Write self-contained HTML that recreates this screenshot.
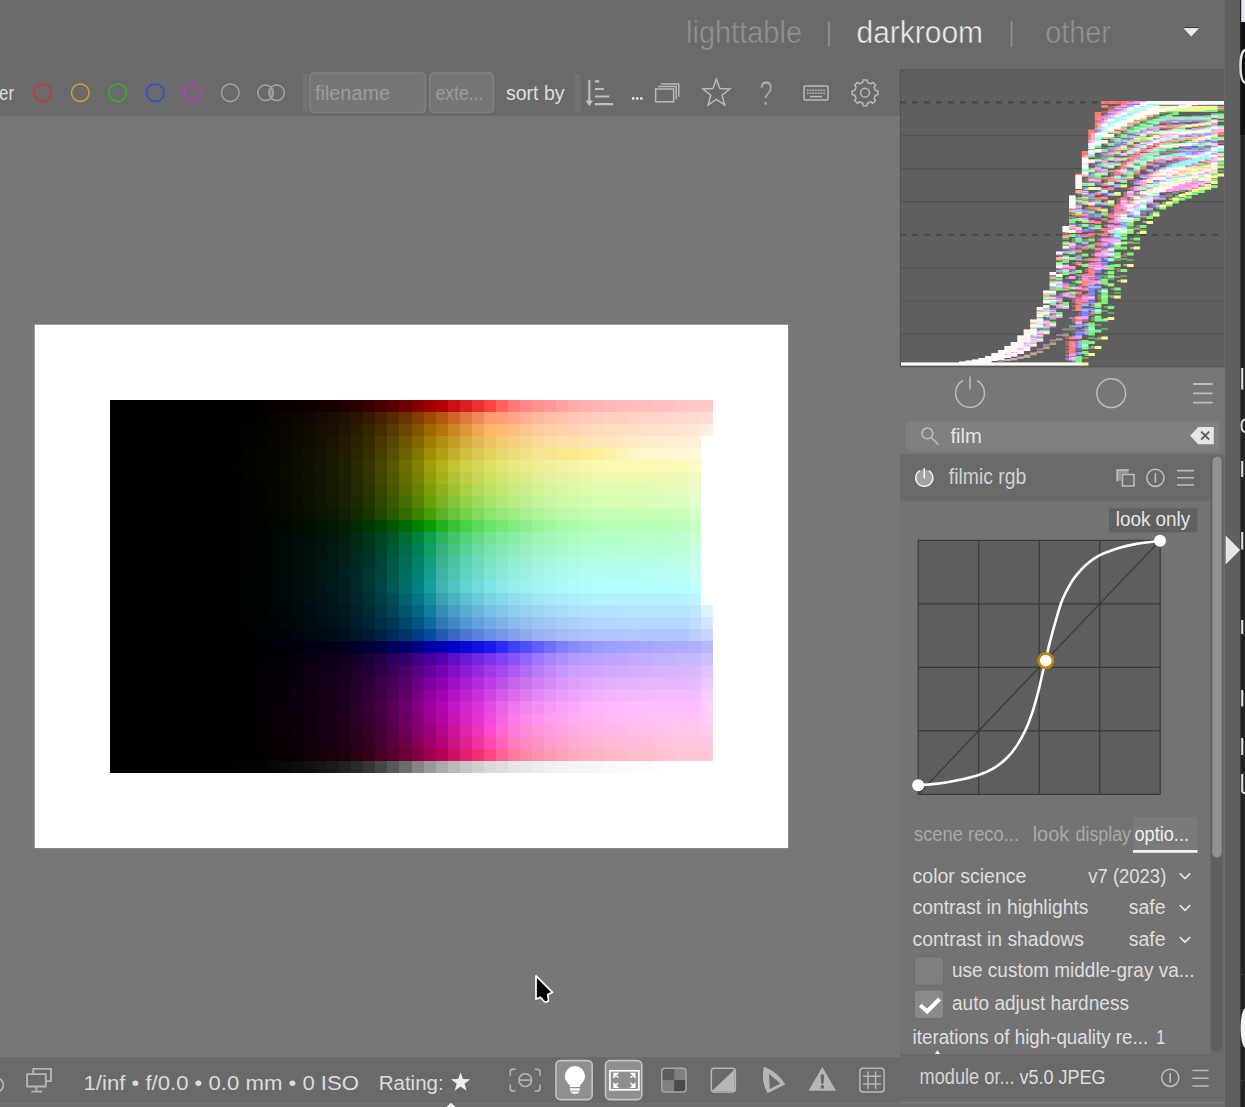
<!DOCTYPE html>
<html lang="en"><head><meta charset="utf-8"><title>darktable - darkroom</title>
<style>
html,body{margin:0;padding:0;background:#777;overflow:hidden}
body{width:1245px;height:1107px;font-family:"Liberation Sans", sans-serif}
svg{display:block;font-family:"Liberation Sans", sans-serif}
.ic{fill:none;stroke:#b9b9b9;stroke-width:1.5}
.icw{fill:none;stroke:#dcdcdc;stroke-width:1.6}
</style></head><body>
<svg width="1245" height="1107" viewBox="0 0 1245 1107">
<rect x="0" y="0" width="1245" height="1107" fill="#777777"/>
<rect x="0" y="0" width="1225" height="116" fill="#6a6a6a"/>
<rect x="900" y="69" width="325" height="400" fill="#777777"/>
<rect x="0" y="1103.3" width="1225" height="4" fill="#707070"/>
<text x="686" y="42.5" font-size="31" fill="#929292" textLength="116" lengthAdjust="spacingAndGlyphs" stroke="#6a6a6a" stroke-width=".45">lighttable</text>
<text x="825.5" y="41" font-size="27" fill="#929292" stroke="#6a6a6a" stroke-width=".45">|</text>
<text x="856.5" y="42.5" font-size="31" fill="#ededed" textLength="126.5" lengthAdjust="spacingAndGlyphs" stroke="#6a6a6a" stroke-width=".45">darkroom</text>
<text x="1008" y="41" font-size="27" fill="#929292" stroke="#6a6a6a" stroke-width=".45">|</text>
<text x="1045.2" y="42.5" font-size="31" fill="#929292" textLength="65.8" lengthAdjust="spacingAndGlyphs" stroke="#6a6a6a" stroke-width=".45">other</text>
<path d="M1183.2 28h16l-8 8.6z" fill="#ececec"/><path d="M1183.6 27.6h15.2" stroke="#3c3c3c" stroke-width="1"/>
<text x="-1" y="99.5" font-size="20" fill="#dedede" textLength="15" lengthAdjust="spacingAndGlyphs">er</text>
<circle cx="42.7" cy="92.7" r="8.8" fill="none" stroke="#c83434" stroke-width="1.5"/>
<circle cx="80.3" cy="92.7" r="8.8" fill="none" stroke="#d6a12e" stroke-width="1.5"/>
<circle cx="117.7" cy="92.7" r="8.8" fill="none" stroke="#31b431" stroke-width="1.5"/>
<circle cx="155.3" cy="92.7" r="8.8" fill="none" stroke="#3148dc" stroke-width="1.5"/>
<circle cx="193" cy="92.7" r="8.8" fill="none" stroke="#c631c6" stroke-width="1.5"/>
<circle cx="230.3" cy="92.7" r="8.8" fill="none" stroke="#a4a4a4" stroke-width="1.5"/>
<circle cx="265.6" cy="92.7" r="7.8" fill="none" stroke="#a4a4a4" stroke-width="1.5"/>
<circle cx="276.6" cy="92.7" r="7.8" fill="none" stroke="#a4a4a4" stroke-width="1.5"/>
<path d="M271.1 87.2a7.8 7.8 0 0 1 0 11a7.8 7.8 0 0 1 0 -11z" fill="#a4a4a4" opacity=".55"/>
<rect x="303" y="73.9" width="5.1" height="37.7" fill="#737373"/>
<rect x="309.7" y="73" width="115.8" height="39.4" fill="#767676" rx="4" stroke="#838383" stroke-width="1.4"/>
<text x="315" y="99.5" font-size="20" fill="#9c9c9c" textLength="75" lengthAdjust="spacingAndGlyphs">filename</text>
<rect x="429.7" y="73" width="63.8" height="39.4" fill="#767676" rx="4" stroke="#838383" stroke-width="1.4"/>
<text x="435.5" y="99.5" font-size="20" fill="#9c9c9c" textLength="48" lengthAdjust="spacingAndGlyphs">exte...</text>
<text x="506" y="99.5" font-size="20" fill="#dedede" textLength="58.5" lengthAdjust="spacingAndGlyphs">sort by</text>
<rect x="575.2" y="73.9" width="5.3" height="37.7" fill="#737373"/>
<path d="M589.3 80v21" stroke="#c0c0c0" stroke-width="2.1" fill="none"/><path d="M585.7 100.4h7.3l-3.65 5.9z" fill="#c0c0c0"/>
<path d="M595 81.3h4.2M595 89h9M595 96.5h14.2M595 104.2h18.2" stroke="#c0c0c0" stroke-width="2.2" fill="none"/>
<g fill="#e6e6e6"><rect x="632" y="97.2" width="2.5" height="2.5"/><rect x="636" y="97.2" width="2.5" height="2.5"/><rect x="640" y="97.2" width="2.5" height="2.5"/></g>
<g class="ic" stroke-width="1.7"><rect x="655.6" y="89" width="18" height="12.8"/><path d="M658.2 86.4h18v12.8M660.8 83.9h18v12.8"/></g>
<polygon class="ic" points="716.4,79.2 719.9,88.6 729.9,89.0 722.0,95.2 724.7,104.9 716.4,99.3 708.1,104.9 710.8,95.2 702.9,89.0 712.9,88.6"/>
<text x="759.6" y="104.7" font-size="35" fill="#b4b4b4" textLength="13" lengthAdjust="spacingAndGlyphs" stroke="#6a6a6a" stroke-width=".7">?</text>
<g class="ic" stroke-width="1.4"><rect x="804" y="86" width="24" height="14" rx="1"/><path d="M807 90.2h18M807 93.2h18" stroke-dasharray="1.6 1.1"/><path d="M810 96.6h12"/></g>
<path class="ic" d="M862.8 82.4L863.2 79.9L867.0 79.9L867.4 82.4L870.8 83.8L872.8 82.3L875.6 85.1L874.1 87.1L875.5 90.5L878.0 90.9L878.0 94.7L875.5 95.1L874.1 98.5L875.6 100.5L872.8 103.3L870.8 101.8L867.4 103.2L867.0 105.7L863.2 105.7L862.8 103.2L859.4 101.8L857.4 103.3L854.6 100.5L856.1 98.5L854.7 95.1L852.2 94.7L852.2 90.9L854.7 90.5L856.1 87.1L854.6 85.1L857.4 82.3L859.4 83.8z" stroke-linejoin="round"/>
<circle class="ic" cx="865" cy="92.7" r="4.4"/>
<rect x="34.7" y="324.7" width="753.4" height="523.4" fill="#ffffff"/>
<g shape-rendering="crispEdges">
<rect x="110" y="400" width="603" height="373" fill="#000"/>
<rect x="219" y="400" width="12" height="12" fill="#010000"/>
<rect x="231" y="400" width="12" height="12" fill="#020000"/>
<rect x="243" y="400" width="12" height="12" fill="#030000"/>
<rect x="255" y="400" width="12" height="12" fill="#040000"/>
<rect x="267" y="400" width="12" height="12" fill="#060000"/>
<rect x="279" y="400" width="12" height="12" fill="#090000"/>
<rect x="291" y="400" width="12" height="12" fill="#0c0000"/>
<rect x="303" y="400" width="12" height="12" fill="#100000"/>
<rect x="315" y="400" width="12" height="12" fill="#140000"/>
<rect x="327" y="400" width="12" height="12" fill="#190000"/>
<rect x="339" y="400" width="12" height="12" fill="#200000"/>
<rect x="351" y="400" width="12" height="12" fill="#2a0000"/>
<rect x="363" y="400" width="12" height="12" fill="#360000"/>
<rect x="375" y="400" width="12" height="12" fill="#460000"/>
<rect x="387" y="400" width="12" height="12" fill="#580000"/>
<rect x="399" y="400" width="13" height="12" fill="#6c0000"/>
<rect x="412" y="400" width="12" height="12" fill="#820000"/>
<rect x="424" y="400" width="12" height="12" fill="#9e0000"/>
<rect x="436" y="400" width="12" height="12" fill="#b20000"/>
<rect x="448" y="400" width="12" height="12" fill="#ca1010"/>
<rect x="460" y="400" width="12" height="12" fill="#de1f1f"/>
<rect x="472" y="400" width="12" height="12" fill="#ef3030"/>
<rect x="484" y="400" width="12" height="12" fill="#ff4242"/>
<rect x="496" y="400" width="12" height="12" fill="#ff6161"/>
<rect x="508" y="400" width="12" height="12" fill="#ff7878"/>
<rect x="520" y="400" width="12" height="12" fill="#ff8787"/>
<rect x="532" y="400" width="12" height="12" fill="#ff9191"/>
<rect x="544" y="400" width="12" height="12" fill="#ff9999"/>
<rect x="556" y="400" width="12" height="12" fill="#ffa2a2"/>
<rect x="568" y="400" width="12" height="12" fill="#ffaaaa"/>
<rect x="580" y="400" width="12" height="12" fill="#ffb0b0"/>
<rect x="592" y="400" width="12" height="12" fill="#ffb4b4"/>
<rect x="604" y="400" width="13" height="12" fill="#ffb7b7"/>
<rect x="617" y="400" width="12" height="12" fill="#ffbaba"/>
<rect x="629" y="400" width="12" height="12" fill="#ffbcbc"/>
<rect x="641" y="400" width="12" height="12" fill="#ffbebe"/>
<rect x="653" y="400" width="12" height="12" fill="#ffc0c0"/>
<rect x="665" y="400" width="12" height="12" fill="#ffc2c2"/>
<rect x="677" y="400" width="12" height="12" fill="#ffc4c4"/>
<rect x="689" y="400" width="12" height="12" fill="#ffc6c6"/>
<rect x="701" y="400" width="12" height="12" fill="#ffc8c8"/>
<rect x="219" y="412" width="12" height="12" fill="#010000"/>
<rect x="231" y="412" width="12" height="12" fill="#020100"/>
<rect x="243" y="412" width="12" height="12" fill="#030100"/>
<rect x="255" y="412" width="12" height="12" fill="#040200"/>
<rect x="267" y="412" width="12" height="12" fill="#060300"/>
<rect x="279" y="412" width="12" height="12" fill="#090400"/>
<rect x="291" y="412" width="12" height="12" fill="#0c0600"/>
<rect x="303" y="412" width="12" height="12" fill="#100800"/>
<rect x="315" y="412" width="12" height="12" fill="#140a00"/>
<rect x="327" y="412" width="12" height="12" fill="#190c00"/>
<rect x="339" y="412" width="12" height="12" fill="#200f00"/>
<rect x="351" y="412" width="12" height="12" fill="#2a1400"/>
<rect x="363" y="412" width="12" height="12" fill="#361a00"/>
<rect x="375" y="412" width="12" height="12" fill="#462200"/>
<rect x="387" y="412" width="12" height="12" fill="#582a00"/>
<rect x="399" y="412" width="13" height="12" fill="#6c3400"/>
<rect x="412" y="412" width="12" height="12" fill="#823f00"/>
<rect x="424" y="412" width="12" height="12" fill="#9e4c00"/>
<rect x="436" y="412" width="12" height="12" fill="#b25711"/>
<rect x="448" y="412" width="12" height="12" fill="#ca6628"/>
<rect x="460" y="412" width="12" height="12" fill="#de7741"/>
<rect x="472" y="412" width="12" height="12" fill="#ef8857"/>
<rect x="484" y="412" width="12" height="12" fill="#ff986b"/>
<rect x="496" y="412" width="12" height="12" fill="#ff9e77"/>
<rect x="508" y="412" width="12" height="12" fill="#ffa583"/>
<rect x="520" y="412" width="12" height="12" fill="#ffb195"/>
<rect x="532" y="412" width="12" height="12" fill="#ffb79f"/>
<rect x="544" y="412" width="12" height="12" fill="#ffbea8"/>
<rect x="556" y="412" width="12" height="12" fill="#ffc2af"/>
<rect x="568" y="412" width="12" height="12" fill="#ffc7b5"/>
<rect x="580" y="412" width="12" height="12" fill="#ffcaba"/>
<rect x="592" y="412" width="12" height="12" fill="#ffcdbe"/>
<rect x="604" y="412" width="13" height="12" fill="#ffcfc0"/>
<rect x="617" y="412" width="12" height="12" fill="#ffd0c2"/>
<rect x="629" y="412" width="12" height="12" fill="#ffd2c5"/>
<rect x="641" y="412" width="12" height="12" fill="#ffd4c7"/>
<rect x="653" y="412" width="12" height="12" fill="#ffd5c9"/>
<rect x="665" y="412" width="12" height="12" fill="#ffd7cb"/>
<rect x="677" y="412" width="12" height="12" fill="#ffd9ce"/>
<rect x="689" y="412" width="12" height="12" fill="#ffdad0"/>
<rect x="701" y="412" width="12" height="12" fill="#ffddd4"/>
<rect x="219" y="424" width="12" height="12" fill="#010000"/>
<rect x="231" y="424" width="12" height="12" fill="#020100"/>
<rect x="243" y="424" width="12" height="12" fill="#030200"/>
<rect x="255" y="424" width="12" height="12" fill="#040300"/>
<rect x="267" y="424" width="12" height="12" fill="#060400"/>
<rect x="279" y="424" width="12" height="12" fill="#090600"/>
<rect x="291" y="424" width="12" height="12" fill="#0c0800"/>
<rect x="303" y="424" width="12" height="12" fill="#100b00"/>
<rect x="315" y="424" width="12" height="12" fill="#140d00"/>
<rect x="327" y="424" width="12" height="12" fill="#191100"/>
<rect x="339" y="424" width="12" height="12" fill="#201500"/>
<rect x="351" y="424" width="12" height="12" fill="#2a1c00"/>
<rect x="363" y="424" width="12" height="12" fill="#362300"/>
<rect x="375" y="424" width="12" height="12" fill="#462e00"/>
<rect x="387" y="424" width="12" height="12" fill="#583a00"/>
<rect x="399" y="424" width="13" height="12" fill="#6c4700"/>
<rect x="412" y="424" width="12" height="12" fill="#825600"/>
<rect x="424" y="424" width="12" height="12" fill="#9e6800"/>
<rect x="436" y="424" width="12" height="12" fill="#b2760b"/>
<rect x="448" y="424" width="12" height="12" fill="#c98722"/>
<rect x="460" y="424" width="12" height="12" fill="#de983b"/>
<rect x="472" y="424" width="12" height="12" fill="#eea752"/>
<rect x="484" y="424" width="12" height="12" fill="#feb667"/>
<rect x="496" y="424" width="12" height="12" fill="#ffbb74"/>
<rect x="508" y="424" width="12" height="12" fill="#ffbf80"/>
<rect x="520" y="424" width="12" height="12" fill="#ffc58f"/>
<rect x="532" y="424" width="12" height="12" fill="#ffcc9e"/>
<rect x="544" y="424" width="12" height="12" fill="#ffcfa6"/>
<rect x="556" y="424" width="12" height="12" fill="#ffd3ad"/>
<rect x="568" y="424" width="12" height="12" fill="#ffd6b5"/>
<rect x="580" y="424" width="12" height="12" fill="#ffd8b9"/>
<rect x="592" y="424" width="12" height="12" fill="#ffdabd"/>
<rect x="604" y="424" width="13" height="12" fill="#ffddc1"/>
<rect x="617" y="424" width="12" height="12" fill="#ffdfc6"/>
<rect x="629" y="424" width="12" height="12" fill="#ffe0c8"/>
<rect x="641" y="424" width="12" height="12" fill="#ffe2cb"/>
<rect x="653" y="424" width="12" height="12" fill="#ffe3ce"/>
<rect x="665" y="424" width="12" height="12" fill="#ffe5d1"/>
<rect x="677" y="424" width="12" height="12" fill="#ffe6d3"/>
<rect x="689" y="424" width="12" height="12" fill="#ffe8d6"/>
<rect x="701" y="424" width="12" height="12" fill="#ffefe4"/>
<rect x="219" y="436" width="12" height="12" fill="#010000"/>
<rect x="231" y="436" width="12" height="12" fill="#020100"/>
<rect x="243" y="436" width="12" height="12" fill="#030200"/>
<rect x="255" y="436" width="12" height="12" fill="#040300"/>
<rect x="267" y="436" width="12" height="12" fill="#060500"/>
<rect x="279" y="436" width="12" height="12" fill="#090700"/>
<rect x="291" y="436" width="12" height="12" fill="#0c0900"/>
<rect x="303" y="436" width="12" height="12" fill="#100d00"/>
<rect x="315" y="436" width="12" height="12" fill="#141000"/>
<rect x="327" y="436" width="12" height="12" fill="#191400"/>
<rect x="339" y="436" width="12" height="12" fill="#201900"/>
<rect x="351" y="436" width="12" height="12" fill="#2a2100"/>
<rect x="363" y="436" width="12" height="12" fill="#362a00"/>
<rect x="375" y="436" width="12" height="12" fill="#463800"/>
<rect x="387" y="436" width="12" height="12" fill="#584600"/>
<rect x="399" y="436" width="13" height="12" fill="#6c5600"/>
<rect x="412" y="436" width="12" height="12" fill="#826700"/>
<rect x="424" y="436" width="12" height="12" fill="#9e7d00"/>
<rect x="436" y="436" width="12" height="12" fill="#b28e13"/>
<rect x="448" y="436" width="12" height="12" fill="#c59e29"/>
<rect x="460" y="436" width="12" height="12" fill="#d5ac40"/>
<rect x="472" y="436" width="12" height="12" fill="#e1b853"/>
<rect x="484" y="436" width="12" height="12" fill="#ecc364"/>
<rect x="496" y="436" width="12" height="12" fill="#f1ca72"/>
<rect x="508" y="436" width="12" height="12" fill="#f5cf7f"/>
<rect x="520" y="436" width="12" height="12" fill="#f7d48b"/>
<rect x="532" y="436" width="12" height="12" fill="#fbda97"/>
<rect x="544" y="436" width="12" height="12" fill="#fedea0"/>
<rect x="556" y="436" width="12" height="12" fill="#ffe1a7"/>
<rect x="568" y="436" width="12" height="12" fill="#ffe1a8"/>
<rect x="580" y="436" width="12" height="12" fill="#ffe3b0"/>
<rect x="592" y="436" width="12" height="12" fill="#ffe6b8"/>
<rect x="604" y="436" width="13" height="12" fill="#ffe7bd"/>
<rect x="617" y="436" width="12" height="12" fill="#ffe9c2"/>
<rect x="629" y="436" width="12" height="12" fill="#ffeac7"/>
<rect x="641" y="436" width="12" height="12" fill="#ffeccc"/>
<rect x="653" y="436" width="12" height="12" fill="#ffedcf"/>
<rect x="665" y="436" width="12" height="12" fill="#ffeed2"/>
<rect x="677" y="436" width="12" height="12" fill="#ffefd6"/>
<rect x="689" y="436" width="12" height="12" fill="#fff1d9"/>
<rect x="701" y="436" width="12" height="12" fill="#ffffff"/>
<rect x="219" y="448" width="12" height="12" fill="#010000"/>
<rect x="231" y="448" width="12" height="12" fill="#020100"/>
<rect x="243" y="448" width="12" height="12" fill="#030300"/>
<rect x="255" y="448" width="12" height="12" fill="#040400"/>
<rect x="267" y="448" width="12" height="12" fill="#060600"/>
<rect x="279" y="448" width="12" height="12" fill="#090800"/>
<rect x="291" y="448" width="12" height="12" fill="#0c0b00"/>
<rect x="303" y="448" width="12" height="12" fill="#100f00"/>
<rect x="315" y="448" width="12" height="12" fill="#141200"/>
<rect x="327" y="448" width="12" height="12" fill="#191700"/>
<rect x="339" y="448" width="12" height="12" fill="#201d00"/>
<rect x="351" y="448" width="12" height="12" fill="#2a2600"/>
<rect x="363" y="448" width="12" height="12" fill="#363000"/>
<rect x="375" y="448" width="12" height="12" fill="#463f00"/>
<rect x="387" y="448" width="12" height="12" fill="#584f00"/>
<rect x="399" y="448" width="13" height="12" fill="#6c6200"/>
<rect x="412" y="448" width="12" height="12" fill="#827600"/>
<rect x="424" y="448" width="12" height="12" fill="#9e8f03"/>
<rect x="436" y="448" width="12" height="12" fill="#b2a117"/>
<rect x="448" y="448" width="12" height="12" fill="#c3b12d"/>
<rect x="460" y="448" width="12" height="12" fill="#d1bf42"/>
<rect x="472" y="448" width="12" height="12" fill="#dbc954"/>
<rect x="484" y="448" width="12" height="12" fill="#e4d263"/>
<rect x="496" y="448" width="12" height="12" fill="#e9d870"/>
<rect x="508" y="448" width="12" height="12" fill="#eddc7d"/>
<rect x="520" y="448" width="12" height="12" fill="#f0e088"/>
<rect x="532" y="448" width="12" height="12" fill="#f4e494"/>
<rect x="544" y="448" width="12" height="12" fill="#f6e58a"/>
<rect x="556" y="448" width="12" height="12" fill="#f9e88c"/>
<rect x="568" y="448" width="12" height="12" fill="#fbea8f"/>
<rect x="580" y="448" width="12" height="12" fill="#fded94"/>
<rect x="592" y="448" width="12" height="12" fill="#ffef99"/>
<rect x="604" y="448" width="13" height="12" fill="#fff1a8"/>
<rect x="617" y="448" width="12" height="12" fill="#fff3b8"/>
<rect x="629" y="448" width="12" height="12" fill="#fff5c8"/>
<rect x="641" y="448" width="12" height="12" fill="#fff6cb"/>
<rect x="653" y="448" width="12" height="12" fill="#fff6cf"/>
<rect x="665" y="448" width="12" height="12" fill="#fff7d2"/>
<rect x="677" y="448" width="12" height="12" fill="#fff7d5"/>
<rect x="689" y="448" width="12" height="12" fill="#fff8d9"/>
<rect x="701" y="448" width="12" height="12" fill="#ffffff"/>
<rect x="219" y="460" width="12" height="12" fill="#010100"/>
<rect x="231" y="460" width="12" height="12" fill="#020200"/>
<rect x="243" y="460" width="12" height="12" fill="#030300"/>
<rect x="255" y="460" width="12" height="12" fill="#040400"/>
<rect x="267" y="460" width="12" height="12" fill="#060600"/>
<rect x="279" y="460" width="12" height="12" fill="#090900"/>
<rect x="291" y="460" width="12" height="12" fill="#0c0c00"/>
<rect x="303" y="460" width="12" height="12" fill="#101000"/>
<rect x="315" y="460" width="12" height="12" fill="#141400"/>
<rect x="327" y="460" width="12" height="12" fill="#191900"/>
<rect x="339" y="460" width="12" height="12" fill="#202000"/>
<rect x="351" y="460" width="12" height="12" fill="#2a2a00"/>
<rect x="363" y="460" width="12" height="12" fill="#363600"/>
<rect x="375" y="460" width="12" height="12" fill="#464600"/>
<rect x="387" y="460" width="12" height="12" fill="#585800"/>
<rect x="399" y="460" width="13" height="12" fill="#6c6c00"/>
<rect x="412" y="460" width="12" height="12" fill="#828200"/>
<rect x="424" y="460" width="12" height="12" fill="#9e9e08"/>
<rect x="436" y="460" width="12" height="12" fill="#b2b21d"/>
<rect x="448" y="460" width="12" height="12" fill="#c2c232"/>
<rect x="460" y="460" width="12" height="12" fill="#cfcf46"/>
<rect x="472" y="460" width="12" height="12" fill="#d7d756"/>
<rect x="484" y="460" width="12" height="12" fill="#dfdf64"/>
<rect x="496" y="460" width="12" height="12" fill="#e4e471"/>
<rect x="508" y="460" width="12" height="12" fill="#e8e87d"/>
<rect x="520" y="460" width="12" height="12" fill="#ebeb88"/>
<rect x="532" y="460" width="12" height="12" fill="#eeee94"/>
<rect x="544" y="460" width="12" height="12" fill="#f1f19b"/>
<rect x="556" y="460" width="12" height="12" fill="#f4f4a2"/>
<rect x="568" y="460" width="12" height="12" fill="#f6f6a7"/>
<rect x="580" y="460" width="12" height="12" fill="#f8f8ab"/>
<rect x="592" y="460" width="12" height="12" fill="#fafaaf"/>
<rect x="604" y="460" width="13" height="12" fill="#fafab0"/>
<rect x="617" y="460" width="24" height="12" fill="#fafab1"/>
<rect x="641" y="460" width="12" height="12" fill="#fafab3"/>
<rect x="653" y="460" width="12" height="12" fill="#fafab4"/>
<rect x="665" y="460" width="12" height="12" fill="#fafab6"/>
<rect x="677" y="460" width="12" height="12" fill="#fafab9"/>
<rect x="689" y="460" width="12" height="12" fill="#fafac4"/>
<rect x="701" y="460" width="12" height="12" fill="#ffffff"/>
<rect x="219" y="472" width="12" height="12" fill="#000100"/>
<rect x="231" y="472" width="12" height="12" fill="#010200"/>
<rect x="243" y="472" width="12" height="12" fill="#030300"/>
<rect x="255" y="472" width="12" height="12" fill="#040400"/>
<rect x="267" y="472" width="12" height="12" fill="#060600"/>
<rect x="279" y="472" width="12" height="12" fill="#080900"/>
<rect x="291" y="472" width="12" height="12" fill="#0b0c00"/>
<rect x="303" y="472" width="12" height="12" fill="#0f1000"/>
<rect x="315" y="472" width="12" height="12" fill="#121400"/>
<rect x="327" y="472" width="12" height="12" fill="#171900"/>
<rect x="339" y="472" width="12" height="12" fill="#1d2000"/>
<rect x="351" y="472" width="12" height="12" fill="#262a00"/>
<rect x="363" y="472" width="12" height="12" fill="#303600"/>
<rect x="375" y="472" width="12" height="12" fill="#3f4600"/>
<rect x="387" y="472" width="12" height="12" fill="#4f5800"/>
<rect x="399" y="472" width="13" height="12" fill="#626c00"/>
<rect x="412" y="472" width="12" height="12" fill="#768200"/>
<rect x="424" y="472" width="12" height="12" fill="#8f9e08"/>
<rect x="436" y="472" width="12" height="12" fill="#a2b21d"/>
<rect x="448" y="472" width="12" height="12" fill="#b0c232"/>
<rect x="460" y="472" width="12" height="12" fill="#bdcf46"/>
<rect x="472" y="472" width="12" height="12" fill="#c6d756"/>
<rect x="484" y="472" width="12" height="12" fill="#cedf64"/>
<rect x="496" y="472" width="12" height="12" fill="#d3e471"/>
<rect x="508" y="472" width="12" height="12" fill="#d8e87d"/>
<rect x="520" y="472" width="12" height="12" fill="#dbeb88"/>
<rect x="532" y="472" width="12" height="12" fill="#e0ee94"/>
<rect x="544" y="472" width="12" height="12" fill="#e3f19b"/>
<rect x="556" y="472" width="12" height="12" fill="#e6f4a2"/>
<rect x="568" y="472" width="12" height="12" fill="#e9f6a7"/>
<rect x="580" y="472" width="12" height="12" fill="#ebf8ab"/>
<rect x="592" y="472" width="12" height="12" fill="#edfaaf"/>
<rect x="604" y="472" width="13" height="12" fill="#edfab0"/>
<rect x="617" y="472" width="12" height="12" fill="#edfab1"/>
<rect x="629" y="472" width="12" height="12" fill="#eefab1"/>
<rect x="641" y="472" width="12" height="12" fill="#eefab3"/>
<rect x="653" y="472" width="12" height="12" fill="#eefab4"/>
<rect x="665" y="472" width="12" height="12" fill="#eefab6"/>
<rect x="677" y="472" width="12" height="12" fill="#effab9"/>
<rect x="689" y="472" width="12" height="12" fill="#f0fac4"/>
<rect x="701" y="472" width="12" height="12" fill="#ffffff"/>
<rect x="219" y="484" width="12" height="12" fill="#000100"/>
<rect x="231" y="484" width="12" height="12" fill="#010200"/>
<rect x="243" y="484" width="12" height="12" fill="#020300"/>
<rect x="255" y="484" width="12" height="12" fill="#030400"/>
<rect x="267" y="484" width="12" height="12" fill="#050600"/>
<rect x="279" y="484" width="12" height="12" fill="#070900"/>
<rect x="291" y="484" width="12" height="12" fill="#090c00"/>
<rect x="303" y="484" width="12" height="12" fill="#0d1000"/>
<rect x="315" y="484" width="12" height="12" fill="#101400"/>
<rect x="327" y="484" width="12" height="12" fill="#141900"/>
<rect x="339" y="484" width="12" height="12" fill="#192000"/>
<rect x="351" y="484" width="12" height="12" fill="#212a00"/>
<rect x="363" y="484" width="12" height="12" fill="#2a3600"/>
<rect x="375" y="484" width="12" height="12" fill="#384600"/>
<rect x="387" y="484" width="12" height="12" fill="#465800"/>
<rect x="399" y="484" width="13" height="12" fill="#566c00"/>
<rect x="412" y="484" width="12" height="12" fill="#678200"/>
<rect x="424" y="484" width="12" height="12" fill="#7d9e08"/>
<rect x="436" y="484" width="12" height="12" fill="#8eb21d"/>
<rect x="448" y="484" width="12" height="12" fill="#9dc233"/>
<rect x="460" y="484" width="12" height="12" fill="#a9d047"/>
<rect x="472" y="484" width="12" height="12" fill="#b3d957"/>
<rect x="484" y="484" width="12" height="12" fill="#bce266"/>
<rect x="496" y="484" width="12" height="12" fill="#c2e772"/>
<rect x="508" y="484" width="12" height="12" fill="#c8eb7f"/>
<rect x="520" y="484" width="12" height="12" fill="#cced8a"/>
<rect x="532" y="484" width="12" height="12" fill="#d2f195"/>
<rect x="544" y="484" width="12" height="12" fill="#d6f49d"/>
<rect x="556" y="484" width="12" height="12" fill="#daf6a4"/>
<rect x="568" y="484" width="12" height="12" fill="#ddf9a9"/>
<rect x="580" y="484" width="12" height="12" fill="#dffbad"/>
<rect x="592" y="484" width="12" height="12" fill="#e2fcb1"/>
<rect x="604" y="484" width="25" height="12" fill="#e2fcb2"/>
<rect x="629" y="484" width="12" height="12" fill="#e3fcb3"/>
<rect x="641" y="484" width="12" height="12" fill="#e3fcb5"/>
<rect x="653" y="484" width="12" height="12" fill="#e4fcb7"/>
<rect x="665" y="484" width="12" height="12" fill="#e5fcbb"/>
<rect x="677" y="484" width="12" height="12" fill="#e6fcbe"/>
<rect x="689" y="484" width="12" height="12" fill="#eafcca"/>
<rect x="701" y="484" width="12" height="12" fill="#ffffff"/>
<rect x="219" y="496" width="12" height="12" fill="#000100"/>
<rect x="231" y="496" width="12" height="12" fill="#010200"/>
<rect x="243" y="496" width="12" height="12" fill="#020300"/>
<rect x="255" y="496" width="12" height="12" fill="#030400"/>
<rect x="267" y="496" width="12" height="12" fill="#040600"/>
<rect x="279" y="496" width="12" height="12" fill="#060900"/>
<rect x="291" y="496" width="12" height="12" fill="#080c00"/>
<rect x="303" y="496" width="12" height="12" fill="#0b1000"/>
<rect x="315" y="496" width="12" height="12" fill="#0d1400"/>
<rect x="327" y="496" width="12" height="12" fill="#111900"/>
<rect x="339" y="496" width="12" height="12" fill="#152000"/>
<rect x="351" y="496" width="12" height="12" fill="#1c2a00"/>
<rect x="363" y="496" width="12" height="12" fill="#233600"/>
<rect x="375" y="496" width="12" height="12" fill="#2e4600"/>
<rect x="387" y="496" width="12" height="12" fill="#3a5800"/>
<rect x="399" y="496" width="13" height="12" fill="#476c00"/>
<rect x="412" y="496" width="12" height="12" fill="#568200"/>
<rect x="424" y="496" width="12" height="12" fill="#689e07"/>
<rect x="436" y="496" width="12" height="12" fill="#78b222"/>
<rect x="448" y="496" width="12" height="12" fill="#86c337"/>
<rect x="460" y="496" width="12" height="12" fill="#93d14b"/>
<rect x="472" y="496" width="12" height="12" fill="#9edb5b"/>
<rect x="484" y="496" width="12" height="12" fill="#a8e46a"/>
<rect x="496" y="496" width="12" height="12" fill="#b0e977"/>
<rect x="508" y="496" width="12" height="12" fill="#b7ed83"/>
<rect x="520" y="496" width="12" height="12" fill="#bcf08e"/>
<rect x="532" y="496" width="12" height="12" fill="#c3f499"/>
<rect x="544" y="496" width="12" height="12" fill="#c8f6a0"/>
<rect x="556" y="496" width="12" height="12" fill="#ccf9a6"/>
<rect x="568" y="496" width="12" height="12" fill="#d0fbab"/>
<rect x="580" y="496" width="12" height="12" fill="#d2fdaf"/>
<rect x="592" y="496" width="12" height="12" fill="#d5ffb3"/>
<rect x="604" y="496" width="13" height="12" fill="#d6ffb3"/>
<rect x="617" y="496" width="12" height="12" fill="#d6ffb4"/>
<rect x="629" y="496" width="12" height="12" fill="#d6ffb5"/>
<rect x="641" y="496" width="12" height="12" fill="#d7ffb7"/>
<rect x="653" y="496" width="12" height="12" fill="#d8ffb9"/>
<rect x="665" y="496" width="12" height="12" fill="#daffbc"/>
<rect x="677" y="496" width="12" height="12" fill="#dcffc0"/>
<rect x="689" y="496" width="12" height="12" fill="#e2ffcc"/>
<rect x="701" y="496" width="12" height="12" fill="#ffffff"/>
<rect x="219" y="508" width="12" height="12" fill="#000100"/>
<rect x="231" y="508" width="12" height="12" fill="#010200"/>
<rect x="243" y="508" width="12" height="12" fill="#010300"/>
<rect x="255" y="508" width="12" height="12" fill="#020400"/>
<rect x="267" y="508" width="12" height="12" fill="#030600"/>
<rect x="279" y="508" width="12" height="12" fill="#040900"/>
<rect x="291" y="508" width="12" height="12" fill="#060c00"/>
<rect x="303" y="508" width="12" height="12" fill="#081000"/>
<rect x="315" y="508" width="12" height="12" fill="#0a1400"/>
<rect x="327" y="508" width="12" height="12" fill="#0c1900"/>
<rect x="339" y="508" width="12" height="12" fill="#0f2000"/>
<rect x="351" y="508" width="12" height="12" fill="#142a00"/>
<rect x="363" y="508" width="12" height="12" fill="#1a3600"/>
<rect x="375" y="508" width="12" height="12" fill="#224600"/>
<rect x="387" y="508" width="12" height="12" fill="#2a5800"/>
<rect x="399" y="508" width="13" height="12" fill="#346c00"/>
<rect x="412" y="508" width="12" height="12" fill="#3f8200"/>
<rect x="424" y="508" width="12" height="12" fill="#4c9e08"/>
<rect x="436" y="508" width="12" height="12" fill="#5bb225"/>
<rect x="448" y="508" width="12" height="12" fill="#69c33b"/>
<rect x="460" y="508" width="12" height="12" fill="#77d14d"/>
<rect x="472" y="508" width="12" height="12" fill="#83db5d"/>
<rect x="484" y="508" width="12" height="12" fill="#8ee46c"/>
<rect x="496" y="508" width="12" height="12" fill="#98e979"/>
<rect x="508" y="508" width="12" height="12" fill="#a0ed85"/>
<rect x="520" y="508" width="12" height="12" fill="#a8f090"/>
<rect x="532" y="508" width="12" height="12" fill="#b0f49a"/>
<rect x="544" y="508" width="12" height="12" fill="#b6f6a1"/>
<rect x="556" y="508" width="12" height="12" fill="#baf9a7"/>
<rect x="568" y="508" width="12" height="12" fill="#bffbab"/>
<rect x="580" y="508" width="12" height="12" fill="#c2fdaf"/>
<rect x="592" y="508" width="25" height="12" fill="#c5ffb3"/>
<rect x="617" y="508" width="12" height="12" fill="#c6ffb4"/>
<rect x="629" y="508" width="12" height="12" fill="#c7ffb5"/>
<rect x="641" y="508" width="12" height="12" fill="#c7ffb6"/>
<rect x="653" y="508" width="12" height="12" fill="#c8ffb7"/>
<rect x="665" y="508" width="12" height="12" fill="#caffba"/>
<rect x="677" y="508" width="12" height="12" fill="#ccffbc"/>
<rect x="689" y="508" width="12" height="12" fill="#d4ffc8"/>
<rect x="701" y="508" width="12" height="12" fill="#ffffff"/>
<rect x="219" y="520" width="12" height="12" fill="#000100"/>
<rect x="231" y="520" width="12" height="12" fill="#000200"/>
<rect x="243" y="520" width="12" height="12" fill="#000300"/>
<rect x="255" y="520" width="12" height="12" fill="#000400"/>
<rect x="267" y="520" width="12" height="12" fill="#000600"/>
<rect x="279" y="520" width="12" height="12" fill="#000900"/>
<rect x="291" y="520" width="12" height="12" fill="#000c00"/>
<rect x="303" y="520" width="12" height="12" fill="#001000"/>
<rect x="315" y="520" width="12" height="12" fill="#001400"/>
<rect x="327" y="520" width="12" height="12" fill="#001900"/>
<rect x="339" y="520" width="12" height="12" fill="#002000"/>
<rect x="351" y="520" width="12" height="12" fill="#002a00"/>
<rect x="363" y="520" width="12" height="12" fill="#003600"/>
<rect x="375" y="520" width="12" height="12" fill="#004600"/>
<rect x="387" y="520" width="12" height="12" fill="#005800"/>
<rect x="399" y="520" width="13" height="12" fill="#006c00"/>
<rect x="412" y="520" width="12" height="12" fill="#008200"/>
<rect x="424" y="520" width="12" height="12" fill="#069e06"/>
<rect x="436" y="520" width="12" height="12" fill="#20b220"/>
<rect x="448" y="520" width="12" height="12" fill="#36c336"/>
<rect x="460" y="520" width="12" height="12" fill="#4ad14a"/>
<rect x="472" y="520" width="12" height="12" fill="#5adb5a"/>
<rect x="484" y="520" width="12" height="12" fill="#69e469"/>
<rect x="496" y="520" width="12" height="12" fill="#76e976"/>
<rect x="508" y="520" width="12" height="12" fill="#82ed82"/>
<rect x="520" y="520" width="12" height="12" fill="#8df08d"/>
<rect x="532" y="520" width="12" height="12" fill="#98f498"/>
<rect x="544" y="520" width="12" height="12" fill="#9ff69f"/>
<rect x="556" y="520" width="12" height="12" fill="#a6f9a6"/>
<rect x="568" y="520" width="12" height="12" fill="#abfbab"/>
<rect x="580" y="520" width="12" height="12" fill="#affdaf"/>
<rect x="592" y="520" width="25" height="12" fill="#b3ffb3"/>
<rect x="617" y="520" width="12" height="12" fill="#b4ffb4"/>
<rect x="629" y="520" width="12" height="12" fill="#b5ffb5"/>
<rect x="641" y="520" width="12" height="12" fill="#b6ffb6"/>
<rect x="653" y="520" width="12" height="12" fill="#b7ffb7"/>
<rect x="665" y="520" width="12" height="12" fill="#baffba"/>
<rect x="677" y="520" width="12" height="12" fill="#bcffbc"/>
<rect x="689" y="520" width="12" height="12" fill="#c8ffc8"/>
<rect x="701" y="520" width="12" height="12" fill="#ffffff"/>
<rect x="219" y="532" width="12" height="12" fill="#000100"/>
<rect x="231" y="532" width="12" height="12" fill="#000201"/>
<rect x="243" y="532" width="12" height="12" fill="#000301"/>
<rect x="255" y="532" width="12" height="12" fill="#000402"/>
<rect x="267" y="532" width="12" height="12" fill="#000603"/>
<rect x="279" y="532" width="12" height="12" fill="#000904"/>
<rect x="291" y="532" width="12" height="12" fill="#000c06"/>
<rect x="303" y="532" width="12" height="12" fill="#001008"/>
<rect x="315" y="532" width="12" height="12" fill="#00140a"/>
<rect x="327" y="532" width="12" height="12" fill="#00190c"/>
<rect x="339" y="532" width="12" height="12" fill="#00200f"/>
<rect x="351" y="532" width="12" height="12" fill="#002a14"/>
<rect x="363" y="532" width="12" height="12" fill="#00361a"/>
<rect x="375" y="532" width="12" height="12" fill="#004622"/>
<rect x="387" y="532" width="12" height="12" fill="#00582a"/>
<rect x="399" y="532" width="13" height="12" fill="#006c34"/>
<rect x="412" y="532" width="12" height="12" fill="#00823f"/>
<rect x="424" y="532" width="12" height="12" fill="#0e9e4d"/>
<rect x="436" y="532" width="12" height="12" fill="#31b25f"/>
<rect x="448" y="532" width="12" height="12" fill="#45c36d"/>
<rect x="460" y="532" width="12" height="12" fill="#56d17b"/>
<rect x="472" y="532" width="12" height="12" fill="#65db87"/>
<rect x="484" y="532" width="12" height="12" fill="#73e493"/>
<rect x="496" y="532" width="12" height="12" fill="#80e99c"/>
<rect x="508" y="532" width="12" height="12" fill="#8beda5"/>
<rect x="520" y="532" width="12" height="12" fill="#96f0ac"/>
<rect x="532" y="532" width="12" height="12" fill="#9df4b3"/>
<rect x="544" y="532" width="12" height="12" fill="#a3f6b7"/>
<rect x="556" y="532" width="12" height="12" fill="#a8f9bc"/>
<rect x="568" y="532" width="12" height="12" fill="#acfbbf"/>
<rect x="580" y="532" width="12" height="12" fill="#b0fdc2"/>
<rect x="592" y="532" width="25" height="12" fill="#b3ffc5"/>
<rect x="617" y="532" width="12" height="12" fill="#b4ffc6"/>
<rect x="629" y="532" width="12" height="12" fill="#b5ffc7"/>
<rect x="641" y="532" width="12" height="12" fill="#b6ffc7"/>
<rect x="653" y="532" width="12" height="12" fill="#b7ffc8"/>
<rect x="665" y="532" width="12" height="12" fill="#baffca"/>
<rect x="677" y="532" width="12" height="12" fill="#bcffcc"/>
<rect x="689" y="532" width="12" height="12" fill="#c8ffd4"/>
<rect x="701" y="532" width="12" height="12" fill="#ffffff"/>
<rect x="219" y="544" width="12" height="12" fill="#000100"/>
<rect x="231" y="544" width="12" height="12" fill="#000201"/>
<rect x="243" y="544" width="12" height="12" fill="#000302"/>
<rect x="255" y="544" width="12" height="12" fill="#000403"/>
<rect x="267" y="544" width="12" height="12" fill="#000604"/>
<rect x="279" y="544" width="12" height="12" fill="#000906"/>
<rect x="291" y="544" width="12" height="12" fill="#000c08"/>
<rect x="303" y="544" width="12" height="12" fill="#00100b"/>
<rect x="315" y="544" width="12" height="12" fill="#00140d"/>
<rect x="327" y="544" width="12" height="12" fill="#001911"/>
<rect x="339" y="544" width="12" height="12" fill="#002015"/>
<rect x="351" y="544" width="12" height="12" fill="#002a1c"/>
<rect x="363" y="544" width="12" height="12" fill="#003623"/>
<rect x="375" y="544" width="12" height="12" fill="#00462e"/>
<rect x="387" y="544" width="12" height="12" fill="#00583a"/>
<rect x="399" y="544" width="13" height="12" fill="#006c47"/>
<rect x="412" y="544" width="12" height="12" fill="#008256"/>
<rect x="424" y="544" width="12" height="12" fill="#119e69"/>
<rect x="436" y="544" width="12" height="12" fill="#37b27c"/>
<rect x="448" y="544" width="12" height="12" fill="#49c38a"/>
<rect x="460" y="544" width="12" height="12" fill="#5ad198"/>
<rect x="472" y="544" width="12" height="12" fill="#69dba3"/>
<rect x="484" y="544" width="12" height="12" fill="#77e4ad"/>
<rect x="496" y="544" width="12" height="12" fill="#84e9b5"/>
<rect x="508" y="544" width="12" height="12" fill="#8fedbc"/>
<rect x="520" y="544" width="12" height="12" fill="#98f0c1"/>
<rect x="532" y="544" width="12" height="12" fill="#9ff4c6"/>
<rect x="544" y="544" width="12" height="12" fill="#a4f6ca"/>
<rect x="556" y="544" width="12" height="12" fill="#a9f9cd"/>
<rect x="568" y="544" width="12" height="12" fill="#adfbd0"/>
<rect x="580" y="544" width="12" height="12" fill="#b0fdd3"/>
<rect x="592" y="544" width="12" height="12" fill="#b3ffd5"/>
<rect x="604" y="544" width="25" height="12" fill="#b4ffd6"/>
<rect x="629" y="544" width="12" height="12" fill="#b5ffd6"/>
<rect x="641" y="544" width="12" height="12" fill="#b6ffd7"/>
<rect x="653" y="544" width="12" height="12" fill="#b7ffd8"/>
<rect x="665" y="544" width="12" height="12" fill="#baffd9"/>
<rect x="677" y="544" width="12" height="12" fill="#bcffda"/>
<rect x="689" y="544" width="12" height="12" fill="#c8ffe0"/>
<rect x="701" y="544" width="12" height="12" fill="#ffffff"/>
<rect x="219" y="556" width="12" height="12" fill="#000100"/>
<rect x="231" y="556" width="12" height="12" fill="#000201"/>
<rect x="243" y="556" width="12" height="12" fill="#000302"/>
<rect x="255" y="556" width="12" height="12" fill="#000403"/>
<rect x="267" y="556" width="12" height="12" fill="#000605"/>
<rect x="279" y="556" width="12" height="12" fill="#000907"/>
<rect x="291" y="556" width="12" height="12" fill="#000c09"/>
<rect x="303" y="556" width="12" height="12" fill="#00100d"/>
<rect x="315" y="556" width="12" height="12" fill="#001410"/>
<rect x="327" y="556" width="12" height="12" fill="#001914"/>
<rect x="339" y="556" width="12" height="12" fill="#002019"/>
<rect x="351" y="556" width="12" height="12" fill="#002a21"/>
<rect x="363" y="556" width="12" height="12" fill="#00362a"/>
<rect x="375" y="556" width="12" height="12" fill="#004638"/>
<rect x="387" y="556" width="12" height="12" fill="#005846"/>
<rect x="399" y="556" width="13" height="12" fill="#006c56"/>
<rect x="412" y="556" width="12" height="12" fill="#008267"/>
<rect x="424" y="556" width="12" height="12" fill="#159e7e"/>
<rect x="436" y="556" width="12" height="12" fill="#3db291"/>
<rect x="448" y="556" width="12" height="12" fill="#4ec3a1"/>
<rect x="460" y="556" width="12" height="12" fill="#5ed1ae"/>
<rect x="472" y="556" width="12" height="12" fill="#6ddbb9"/>
<rect x="484" y="556" width="12" height="12" fill="#7be4c2"/>
<rect x="496" y="556" width="12" height="12" fill="#87e9c9"/>
<rect x="508" y="556" width="12" height="12" fill="#93edcf"/>
<rect x="520" y="556" width="12" height="12" fill="#9bf0d3"/>
<rect x="532" y="556" width="12" height="12" fill="#a1f4d7"/>
<rect x="544" y="556" width="12" height="12" fill="#a5f6da"/>
<rect x="556" y="556" width="12" height="12" fill="#aaf9dd"/>
<rect x="568" y="556" width="12" height="12" fill="#adfbe0"/>
<rect x="580" y="556" width="12" height="12" fill="#b1fde2"/>
<rect x="592" y="556" width="12" height="12" fill="#b3ffe4"/>
<rect x="604" y="556" width="13" height="12" fill="#b4ffe4"/>
<rect x="617" y="556" width="12" height="12" fill="#b4ffe5"/>
<rect x="629" y="556" width="12" height="12" fill="#b5ffe5"/>
<rect x="641" y="556" width="12" height="12" fill="#b6ffe5"/>
<rect x="653" y="556" width="12" height="12" fill="#b7ffe6"/>
<rect x="665" y="556" width="12" height="12" fill="#baffe6"/>
<rect x="677" y="556" width="12" height="12" fill="#bcffe7"/>
<rect x="689" y="556" width="12" height="12" fill="#c8ffeb"/>
<rect x="701" y="556" width="12" height="12" fill="#ffffff"/>
<rect x="219" y="568" width="12" height="12" fill="#000100"/>
<rect x="231" y="568" width="12" height="12" fill="#000201"/>
<rect x="243" y="568" width="12" height="12" fill="#000303"/>
<rect x="255" y="568" width="12" height="12" fill="#000404"/>
<rect x="267" y="568" width="12" height="12" fill="#000606"/>
<rect x="279" y="568" width="12" height="12" fill="#000908"/>
<rect x="291" y="568" width="12" height="12" fill="#000c0b"/>
<rect x="303" y="568" width="12" height="12" fill="#00100f"/>
<rect x="315" y="568" width="12" height="12" fill="#001412"/>
<rect x="327" y="568" width="12" height="12" fill="#001917"/>
<rect x="339" y="568" width="12" height="12" fill="#00201d"/>
<rect x="351" y="568" width="12" height="12" fill="#002a26"/>
<rect x="363" y="568" width="12" height="12" fill="#003630"/>
<rect x="375" y="568" width="12" height="12" fill="#00463f"/>
<rect x="387" y="568" width="12" height="12" fill="#00584f"/>
<rect x="399" y="568" width="13" height="12" fill="#006c62"/>
<rect x="412" y="568" width="12" height="12" fill="#008276"/>
<rect x="424" y="568" width="12" height="12" fill="#169e8f"/>
<rect x="436" y="568" width="12" height="12" fill="#40b2a3"/>
<rect x="448" y="568" width="12" height="12" fill="#51c3b3"/>
<rect x="460" y="568" width="12" height="12" fill="#61d1c1"/>
<rect x="472" y="568" width="12" height="12" fill="#70dbcb"/>
<rect x="484" y="568" width="12" height="12" fill="#7ee4d4"/>
<rect x="496" y="568" width="12" height="12" fill="#8ae9da"/>
<rect x="508" y="568" width="12" height="12" fill="#95eddf"/>
<rect x="520" y="568" width="12" height="12" fill="#9cf0e2"/>
<rect x="532" y="568" width="12" height="12" fill="#a2f4e6"/>
<rect x="544" y="568" width="12" height="12" fill="#a6f6e9"/>
<rect x="556" y="568" width="12" height="12" fill="#aaf9eb"/>
<rect x="568" y="568" width="12" height="12" fill="#aefbee"/>
<rect x="580" y="568" width="12" height="12" fill="#b1fdf0"/>
<rect x="592" y="568" width="12" height="12" fill="#b3fff2"/>
<rect x="604" y="568" width="25" height="12" fill="#b4fff2"/>
<rect x="629" y="568" width="12" height="12" fill="#b5fff2"/>
<rect x="641" y="568" width="12" height="12" fill="#b6fff3"/>
<rect x="653" y="568" width="12" height="12" fill="#b7fff3"/>
<rect x="665" y="568" width="12" height="12" fill="#bafff3"/>
<rect x="677" y="568" width="12" height="12" fill="#bcfff3"/>
<rect x="689" y="568" width="12" height="12" fill="#c8fff5"/>
<rect x="701" y="568" width="12" height="12" fill="#ffffff"/>
<rect x="219" y="580" width="12" height="13" fill="#000101"/>
<rect x="231" y="580" width="12" height="13" fill="#000202"/>
<rect x="243" y="580" width="12" height="13" fill="#000303"/>
<rect x="255" y="580" width="12" height="13" fill="#000404"/>
<rect x="267" y="580" width="12" height="13" fill="#000606"/>
<rect x="279" y="580" width="12" height="13" fill="#000909"/>
<rect x="291" y="580" width="12" height="13" fill="#000c0c"/>
<rect x="303" y="580" width="12" height="13" fill="#001010"/>
<rect x="315" y="580" width="12" height="13" fill="#001414"/>
<rect x="327" y="580" width="12" height="13" fill="#001919"/>
<rect x="339" y="580" width="12" height="13" fill="#002020"/>
<rect x="351" y="580" width="12" height="13" fill="#002a2a"/>
<rect x="363" y="580" width="12" height="13" fill="#003636"/>
<rect x="375" y="580" width="12" height="13" fill="#004646"/>
<rect x="387" y="580" width="12" height="13" fill="#005858"/>
<rect x="399" y="580" width="13" height="13" fill="#006c6c"/>
<rect x="412" y="580" width="12" height="13" fill="#008282"/>
<rect x="424" y="580" width="12" height="13" fill="#179e9e"/>
<rect x="436" y="580" width="12" height="13" fill="#41b2b2"/>
<rect x="448" y="580" width="12" height="13" fill="#52c3c3"/>
<rect x="460" y="580" width="12" height="13" fill="#62d1d1"/>
<rect x="472" y="580" width="12" height="13" fill="#71dbdb"/>
<rect x="484" y="580" width="12" height="13" fill="#7fe4e4"/>
<rect x="496" y="580" width="12" height="13" fill="#8be9e9"/>
<rect x="508" y="580" width="12" height="13" fill="#95eded"/>
<rect x="520" y="580" width="12" height="13" fill="#9df0f0"/>
<rect x="532" y="580" width="12" height="13" fill="#a2f4f4"/>
<rect x="544" y="580" width="12" height="13" fill="#a7f6f6"/>
<rect x="556" y="580" width="12" height="13" fill="#aaf9f9"/>
<rect x="568" y="580" width="12" height="13" fill="#aefbfb"/>
<rect x="580" y="580" width="12" height="13" fill="#b1fdfd"/>
<rect x="592" y="580" width="12" height="13" fill="#b3ffff"/>
<rect x="604" y="580" width="25" height="13" fill="#b4ffff"/>
<rect x="629" y="580" width="24" height="13" fill="#b5ffff"/>
<rect x="653" y="580" width="12" height="13" fill="#b4ffff"/>
<rect x="665" y="580" width="12" height="13" fill="#b5ffff"/>
<rect x="677" y="580" width="12" height="13" fill="#b6ffff"/>
<rect x="689" y="580" width="12" height="13" fill="#bfffff"/>
<rect x="701" y="580" width="12" height="13" fill="#ffffff"/>
<rect x="219" y="593" width="12" height="12" fill="#000001"/>
<rect x="231" y="593" width="12" height="12" fill="#000102"/>
<rect x="243" y="593" width="12" height="12" fill="#000303"/>
<rect x="255" y="593" width="12" height="12" fill="#000404"/>
<rect x="267" y="593" width="12" height="12" fill="#000606"/>
<rect x="279" y="593" width="12" height="12" fill="#000809"/>
<rect x="291" y="593" width="12" height="12" fill="#000b0c"/>
<rect x="303" y="593" width="12" height="12" fill="#000f10"/>
<rect x="315" y="593" width="12" height="12" fill="#001214"/>
<rect x="327" y="593" width="12" height="12" fill="#001719"/>
<rect x="339" y="593" width="12" height="12" fill="#001d20"/>
<rect x="351" y="593" width="12" height="12" fill="#00262a"/>
<rect x="363" y="593" width="12" height="12" fill="#003036"/>
<rect x="375" y="593" width="12" height="12" fill="#003f46"/>
<rect x="387" y="593" width="12" height="12" fill="#004f58"/>
<rect x="399" y="593" width="13" height="12" fill="#00626c"/>
<rect x="412" y="593" width="12" height="12" fill="#007682"/>
<rect x="424" y="593" width="12" height="12" fill="#138f9e"/>
<rect x="436" y="593" width="12" height="12" fill="#3aa3b2"/>
<rect x="448" y="593" width="12" height="12" fill="#4cb3c3"/>
<rect x="460" y="593" width="12" height="12" fill="#5cc0d1"/>
<rect x="472" y="593" width="12" height="12" fill="#6bcbdb"/>
<rect x="484" y="593" width="12" height="12" fill="#79d4e4"/>
<rect x="496" y="593" width="12" height="12" fill="#85dae9"/>
<rect x="508" y="593" width="12" height="12" fill="#91deed"/>
<rect x="520" y="593" width="12" height="12" fill="#99e2f0"/>
<rect x="532" y="593" width="12" height="12" fill="#a0e6f4"/>
<rect x="544" y="593" width="12" height="12" fill="#a5e9f6"/>
<rect x="556" y="593" width="12" height="12" fill="#a9ebf9"/>
<rect x="568" y="593" width="12" height="12" fill="#adeefb"/>
<rect x="580" y="593" width="12" height="12" fill="#b0f0fd"/>
<rect x="592" y="593" width="12" height="12" fill="#b3f2ff"/>
<rect x="604" y="593" width="25" height="12" fill="#b4f2ff"/>
<rect x="629" y="593" width="24" height="12" fill="#b5f2ff"/>
<rect x="653" y="593" width="12" height="12" fill="#b4f2ff"/>
<rect x="665" y="593" width="12" height="12" fill="#b5f2ff"/>
<rect x="677" y="593" width="12" height="12" fill="#b6f2ff"/>
<rect x="689" y="593" width="12" height="12" fill="#bff4ff"/>
<rect x="701" y="593" width="12" height="12" fill="#fafeff"/>
<rect x="219" y="605" width="12" height="12" fill="#000001"/>
<rect x="231" y="605" width="12" height="12" fill="#000102"/>
<rect x="243" y="605" width="12" height="12" fill="#000203"/>
<rect x="255" y="605" width="12" height="12" fill="#000304"/>
<rect x="267" y="605" width="12" height="12" fill="#000506"/>
<rect x="279" y="605" width="12" height="12" fill="#000709"/>
<rect x="291" y="605" width="12" height="12" fill="#00090c"/>
<rect x="303" y="605" width="12" height="12" fill="#000d10"/>
<rect x="315" y="605" width="12" height="12" fill="#001014"/>
<rect x="327" y="605" width="12" height="12" fill="#001419"/>
<rect x="339" y="605" width="12" height="12" fill="#001920"/>
<rect x="351" y="605" width="12" height="12" fill="#00212a"/>
<rect x="363" y="605" width="12" height="12" fill="#002a36"/>
<rect x="375" y="605" width="12" height="12" fill="#003846"/>
<rect x="387" y="605" width="12" height="12" fill="#004658"/>
<rect x="399" y="605" width="13" height="12" fill="#00566c"/>
<rect x="412" y="605" width="12" height="12" fill="#006782"/>
<rect x="424" y="605" width="12" height="12" fill="#0f7e9e"/>
<rect x="436" y="605" width="12" height="12" fill="#3390b2"/>
<rect x="448" y="605" width="12" height="12" fill="#469fc3"/>
<rect x="460" y="605" width="12" height="12" fill="#57add1"/>
<rect x="472" y="605" width="12" height="12" fill="#66b7db"/>
<rect x="484" y="605" width="12" height="12" fill="#74c1e4"/>
<rect x="496" y="605" width="12" height="12" fill="#81c7e9"/>
<rect x="508" y="605" width="12" height="12" fill="#8ccded"/>
<rect x="520" y="605" width="12" height="12" fill="#96d1f0"/>
<rect x="532" y="605" width="12" height="12" fill="#9ed6f4"/>
<rect x="544" y="605" width="12" height="12" fill="#a4daf6"/>
<rect x="556" y="605" width="12" height="12" fill="#a8ddf9"/>
<rect x="568" y="605" width="12" height="12" fill="#ace0fb"/>
<rect x="580" y="605" width="12" height="12" fill="#b0e2fd"/>
<rect x="592" y="605" width="25" height="12" fill="#b3e4ff"/>
<rect x="617" y="605" width="12" height="12" fill="#b4e5ff"/>
<rect x="629" y="605" width="24" height="12" fill="#b5e5ff"/>
<rect x="653" y="605" width="12" height="12" fill="#b4e5ff"/>
<rect x="665" y="605" width="12" height="12" fill="#b5e5ff"/>
<rect x="677" y="605" width="12" height="12" fill="#b6e5ff"/>
<rect x="689" y="605" width="12" height="12" fill="#bfe8ff"/>
<rect x="701" y="605" width="12" height="12" fill="#e0f3ff"/>
<rect x="219" y="617" width="12" height="12" fill="#000001"/>
<rect x="231" y="617" width="12" height="12" fill="#000102"/>
<rect x="243" y="617" width="12" height="12" fill="#000203"/>
<rect x="255" y="617" width="12" height="12" fill="#000304"/>
<rect x="267" y="617" width="12" height="12" fill="#000406"/>
<rect x="279" y="617" width="12" height="12" fill="#000609"/>
<rect x="291" y="617" width="12" height="12" fill="#00080c"/>
<rect x="303" y="617" width="12" height="12" fill="#000b10"/>
<rect x="315" y="617" width="12" height="12" fill="#000d14"/>
<rect x="327" y="617" width="12" height="12" fill="#001119"/>
<rect x="339" y="617" width="12" height="12" fill="#001520"/>
<rect x="351" y="617" width="12" height="12" fill="#001c2a"/>
<rect x="363" y="617" width="12" height="12" fill="#002336"/>
<rect x="375" y="617" width="12" height="12" fill="#002e46"/>
<rect x="387" y="617" width="12" height="12" fill="#003a58"/>
<rect x="399" y="617" width="13" height="12" fill="#00476c"/>
<rect x="412" y="617" width="12" height="12" fill="#005682"/>
<rect x="424" y="617" width="12" height="12" fill="#0d699e"/>
<rect x="436" y="617" width="12" height="12" fill="#2e7ab2"/>
<rect x="448" y="617" width="12" height="12" fill="#4289c3"/>
<rect x="460" y="617" width="12" height="12" fill="#5496d1"/>
<rect x="472" y="617" width="12" height="12" fill="#63a1db"/>
<rect x="484" y="617" width="12" height="12" fill="#71abe4"/>
<rect x="496" y="617" width="12" height="12" fill="#7eb2e9"/>
<rect x="508" y="617" width="12" height="12" fill="#8ab9ed"/>
<rect x="520" y="617" width="12" height="12" fill="#95bff0"/>
<rect x="532" y="617" width="12" height="12" fill="#9cc5f4"/>
<rect x="544" y="617" width="12" height="12" fill="#a2c9f6"/>
<rect x="556" y="617" width="12" height="12" fill="#a8cdf9"/>
<rect x="568" y="617" width="12" height="12" fill="#acd0fb"/>
<rect x="580" y="617" width="12" height="12" fill="#b0d3fd"/>
<rect x="592" y="617" width="12" height="12" fill="#b3d5ff"/>
<rect x="604" y="617" width="13" height="12" fill="#b3d6ff"/>
<rect x="617" y="617" width="12" height="12" fill="#b4d6ff"/>
<rect x="629" y="617" width="24" height="12" fill="#b5d6ff"/>
<rect x="653" y="617" width="12" height="12" fill="#b4d6ff"/>
<rect x="665" y="617" width="12" height="12" fill="#b5d6ff"/>
<rect x="677" y="617" width="12" height="12" fill="#b6d7ff"/>
<rect x="689" y="617" width="12" height="12" fill="#bfdbff"/>
<rect x="701" y="617" width="12" height="12" fill="#d4e6ff"/>
<rect x="219" y="629" width="12" height="12" fill="#000001"/>
<rect x="231" y="629" width="12" height="12" fill="#000102"/>
<rect x="243" y="629" width="12" height="12" fill="#000103"/>
<rect x="255" y="629" width="12" height="12" fill="#000204"/>
<rect x="267" y="629" width="12" height="12" fill="#000306"/>
<rect x="279" y="629" width="12" height="12" fill="#000409"/>
<rect x="291" y="629" width="12" height="12" fill="#00060c"/>
<rect x="303" y="629" width="12" height="12" fill="#000810"/>
<rect x="315" y="629" width="12" height="12" fill="#000a14"/>
<rect x="327" y="629" width="12" height="12" fill="#000c19"/>
<rect x="339" y="629" width="12" height="12" fill="#000f20"/>
<rect x="351" y="629" width="12" height="12" fill="#00142a"/>
<rect x="363" y="629" width="12" height="12" fill="#001a36"/>
<rect x="375" y="629" width="12" height="12" fill="#002246"/>
<rect x="387" y="629" width="12" height="12" fill="#002a58"/>
<rect x="399" y="629" width="13" height="12" fill="#00346c"/>
<rect x="412" y="629" width="12" height="12" fill="#003f82"/>
<rect x="424" y="629" width="12" height="12" fill="#074c9e"/>
<rect x="436" y="629" width="12" height="12" fill="#245ab2"/>
<rect x="448" y="629" width="12" height="12" fill="#3969c3"/>
<rect x="460" y="629" width="12" height="12" fill="#4c76d1"/>
<rect x="472" y="629" width="12" height="12" fill="#5c82db"/>
<rect x="484" y="629" width="12" height="12" fill="#6b8ee4"/>
<rect x="496" y="629" width="12" height="12" fill="#7897e9"/>
<rect x="508" y="629" width="12" height="12" fill="#84a0ed"/>
<rect x="520" y="629" width="12" height="12" fill="#8fa8f0"/>
<rect x="532" y="629" width="12" height="12" fill="#99b0f4"/>
<rect x="544" y="629" width="12" height="12" fill="#a0b5f6"/>
<rect x="556" y="629" width="12" height="12" fill="#a6baf9"/>
<rect x="568" y="629" width="12" height="12" fill="#abbffb"/>
<rect x="580" y="629" width="12" height="12" fill="#afc2fd"/>
<rect x="592" y="629" width="25" height="12" fill="#b3c5ff"/>
<rect x="617" y="629" width="12" height="12" fill="#b4c6ff"/>
<rect x="629" y="629" width="12" height="12" fill="#b5c7ff"/>
<rect x="641" y="629" width="12" height="12" fill="#b4c6ff"/>
<rect x="653" y="629" width="36" height="12" fill="#b3c5ff"/>
<rect x="689" y="629" width="12" height="12" fill="#bcccff"/>
<rect x="701" y="629" width="12" height="12" fill="#c8d4ff"/>
<rect x="219" y="641" width="12" height="12" fill="#000001"/>
<rect x="231" y="641" width="12" height="12" fill="#000002"/>
<rect x="243" y="641" width="12" height="12" fill="#000003"/>
<rect x="255" y="641" width="12" height="12" fill="#000004"/>
<rect x="267" y="641" width="12" height="12" fill="#000006"/>
<rect x="279" y="641" width="12" height="12" fill="#000009"/>
<rect x="291" y="641" width="12" height="12" fill="#00000c"/>
<rect x="303" y="641" width="12" height="12" fill="#000010"/>
<rect x="315" y="641" width="12" height="12" fill="#000014"/>
<rect x="327" y="641" width="12" height="12" fill="#000019"/>
<rect x="339" y="641" width="12" height="12" fill="#000020"/>
<rect x="351" y="641" width="12" height="12" fill="#00002a"/>
<rect x="363" y="641" width="12" height="12" fill="#000036"/>
<rect x="375" y="641" width="12" height="12" fill="#000046"/>
<rect x="387" y="641" width="12" height="12" fill="#000058"/>
<rect x="399" y="641" width="13" height="12" fill="#00006c"/>
<rect x="412" y="641" width="12" height="12" fill="#000082"/>
<rect x="424" y="641" width="12" height="12" fill="#00009e"/>
<rect x="436" y="641" width="12" height="12" fill="#0000b2"/>
<rect x="448" y="641" width="12" height="12" fill="#0000c6"/>
<rect x="460" y="641" width="12" height="12" fill="#0909d6"/>
<rect x="472" y="641" width="12" height="12" fill="#1010e3"/>
<rect x="484" y="641" width="12" height="12" fill="#1919ee"/>
<rect x="496" y="641" width="12" height="12" fill="#2c2cf4"/>
<rect x="508" y="641" width="12" height="12" fill="#4040f7"/>
<rect x="520" y="641" width="12" height="12" fill="#5050fa"/>
<rect x="532" y="641" width="12" height="12" fill="#5f5ffe"/>
<rect x="544" y="641" width="12" height="12" fill="#7070ff"/>
<rect x="556" y="641" width="12" height="12" fill="#8080ff"/>
<rect x="568" y="641" width="12" height="12" fill="#8a8aff"/>
<rect x="580" y="641" width="12" height="12" fill="#9090ff"/>
<rect x="592" y="641" width="12" height="12" fill="#9999ff"/>
<rect x="604" y="641" width="13" height="12" fill="#9d9dff"/>
<rect x="617" y="641" width="12" height="12" fill="#a1a1ff"/>
<rect x="629" y="641" width="12" height="12" fill="#a3a3ff"/>
<rect x="641" y="641" width="12" height="12" fill="#a6a6ff"/>
<rect x="653" y="641" width="12" height="12" fill="#a8a8ff"/>
<rect x="665" y="641" width="12" height="12" fill="#ababff"/>
<rect x="677" y="641" width="12" height="12" fill="#adadff"/>
<rect x="689" y="641" width="12" height="12" fill="#b0b0ff"/>
<rect x="701" y="641" width="12" height="12" fill="#b8b8ff"/>
<rect x="219" y="653" width="12" height="12" fill="#000001"/>
<rect x="231" y="653" width="12" height="12" fill="#010002"/>
<rect x="243" y="653" width="12" height="12" fill="#010003"/>
<rect x="255" y="653" width="12" height="12" fill="#020004"/>
<rect x="267" y="653" width="12" height="12" fill="#030006"/>
<rect x="279" y="653" width="12" height="12" fill="#040009"/>
<rect x="291" y="653" width="12" height="12" fill="#06000c"/>
<rect x="303" y="653" width="12" height="12" fill="#080010"/>
<rect x="315" y="653" width="12" height="12" fill="#0a0014"/>
<rect x="327" y="653" width="12" height="12" fill="#0c0019"/>
<rect x="339" y="653" width="12" height="12" fill="#0f0020"/>
<rect x="351" y="653" width="12" height="12" fill="#14002a"/>
<rect x="363" y="653" width="12" height="12" fill="#1a0036"/>
<rect x="375" y="653" width="12" height="12" fill="#220046"/>
<rect x="387" y="653" width="12" height="12" fill="#2a0058"/>
<rect x="399" y="653" width="13" height="12" fill="#34006c"/>
<rect x="412" y="653" width="12" height="12" fill="#3f0082"/>
<rect x="424" y="653" width="12" height="12" fill="#4c009e"/>
<rect x="436" y="653" width="12" height="12" fill="#5600b2"/>
<rect x="448" y="653" width="12" height="12" fill="#600ec6"/>
<rect x="460" y="653" width="12" height="12" fill="#691ad6"/>
<rect x="472" y="653" width="12" height="12" fill="#7127e3"/>
<rect x="484" y="653" width="12" height="12" fill="#7a34ee"/>
<rect x="496" y="653" width="12" height="12" fill="#8042f4"/>
<rect x="508" y="653" width="12" height="12" fill="#8954f7"/>
<rect x="520" y="653" width="12" height="12" fill="#9366fa"/>
<rect x="532" y="653" width="12" height="12" fill="#9e77fe"/>
<rect x="544" y="653" width="12" height="12" fill="#a685ff"/>
<rect x="556" y="653" width="12" height="12" fill="#ad90ff"/>
<rect x="568" y="653" width="12" height="12" fill="#b399ff"/>
<rect x="580" y="653" width="12" height="12" fill="#b69dff"/>
<rect x="592" y="653" width="12" height="12" fill="#b9a2ff"/>
<rect x="604" y="653" width="13" height="12" fill="#bba5ff"/>
<rect x="617" y="653" width="12" height="12" fill="#bea8ff"/>
<rect x="629" y="653" width="12" height="12" fill="#bfabff"/>
<rect x="641" y="653" width="12" height="12" fill="#c1adff"/>
<rect x="653" y="653" width="12" height="12" fill="#c3b0ff"/>
<rect x="665" y="653" width="12" height="12" fill="#c5b2ff"/>
<rect x="677" y="653" width="12" height="12" fill="#c7b5ff"/>
<rect x="689" y="653" width="12" height="12" fill="#c8b8ff"/>
<rect x="701" y="653" width="12" height="12" fill="#cec0ff"/>
<rect x="219" y="665" width="12" height="12" fill="#000001"/>
<rect x="231" y="665" width="12" height="12" fill="#010002"/>
<rect x="243" y="665" width="12" height="12" fill="#020003"/>
<rect x="255" y="665" width="12" height="12" fill="#030004"/>
<rect x="267" y="665" width="12" height="12" fill="#040006"/>
<rect x="279" y="665" width="12" height="12" fill="#060009"/>
<rect x="291" y="665" width="12" height="12" fill="#08000c"/>
<rect x="303" y="665" width="12" height="12" fill="#0b0010"/>
<rect x="315" y="665" width="12" height="12" fill="#0d0014"/>
<rect x="327" y="665" width="12" height="12" fill="#110019"/>
<rect x="339" y="665" width="12" height="12" fill="#150020"/>
<rect x="351" y="665" width="12" height="12" fill="#1c002a"/>
<rect x="363" y="665" width="12" height="12" fill="#230036"/>
<rect x="375" y="665" width="12" height="12" fill="#2e0046"/>
<rect x="387" y="665" width="12" height="12" fill="#3a0058"/>
<rect x="399" y="665" width="13" height="12" fill="#47006c"/>
<rect x="412" y="665" width="12" height="12" fill="#560082"/>
<rect x="424" y="665" width="12" height="12" fill="#68009e"/>
<rect x="436" y="665" width="12" height="12" fill="#7602b2"/>
<rect x="448" y="665" width="12" height="12" fill="#8210c4"/>
<rect x="460" y="665" width="12" height="12" fill="#8d1cd4"/>
<rect x="472" y="665" width="12" height="12" fill="#9629df"/>
<rect x="484" y="665" width="12" height="12" fill="#9f39e9"/>
<rect x="496" y="665" width="12" height="12" fill="#a54aee"/>
<rect x="508" y="665" width="12" height="12" fill="#ac5cf2"/>
<rect x="520" y="665" width="12" height="12" fill="#b36df5"/>
<rect x="532" y="665" width="12" height="12" fill="#ba7cf9"/>
<rect x="544" y="665" width="12" height="12" fill="#c189fb"/>
<rect x="556" y="665" width="12" height="12" fill="#c795fe"/>
<rect x="568" y="665" width="12" height="12" fill="#cc9eff"/>
<rect x="580" y="665" width="12" height="12" fill="#cea3ff"/>
<rect x="592" y="665" width="12" height="12" fill="#d0a7ff"/>
<rect x="604" y="665" width="13" height="12" fill="#d1aaff"/>
<rect x="617" y="665" width="12" height="12" fill="#d2adff"/>
<rect x="629" y="665" width="12" height="12" fill="#d4afff"/>
<rect x="641" y="665" width="12" height="12" fill="#d4b1ff"/>
<rect x="653" y="665" width="12" height="12" fill="#d5b3ff"/>
<rect x="665" y="665" width="12" height="12" fill="#d6b4ff"/>
<rect x="677" y="665" width="12" height="12" fill="#d7b6ff"/>
<rect x="689" y="665" width="12" height="12" fill="#d8b8ff"/>
<rect x="701" y="665" width="12" height="12" fill="#dec4ff"/>
<rect x="219" y="677" width="12" height="12" fill="#000001"/>
<rect x="231" y="677" width="12" height="12" fill="#010002"/>
<rect x="243" y="677" width="12" height="12" fill="#020003"/>
<rect x="255" y="677" width="12" height="12" fill="#030004"/>
<rect x="267" y="677" width="12" height="12" fill="#050006"/>
<rect x="279" y="677" width="12" height="12" fill="#070009"/>
<rect x="291" y="677" width="12" height="12" fill="#09000c"/>
<rect x="303" y="677" width="12" height="12" fill="#0d0010"/>
<rect x="315" y="677" width="12" height="12" fill="#100014"/>
<rect x="327" y="677" width="12" height="12" fill="#140019"/>
<rect x="339" y="677" width="12" height="12" fill="#190020"/>
<rect x="351" y="677" width="12" height="12" fill="#21002a"/>
<rect x="363" y="677" width="12" height="12" fill="#2a0036"/>
<rect x="375" y="677" width="12" height="12" fill="#380046"/>
<rect x="387" y="677" width="12" height="12" fill="#460058"/>
<rect x="399" y="677" width="13" height="12" fill="#56006c"/>
<rect x="412" y="677" width="12" height="12" fill="#670082"/>
<rect x="424" y="677" width="12" height="12" fill="#7d009e"/>
<rect x="436" y="677" width="12" height="12" fill="#8e04b2"/>
<rect x="448" y="677" width="12" height="12" fill="#9b12c3"/>
<rect x="460" y="677" width="12" height="12" fill="#a61ed1"/>
<rect x="472" y="677" width="12" height="12" fill="#af2cdb"/>
<rect x="484" y="677" width="12" height="12" fill="#b83ee4"/>
<rect x="496" y="677" width="12" height="12" fill="#be51e9"/>
<rect x="508" y="677" width="12" height="12" fill="#c464ed"/>
<rect x="520" y="677" width="12" height="12" fill="#c973f0"/>
<rect x="532" y="677" width="12" height="12" fill="#cf80f4"/>
<rect x="544" y="677" width="12" height="12" fill="#d38cf6"/>
<rect x="556" y="677" width="12" height="12" fill="#d897f9"/>
<rect x="568" y="677" width="12" height="12" fill="#dca0fb"/>
<rect x="580" y="677" width="12" height="12" fill="#dfa6fd"/>
<rect x="592" y="677" width="12" height="12" fill="#e2acff"/>
<rect x="604" y="677" width="13" height="12" fill="#e3afff"/>
<rect x="617" y="677" width="12" height="12" fill="#e4b2ff"/>
<rect x="629" y="677" width="12" height="12" fill="#e5b4ff"/>
<rect x="641" y="677" width="12" height="12" fill="#e5b5ff"/>
<rect x="653" y="677" width="24" height="12" fill="#e5b6ff"/>
<rect x="677" y="677" width="12" height="12" fill="#e6b7ff"/>
<rect x="689" y="677" width="12" height="12" fill="#e6b8ff"/>
<rect x="701" y="677" width="12" height="12" fill="#ebc8ff"/>
<rect x="219" y="689" width="12" height="12" fill="#000001"/>
<rect x="231" y="689" width="12" height="12" fill="#010002"/>
<rect x="243" y="689" width="12" height="12" fill="#030003"/>
<rect x="255" y="689" width="12" height="12" fill="#040004"/>
<rect x="267" y="689" width="12" height="12" fill="#060006"/>
<rect x="279" y="689" width="12" height="12" fill="#080009"/>
<rect x="291" y="689" width="12" height="12" fill="#0b000c"/>
<rect x="303" y="689" width="12" height="12" fill="#0f0010"/>
<rect x="315" y="689" width="12" height="12" fill="#120014"/>
<rect x="327" y="689" width="12" height="12" fill="#170019"/>
<rect x="339" y="689" width="12" height="12" fill="#1d0020"/>
<rect x="351" y="689" width="12" height="12" fill="#26002a"/>
<rect x="363" y="689" width="12" height="12" fill="#300036"/>
<rect x="375" y="689" width="12" height="12" fill="#3f0046"/>
<rect x="387" y="689" width="12" height="12" fill="#4f0058"/>
<rect x="399" y="689" width="13" height="12" fill="#62006c"/>
<rect x="412" y="689" width="12" height="12" fill="#760082"/>
<rect x="424" y="689" width="12" height="12" fill="#8f009e"/>
<rect x="436" y="689" width="12" height="12" fill="#a105b2"/>
<rect x="448" y="689" width="12" height="12" fill="#b014c3"/>
<rect x="460" y="689" width="12" height="12" fill="#bd21d1"/>
<rect x="472" y="689" width="12" height="12" fill="#c72fdb"/>
<rect x="484" y="689" width="12" height="12" fill="#d043e4"/>
<rect x="496" y="689" width="12" height="12" fill="#d65ae9"/>
<rect x="508" y="689" width="12" height="12" fill="#db6ded"/>
<rect x="520" y="689" width="12" height="12" fill="#de7bf0"/>
<rect x="532" y="689" width="12" height="12" fill="#e387f4"/>
<rect x="544" y="689" width="12" height="12" fill="#e692f6"/>
<rect x="556" y="689" width="12" height="12" fill="#ea9cf9"/>
<rect x="568" y="689" width="12" height="12" fill="#eda5fb"/>
<rect x="580" y="689" width="12" height="12" fill="#efabfd"/>
<rect x="592" y="689" width="12" height="12" fill="#f2b1ff"/>
<rect x="604" y="689" width="13" height="12" fill="#f2b4ff"/>
<rect x="617" y="689" width="12" height="12" fill="#f3b6ff"/>
<rect x="629" y="689" width="24" height="12" fill="#f3b9ff"/>
<rect x="653" y="689" width="12" height="12" fill="#f3baff"/>
<rect x="665" y="689" width="12" height="12" fill="#f3bbff"/>
<rect x="677" y="689" width="24" height="12" fill="#f3bcff"/>
<rect x="701" y="689" width="12" height="12" fill="#f6ccff"/>
<rect x="219" y="701" width="12" height="12" fill="#010001"/>
<rect x="231" y="701" width="12" height="12" fill="#020002"/>
<rect x="243" y="701" width="12" height="12" fill="#030003"/>
<rect x="255" y="701" width="12" height="12" fill="#040004"/>
<rect x="267" y="701" width="12" height="12" fill="#060006"/>
<rect x="279" y="701" width="12" height="12" fill="#090009"/>
<rect x="291" y="701" width="12" height="12" fill="#0c000c"/>
<rect x="303" y="701" width="12" height="12" fill="#100010"/>
<rect x="315" y="701" width="12" height="12" fill="#140014"/>
<rect x="327" y="701" width="12" height="12" fill="#190019"/>
<rect x="339" y="701" width="12" height="12" fill="#200020"/>
<rect x="351" y="701" width="12" height="12" fill="#2a002a"/>
<rect x="363" y="701" width="12" height="12" fill="#360036"/>
<rect x="375" y="701" width="12" height="12" fill="#460046"/>
<rect x="387" y="701" width="12" height="12" fill="#580058"/>
<rect x="399" y="701" width="13" height="12" fill="#6c006c"/>
<rect x="412" y="701" width="12" height="12" fill="#820082"/>
<rect x="424" y="701" width="12" height="12" fill="#9e009e"/>
<rect x="436" y="701" width="12" height="12" fill="#b207b2"/>
<rect x="448" y="701" width="12" height="12" fill="#c315c3"/>
<rect x="460" y="701" width="12" height="12" fill="#d124d1"/>
<rect x="472" y="701" width="12" height="12" fill="#db32db"/>
<rect x="484" y="701" width="12" height="12" fill="#e449e4"/>
<rect x="496" y="701" width="12" height="12" fill="#e963e9"/>
<rect x="508" y="701" width="12" height="12" fill="#ed77ed"/>
<rect x="520" y="701" width="12" height="12" fill="#f084f0"/>
<rect x="532" y="701" width="12" height="12" fill="#f48ef4"/>
<rect x="544" y="701" width="12" height="12" fill="#f698f6"/>
<rect x="556" y="701" width="12" height="12" fill="#f9a2f9"/>
<rect x="568" y="701" width="12" height="12" fill="#fbaafb"/>
<rect x="580" y="701" width="12" height="12" fill="#fdb1fd"/>
<rect x="592" y="701" width="12" height="12" fill="#ffb5ff"/>
<rect x="604" y="701" width="13" height="12" fill="#ffb9ff"/>
<rect x="617" y="701" width="12" height="12" fill="#ffbbff"/>
<rect x="629" y="701" width="60" height="12" fill="#ffbdff"/>
<rect x="689" y="701" width="12" height="12" fill="#ffbcff"/>
<rect x="701" y="701" width="12" height="12" fill="#ffd0ff"/>
<rect x="219" y="713" width="12" height="12" fill="#010000"/>
<rect x="231" y="713" width="12" height="12" fill="#020001"/>
<rect x="243" y="713" width="12" height="12" fill="#030003"/>
<rect x="255" y="713" width="12" height="12" fill="#040004"/>
<rect x="267" y="713" width="12" height="12" fill="#060006"/>
<rect x="279" y="713" width="12" height="12" fill="#090008"/>
<rect x="291" y="713" width="12" height="12" fill="#0c000b"/>
<rect x="303" y="713" width="12" height="12" fill="#10000f"/>
<rect x="315" y="713" width="12" height="12" fill="#140012"/>
<rect x="327" y="713" width="12" height="12" fill="#190017"/>
<rect x="339" y="713" width="12" height="12" fill="#20001d"/>
<rect x="351" y="713" width="12" height="12" fill="#2a0026"/>
<rect x="363" y="713" width="12" height="12" fill="#360030"/>
<rect x="375" y="713" width="12" height="12" fill="#46003f"/>
<rect x="387" y="713" width="12" height="12" fill="#58004f"/>
<rect x="399" y="713" width="13" height="12" fill="#6c0062"/>
<rect x="412" y="713" width="12" height="12" fill="#820076"/>
<rect x="424" y="713" width="12" height="12" fill="#9e008f"/>
<rect x="436" y="713" width="12" height="12" fill="#b206a1"/>
<rect x="448" y="713" width="12" height="12" fill="#c615b3"/>
<rect x="460" y="713" width="12" height="12" fill="#d723c3"/>
<rect x="472" y="713" width="12" height="12" fill="#e533d0"/>
<rect x="484" y="713" width="12" height="12" fill="#f14adc"/>
<rect x="496" y="713" width="12" height="12" fill="#f666e2"/>
<rect x="508" y="713" width="12" height="12" fill="#fa7be7"/>
<rect x="520" y="713" width="12" height="12" fill="#fc8aeb"/>
<rect x="532" y="713" width="12" height="12" fill="#ff94ee"/>
<rect x="544" y="713" width="12" height="12" fill="#ff9def"/>
<rect x="556" y="713" width="12" height="12" fill="#ffa5f0"/>
<rect x="568" y="713" width="12" height="12" fill="#ffacf1"/>
<rect x="580" y="713" width="12" height="12" fill="#ffb1f2"/>
<rect x="592" y="713" width="12" height="12" fill="#ffb5f2"/>
<rect x="604" y="713" width="13" height="12" fill="#ffb8f3"/>
<rect x="617" y="713" width="12" height="12" fill="#ffbbf3"/>
<rect x="629" y="713" width="12" height="12" fill="#ffbdf3"/>
<rect x="641" y="713" width="12" height="12" fill="#ffbff4"/>
<rect x="653" y="713" width="12" height="12" fill="#ffc0f4"/>
<rect x="665" y="713" width="12" height="12" fill="#ffc2f4"/>
<rect x="677" y="713" width="12" height="12" fill="#ffc3f4"/>
<rect x="689" y="713" width="12" height="12" fill="#ffc4f5"/>
<rect x="701" y="713" width="12" height="12" fill="#ffd0f6"/>
<rect x="219" y="725" width="12" height="12" fill="#010000"/>
<rect x="231" y="725" width="12" height="12" fill="#020001"/>
<rect x="243" y="725" width="12" height="12" fill="#030002"/>
<rect x="255" y="725" width="12" height="12" fill="#040003"/>
<rect x="267" y="725" width="12" height="12" fill="#060005"/>
<rect x="279" y="725" width="12" height="12" fill="#090007"/>
<rect x="291" y="725" width="12" height="12" fill="#0c0009"/>
<rect x="303" y="725" width="12" height="12" fill="#10000d"/>
<rect x="315" y="725" width="12" height="12" fill="#140010"/>
<rect x="327" y="725" width="12" height="12" fill="#190014"/>
<rect x="339" y="725" width="12" height="12" fill="#200019"/>
<rect x="351" y="725" width="12" height="12" fill="#2a0021"/>
<rect x="363" y="725" width="12" height="12" fill="#36002a"/>
<rect x="375" y="725" width="12" height="12" fill="#460038"/>
<rect x="387" y="725" width="12" height="12" fill="#580046"/>
<rect x="399" y="725" width="13" height="12" fill="#6c0056"/>
<rect x="412" y="725" width="12" height="12" fill="#820067"/>
<rect x="424" y="725" width="12" height="12" fill="#9e007d"/>
<rect x="436" y="725" width="12" height="12" fill="#b2048e"/>
<rect x="448" y="725" width="12" height="12" fill="#c914a0"/>
<rect x="460" y="725" width="12" height="12" fill="#de23b1"/>
<rect x="472" y="725" width="12" height="12" fill="#ee34bf"/>
<rect x="484" y="725" width="12" height="12" fill="#fe4bcd"/>
<rect x="496" y="725" width="12" height="12" fill="#ff68d2"/>
<rect x="508" y="725" width="12" height="12" fill="#ff7cd6"/>
<rect x="520" y="725" width="12" height="12" fill="#ff8ad9"/>
<rect x="532" y="725" width="12" height="12" fill="#ff94dc"/>
<rect x="544" y="725" width="12" height="12" fill="#ff9cde"/>
<rect x="556" y="725" width="12" height="12" fill="#ffa4e0"/>
<rect x="568" y="725" width="12" height="12" fill="#ffabe2"/>
<rect x="580" y="725" width="12" height="12" fill="#ffb1e4"/>
<rect x="592" y="725" width="12" height="12" fill="#ffb5e5"/>
<rect x="604" y="725" width="13" height="12" fill="#ffb8e6"/>
<rect x="617" y="725" width="12" height="12" fill="#ffbbe7"/>
<rect x="629" y="725" width="12" height="12" fill="#ffbde7"/>
<rect x="641" y="725" width="12" height="12" fill="#ffbfe8"/>
<rect x="653" y="725" width="12" height="12" fill="#ffc1e9"/>
<rect x="665" y="725" width="12" height="12" fill="#ffc4e9"/>
<rect x="677" y="725" width="12" height="12" fill="#ffc6ea"/>
<rect x="689" y="725" width="12" height="12" fill="#ffc8eb"/>
<rect x="701" y="725" width="12" height="12" fill="#ffccec"/>
<rect x="219" y="737" width="12" height="12" fill="#010000"/>
<rect x="231" y="737" width="12" height="12" fill="#020001"/>
<rect x="243" y="737" width="12" height="12" fill="#030002"/>
<rect x="255" y="737" width="12" height="12" fill="#040003"/>
<rect x="267" y="737" width="12" height="12" fill="#060004"/>
<rect x="279" y="737" width="12" height="12" fill="#090006"/>
<rect x="291" y="737" width="12" height="12" fill="#0c0008"/>
<rect x="303" y="737" width="12" height="12" fill="#10000b"/>
<rect x="315" y="737" width="12" height="12" fill="#14000d"/>
<rect x="327" y="737" width="12" height="12" fill="#190011"/>
<rect x="339" y="737" width="12" height="12" fill="#200015"/>
<rect x="351" y="737" width="12" height="12" fill="#2a001c"/>
<rect x="363" y="737" width="12" height="12" fill="#360023"/>
<rect x="375" y="737" width="12" height="12" fill="#46002e"/>
<rect x="387" y="737" width="12" height="12" fill="#58003a"/>
<rect x="399" y="737" width="13" height="12" fill="#6c0047"/>
<rect x="412" y="737" width="12" height="12" fill="#820056"/>
<rect x="424" y="737" width="12" height="12" fill="#9e0068"/>
<rect x="436" y="737" width="12" height="12" fill="#b20376"/>
<rect x="448" y="737" width="12" height="12" fill="#ca1386"/>
<rect x="460" y="737" width="12" height="12" fill="#de2294"/>
<rect x="472" y="737" width="12" height="12" fill="#ef33a1"/>
<rect x="484" y="737" width="12" height="12" fill="#ff48af"/>
<rect x="496" y="737" width="12" height="12" fill="#ff65b6"/>
<rect x="508" y="737" width="12" height="12" fill="#ff7bbe"/>
<rect x="520" y="737" width="12" height="12" fill="#ff89c3"/>
<rect x="532" y="737" width="12" height="12" fill="#ff93c7"/>
<rect x="544" y="737" width="12" height="12" fill="#ff9bca"/>
<rect x="556" y="737" width="12" height="12" fill="#ffa3ce"/>
<rect x="568" y="737" width="12" height="12" fill="#ffabd1"/>
<rect x="580" y="737" width="12" height="12" fill="#ffb1d4"/>
<rect x="592" y="737" width="12" height="12" fill="#ffb4d6"/>
<rect x="604" y="737" width="13" height="12" fill="#ffb8d8"/>
<rect x="617" y="737" width="12" height="12" fill="#ffbbd9"/>
<rect x="629" y="737" width="12" height="12" fill="#ffbcda"/>
<rect x="641" y="737" width="12" height="12" fill="#ffbfdb"/>
<rect x="653" y="737" width="12" height="12" fill="#ffc1dc"/>
<rect x="665" y="737" width="12" height="12" fill="#ffc4de"/>
<rect x="677" y="737" width="12" height="12" fill="#ffc6df"/>
<rect x="689" y="737" width="24" height="12" fill="#ffc8e0"/>
<rect x="219" y="749" width="12" height="12" fill="#010000"/>
<rect x="231" y="749" width="12" height="12" fill="#020001"/>
<rect x="243" y="749" width="12" height="12" fill="#030001"/>
<rect x="255" y="749" width="12" height="12" fill="#040002"/>
<rect x="267" y="749" width="12" height="12" fill="#060003"/>
<rect x="279" y="749" width="12" height="12" fill="#090004"/>
<rect x="291" y="749" width="12" height="12" fill="#0c0006"/>
<rect x="303" y="749" width="12" height="12" fill="#100008"/>
<rect x="315" y="749" width="12" height="12" fill="#14000a"/>
<rect x="327" y="749" width="12" height="12" fill="#19000c"/>
<rect x="339" y="749" width="12" height="12" fill="#20000f"/>
<rect x="351" y="749" width="12" height="12" fill="#2a0014"/>
<rect x="363" y="749" width="12" height="12" fill="#36001a"/>
<rect x="375" y="749" width="12" height="12" fill="#460022"/>
<rect x="387" y="749" width="12" height="12" fill="#58002a"/>
<rect x="399" y="749" width="13" height="12" fill="#6c0034"/>
<rect x="412" y="749" width="12" height="12" fill="#82003f"/>
<rect x="424" y="749" width="12" height="12" fill="#9e004c"/>
<rect x="436" y="749" width="12" height="12" fill="#b20156"/>
<rect x="448" y="749" width="12" height="12" fill="#ca1162"/>
<rect x="460" y="749" width="12" height="12" fill="#de206e"/>
<rect x="472" y="749" width="12" height="12" fill="#ef3179"/>
<rect x="484" y="749" width="12" height="12" fill="#ff4587"/>
<rect x="496" y="749" width="12" height="12" fill="#ff6394"/>
<rect x="508" y="749" width="12" height="12" fill="#ff79a0"/>
<rect x="520" y="749" width="12" height="12" fill="#ff88a8"/>
<rect x="532" y="749" width="12" height="12" fill="#ff92af"/>
<rect x="544" y="749" width="12" height="12" fill="#ff9ab4"/>
<rect x="556" y="749" width="12" height="12" fill="#ffa3ba"/>
<rect x="568" y="749" width="12" height="12" fill="#ffaabf"/>
<rect x="580" y="749" width="12" height="12" fill="#ffb0c3"/>
<rect x="592" y="749" width="12" height="12" fill="#ffb4c6"/>
<rect x="604" y="749" width="13" height="12" fill="#ffb7c8"/>
<rect x="617" y="749" width="12" height="12" fill="#ffbaca"/>
<rect x="629" y="749" width="12" height="12" fill="#ffbccc"/>
<rect x="641" y="749" width="12" height="12" fill="#ffbfcd"/>
<rect x="653" y="749" width="12" height="12" fill="#ffc1cf"/>
<rect x="665" y="749" width="12" height="12" fill="#ffc3d1"/>
<rect x="677" y="749" width="12" height="12" fill="#ffc6d3"/>
<rect x="689" y="749" width="24" height="12" fill="#ffc8d4"/>
<rect x="219" y="761" width="12" height="12" fill="#010101"/>
<rect x="231" y="761" width="12" height="12" fill="#020202"/>
<rect x="243" y="761" width="12" height="12" fill="#030303"/>
<rect x="255" y="761" width="12" height="12" fill="#040404"/>
<rect x="267" y="761" width="12" height="12" fill="#060606"/>
<rect x="279" y="761" width="12" height="12" fill="#090909"/>
<rect x="291" y="761" width="12" height="12" fill="#0c0c0c"/>
<rect x="303" y="761" width="12" height="12" fill="#101010"/>
<rect x="315" y="761" width="12" height="12" fill="#141414"/>
<rect x="327" y="761" width="12" height="12" fill="#1a1a1a"/>
<rect x="339" y="761" width="12" height="12" fill="#202020"/>
<rect x="351" y="761" width="12" height="12" fill="#2a2a2a"/>
<rect x="363" y="761" width="12" height="12" fill="#363636"/>
<rect x="375" y="761" width="12" height="12" fill="#464646"/>
<rect x="387" y="761" width="12" height="12" fill="#585858"/>
<rect x="399" y="761" width="13" height="12" fill="#6c6c6c"/>
<rect x="412" y="761" width="12" height="12" fill="#858585"/>
<rect x="424" y="761" width="12" height="12" fill="#9a9a9a"/>
<rect x="436" y="761" width="12" height="12" fill="#acacac"/>
<rect x="448" y="761" width="12" height="12" fill="#bababa"/>
<rect x="460" y="761" width="12" height="12" fill="#c6c6c6"/>
<rect x="472" y="761" width="12" height="12" fill="#d0d0d0"/>
<rect x="484" y="761" width="12" height="12" fill="#d9d9d9"/>
<rect x="496" y="761" width="12" height="12" fill="#dfdfdf"/>
<rect x="508" y="761" width="12" height="12" fill="#e6e6e6"/>
<rect x="520" y="761" width="12" height="12" fill="#e9e9e9"/>
<rect x="532" y="761" width="12" height="12" fill="#ededed"/>
<rect x="544" y="761" width="12" height="12" fill="#f0f0f0"/>
<rect x="556" y="761" width="12" height="12" fill="#f2f2f2"/>
<rect x="568" y="761" width="12" height="12" fill="#f4f4f4"/>
<rect x="580" y="761" width="12" height="12" fill="#f5f5f5"/>
<rect x="592" y="761" width="12" height="12" fill="#f7f7f7"/>
<rect x="604" y="761" width="13" height="12" fill="#f9f9f9"/>
<rect x="617" y="761" width="12" height="12" fill="#fafafa"/>
<rect x="629" y="761" width="12" height="12" fill="#fbfbfb"/>
<rect x="641" y="761" width="12" height="12" fill="#fcfcfc"/>
<rect x="653" y="761" width="12" height="12" fill="#fefefe"/>
<rect x="665" y="761" width="48" height="12" fill="#ffffff"/>
</g>
<path d="M536 975.8L552.5 992.3L547.8 994.6L548.4 1000Q548 1002.2 545.7 1002Q544 1001.8 543 1000.2L540.6 997.3L536 999.1Z" fill="#000" stroke="#fff" stroke-width="1.7" stroke-linejoin="round"/>
<g style="isolation:isolate">
<rect x="900" y="69.2" width="324.5" height="298" fill="#5f5f5f"/>
<path d="M900.5 367V69.8H1224.5" fill="none" stroke="#535353" stroke-width="1.2"/>
<path d="M900 366.7H1224.5" fill="none" stroke="#565656" stroke-width="1.2"/>
<g stroke="#525252" stroke-width="1.2">
<path d="M901 135.5H1224.5"/>
<path d="M901 168.6H1224.5"/>
<path d="M901 201.7H1224.5"/>
<path d="M901 267.9H1224.5"/>
<path d="M901 301.0H1224.5"/>
<path d="M901 334.1H1224.5"/>
</g>
<path d="M900 102.4H1224.5M900 234.8H1224.5" stroke="#474747" stroke-width="2.1" stroke-dasharray="6 6"/>
<path style="mix-blend-mode:screen" fill="#ff2c2c" opacity=".45" d="M997.9 360h6.51v2h-6.51zM1004.4 359h6.51v2h-6.51zM1010.8 358h6.51v2h-6.51zM1010.8 359h6.51v2h-6.51zM1017.3 356h6.51v2h-6.51zM1017.3 357h6.51v2h-6.51zM1023.7 354h6.51v2h-6.51zM1023.7 356h6.51v2h-6.51zM1023.7 336h6.51v2h-6.51zM1030.2 324h6.51v2h-6.51zM1030.2 352h6.51v2h-6.51zM1030.2 354h6.51v2h-6.51zM1030.2 338h6.51v2h-6.51zM1030.2 326h6.51v2h-6.51zM1036.7 313h6.51v2h-6.51zM1036.7 348h6.51v2h-6.51zM1036.7 351h6.51v2h-6.51zM1036.7 332h6.51v2h-6.51zM1036.7 317h6.51v2h-6.51zM1043.1 298h6.51v2h-6.51zM1043.1 344h6.51v2h-6.51zM1043.1 347h6.51v2h-6.51zM1043.1 322h6.51v2h-6.51zM1043.1 302h6.51v2h-6.51zM1049.6 282h6.51v2h-6.51zM1049.6 288h6.51v2h-6.51zM1049.6 339h6.51v2h-6.51zM1049.6 343h6.51v2h-6.51zM1049.6 287h6.51v2h-6.51zM1056.0 263h6.51v2h-6.51zM1056.0 270h6.51v2h-6.51zM1056.0 301h6.51v2h-6.51zM1056.0 334h6.51v2h-6.51zM1056.0 339h6.51v2h-6.51zM1062.5 243h6.51v2h-6.51zM1062.5 252h6.51v2h-6.51zM1062.5 289h6.51v2h-6.51zM1062.5 328h6.51v2h-6.51zM1062.5 335h6.51v2h-6.51zM1062.5 287h6.51v2h-6.51zM1062.5 251h6.51v2h-6.51zM1062.5 233h6.51v2h-6.51zM1069.0 216h6.51v2h-6.51zM1069.0 272h6.51v2h-6.51zM1069.0 317h6.51v2h-6.51zM1069.0 329h6.51v2h-6.51zM1069.0 269h6.51v2h-6.51zM1069.0 228h6.51v2h-6.51zM1069.0 203h6.51v2h-6.51zM1075.4 197h6.51v2h-6.51zM1075.4 210h6.51v2h-6.51zM1075.4 256h6.51v2h-6.51zM1075.4 322h6.51v2h-6.51zM1075.4 304h6.51v2h-6.51zM1075.4 297h6.51v2h-6.51zM1075.4 296h6.51v2h-6.51zM1075.4 341h6.51v2h-6.51zM1075.4 325h6.51v2h-6.51zM1075.4 257h6.51v2h-6.51zM1075.4 211h6.51v2h-6.51zM1081.9 182h6.51v2h-6.51zM1081.9 196h6.51v2h-6.51zM1081.9 213h6.51v2h-6.51zM1081.9 241h6.51v2h-6.51zM1081.9 282h6.51v2h-6.51zM1081.9 302h6.51v2h-6.51zM1081.9 279h6.51v2h-6.51zM1081.9 289h6.51v2h-6.51zM1081.9 329h6.51v2h-6.51zM1081.9 320h6.51v2h-6.51zM1081.9 246h6.51v2h-6.51zM1081.9 159h6.51v2h-6.51zM1081.9 167h6.51v2h-6.51zM1088.3 170h6.51v2h-6.51zM1088.3 183h6.51v2h-6.51zM1088.3 199h6.51v2h-6.51zM1088.3 227h6.51v2h-6.51zM1088.3 265h6.51v2h-6.51zM1088.3 283h6.51v2h-6.51zM1088.3 266h6.51v2h-6.51zM1088.3 278h6.51v2h-6.51zM1088.3 314h6.51v2h-6.51zM1088.3 312h6.51v2h-6.51zM1088.3 236h6.51v2h-6.51zM1088.3 184h6.51v2h-6.51zM1088.3 150h6.51v2h-6.51zM1094.8 134h6.51v2h-6.51zM1094.8 160h6.51v2h-6.51zM1094.8 173h6.51v2h-6.51zM1094.8 188h6.51v2h-6.51zM1094.8 215h6.51v2h-6.51zM1094.8 251h6.51v2h-6.51zM1094.8 268h6.51v2h-6.51zM1094.8 257h6.51v2h-6.51zM1094.8 302h6.51v2h-6.51zM1094.8 304h6.51v2h-6.51zM1094.8 228h6.51v2h-6.51zM1094.8 174h6.51v2h-6.51zM1094.8 125h6.51v2h-6.51zM1094.8 119h6.51v2h-6.51zM1094.8 136h6.51v2h-6.51zM1101.3 111h6.51v2h-6.51zM1101.3 152h6.51v2h-6.51zM1101.3 165h6.51v2h-6.51zM1101.3 178h6.51v2h-6.51zM1101.3 203h6.51v2h-6.51zM1101.3 253h6.51v2h-6.51zM1101.3 242h6.51v2h-6.51zM1101.3 248h6.51v2h-6.51zM1101.3 290h6.51v2h-6.51zM1101.3 296h6.51v2h-6.51zM1101.3 219h6.51v2h-6.51zM1101.3 133h6.51v2h-6.51zM1107.7 106h6.51v2h-6.51zM1107.7 147h6.51v2h-6.51zM1107.7 159h6.51v2h-6.51zM1107.7 171h6.51v2h-6.51zM1107.7 194h6.51v2h-6.51zM1107.7 234h6.51v2h-6.51zM1107.7 273h6.51v2h-6.51zM1107.7 283h6.51v2h-6.51zM1107.7 213h6.51v2h-6.51zM1107.7 158h6.51v2h-6.51zM1107.7 128h6.51v2h-6.51zM1107.7 108h6.51v2h-6.51zM1107.7 118h6.51v2h-6.51zM1114.2 142h6.51v2h-6.51zM1114.2 154h6.51v2h-6.51zM1114.2 164h6.51v2h-6.51zM1114.2 186h6.51v2h-6.51zM1114.2 210h6.51v2h-6.51zM1114.2 222h6.51v2h-6.51zM1114.2 256h6.51v2h-6.51zM1114.2 268h6.51v2h-6.51zM1114.2 152h6.51v2h-6.51zM1114.2 114h6.51v2h-6.51zM1120.6 138h6.51v2h-6.51zM1120.6 150h6.51v2h-6.51zM1120.6 159h6.51v2h-6.51zM1120.6 179h6.51v2h-6.51zM1120.6 208h6.51v2h-6.51zM1120.6 202h6.51v2h-6.51zM1120.6 242h6.51v2h-6.51zM1120.6 255h6.51v2h-6.51zM1120.6 197h6.51v2h-6.51zM1120.6 148h6.51v2h-6.51zM1120.6 120h6.51v2h-6.51zM1127.1 134h6.51v2h-6.51zM1127.1 145h6.51v2h-6.51zM1127.1 152h6.51v2h-6.51zM1127.1 171h6.51v2h-6.51zM1127.1 198h6.51v2h-6.51zM1127.1 207h6.51v2h-6.51zM1127.1 196h6.51v2h-6.51zM1127.1 200h6.51v2h-6.51zM1127.1 229h6.51v2h-6.51zM1127.1 241h6.51v2h-6.51zM1127.1 188h6.51v2h-6.51zM1127.1 142h6.51v2h-6.51zM1127.1 116h6.51v2h-6.51zM1127.1 105h6.51v2h-6.51zM1127.1 111h6.51v2h-6.51zM1133.6 108h6.51v2h-6.51zM1133.6 130h6.51v2h-6.51zM1133.6 140h6.51v2h-6.51zM1133.6 148h6.51v2h-6.51zM1133.6 166h6.51v2h-6.51zM1133.6 192h6.51v2h-6.51zM1133.6 200h6.51v2h-6.51zM1133.6 194h6.51v2h-6.51zM1133.6 195h6.51v2h-6.51zM1133.6 217h6.51v2h-6.51zM1133.6 227h6.51v2h-6.51zM1133.6 179h6.51v2h-6.51zM1133.6 138h6.51v2h-6.51zM1133.6 113h6.51v2h-6.51zM1133.6 109h6.51v2h-6.51zM1140.0 107h6.51v2h-6.51zM1140.0 128h6.51v2h-6.51zM1140.0 137h6.51v2h-6.51zM1140.0 143h6.51v2h-6.51zM1140.0 160h6.51v2h-6.51zM1140.0 187h6.51v2h-6.51zM1140.0 195h6.51v2h-6.51zM1140.0 189h6.51v2h-6.51zM1140.0 188h6.51v2h-6.51zM1140.0 190h6.51v2h-6.51zM1140.0 215h6.51v2h-6.51zM1140.0 174h6.51v2h-6.51zM1140.0 134h6.51v2h-6.51zM1140.0 108h6.51v2h-6.51zM1146.5 105h6.51v2h-6.51zM1146.5 124h6.51v2h-6.51zM1146.5 134h6.51v2h-6.51zM1146.5 140h6.51v2h-6.51zM1146.5 156h6.51v2h-6.51zM1146.5 182h6.51v2h-6.51zM1146.5 191h6.51v2h-6.51zM1146.5 185h6.51v2h-6.51zM1146.5 186h6.51v2h-6.51zM1146.5 183h6.51v2h-6.51zM1146.5 198h6.51v2h-6.51zM1146.5 207h6.51v2h-6.51zM1146.5 169h6.51v2h-6.51zM1146.5 107h6.51v2h-6.51zM1152.9 122h6.51v2h-6.51zM1152.9 132h6.51v2h-6.51zM1152.9 138h6.51v2h-6.51zM1152.9 154h6.51v2h-6.51zM1152.9 182h6.51v2h-6.51zM1152.9 183h6.51v2h-6.51zM1152.9 181h6.51v2h-6.51zM1152.9 193h6.51v2h-6.51zM1152.9 202h6.51v2h-6.51zM1152.9 167h6.51v2h-6.51zM1152.9 127h6.51v2h-6.51zM1159.4 120h6.51v2h-6.51zM1159.4 130h6.51v2h-6.51zM1159.4 152h6.51v2h-6.51zM1159.4 173h6.51v2h-6.51zM1159.4 178h6.51v2h-6.51zM1159.4 179h6.51v2h-6.51zM1159.4 181h6.51v2h-6.51zM1159.4 195h6.51v2h-6.51zM1159.4 163h6.51v2h-6.51zM1159.4 138h6.51v2h-6.51zM1159.4 122h6.51v2h-6.51zM1159.4 105h6.51v2h-6.51zM1165.9 119h6.51v2h-6.51zM1165.9 129h6.51v2h-6.51zM1165.9 136h6.51v2h-6.51zM1165.9 152h6.51v2h-6.51zM1165.9 174h6.51v2h-6.51zM1165.9 172h6.51v2h-6.51zM1165.9 177h6.51v2h-6.51zM1165.9 179h6.51v2h-6.51zM1165.9 181h6.51v2h-6.51zM1165.9 193h6.51v2h-6.51zM1165.9 162h6.51v2h-6.51zM1165.9 137h6.51v2h-6.51zM1165.9 121h6.51v2h-6.51zM1165.9 105h6.51v2h-6.51zM1172.3 119h6.51v2h-6.51zM1172.3 129h6.51v2h-6.51zM1172.3 135h6.51v2h-6.51zM1172.3 151h6.51v2h-6.51zM1172.3 173h6.51v2h-6.51zM1172.3 177h6.51v2h-6.51zM1172.3 178h6.51v2h-6.51zM1172.3 180h6.51v2h-6.51zM1172.3 175h6.51v2h-6.51zM1172.3 183h6.51v2h-6.51zM1172.3 190h6.51v2h-6.51zM1172.3 160h6.51v2h-6.51zM1172.3 136h6.51v2h-6.51zM1172.3 121h6.51v2h-6.51zM1172.3 105h6.51v2h-6.51zM1178.8 119h6.51v2h-6.51zM1178.8 129h6.51v2h-6.51zM1178.8 135h6.51v2h-6.51zM1178.8 151h6.51v2h-6.51zM1178.8 172h6.51v2h-6.51zM1178.8 176h6.51v2h-6.51zM1178.8 177h6.51v2h-6.51zM1178.8 174h6.51v2h-6.51zM1178.8 159h6.51v2h-6.51zM1178.8 120h6.51v2h-6.51zM1185.2 119h6.51v2h-6.51zM1185.2 129h6.51v2h-6.51zM1185.2 134h6.51v2h-6.51zM1185.2 150h6.51v2h-6.51zM1185.2 171h6.51v2h-6.51zM1185.2 179h6.51v2h-6.51zM1185.2 175h6.51v2h-6.51zM1185.2 180h6.51v2h-6.51zM1185.2 185h6.51v2h-6.51zM1185.2 157h6.51v2h-6.51zM1185.2 120h6.51v2h-6.51zM1191.7 119h6.51v2h-6.51zM1191.7 128h6.51v2h-6.51zM1191.7 133h6.51v2h-6.51zM1191.7 148h6.51v2h-6.51zM1191.7 178h6.51v2h-6.51zM1191.7 168h6.51v2h-6.51zM1191.7 173h6.51v2h-6.51zM1191.7 179h6.51v2h-6.51zM1191.7 156h6.51v2h-6.51zM1191.7 134h6.51v2h-6.51zM1191.7 120h6.51v2h-6.51zM1191.7 105h6.51v2h-6.51zM1198.2 118h6.51v2h-6.51zM1198.2 127h6.51v2h-6.51zM1198.2 132h6.51v2h-6.51zM1198.2 146h6.51v2h-6.51zM1198.2 168h6.51v2h-6.51zM1198.2 176h6.51v2h-6.51zM1198.2 166h6.51v2h-6.51zM1198.2 171h6.51v2h-6.51zM1198.2 175h6.51v2h-6.51zM1198.2 155h6.51v2h-6.51zM1198.2 120h6.51v2h-6.51zM1198.2 105h6.51v2h-6.51zM1204.6 118h6.51v2h-6.51zM1204.6 127h6.51v2h-6.51zM1204.6 145h6.51v2h-6.51zM1204.6 173h6.51v2h-6.51zM1204.6 163h6.51v2h-6.51zM1204.6 168h6.51v2h-6.51zM1204.6 183h6.51v2h-6.51zM1204.6 153h6.51v2h-6.51zM1204.6 119h6.51v2h-6.51zM1204.6 105h6.51v2h-6.51zM1211.1 116h6.51v2h-6.51zM1211.1 125h6.51v2h-6.51zM1211.1 156h6.51v2h-6.51zM1211.1 152h6.51v2h-6.51zM1211.1 162h6.51v2h-6.51zM1211.1 173h6.51v2h-6.51zM1211.1 165h6.51v2h-6.51zM1211.1 171h6.51v2h-6.51zM1211.1 175h6.51v2h-6.51zM1211.1 119h6.51v2h-6.51zM1211.1 105h6.51v2h-6.51zM1217.5 120h6.51v2h-6.51zM1217.5 139h6.51v2h-6.51zM1217.5 152h6.51v2h-6.51zM1217.5 166h6.51v2h-6.51zM1217.5 164h6.51v2h-6.51zM1217.5 142h6.51v2h-6.51zM1217.5 117h6.51v2h-6.51zM1020.2 339h3.6v2h-3.6zM1033.1 334h3.6v2h-3.6zM1033.1 339h3.6v2h-3.6zM1033.1 323h3.6v2h-3.6zM1039.6 321h3.6v2h-3.6zM1039.6 325h3.6v2h-3.6zM1039.6 312h3.6v2h-3.6zM1046.0 316h3.6v2h-3.6zM1046.0 324h3.6v2h-3.6zM1046.0 297h3.6v2h-3.6zM1052.5 304h3.6v2h-3.6zM1052.5 283h3.6v2h-3.6zM1058.9 285h3.6v2h-3.6zM1058.9 293h3.6v2h-3.6zM1058.9 306h3.6v2h-3.6zM1058.9 268h3.6v2h-3.6zM1065.4 231h3.6v2h-3.6zM1065.4 277h3.6v2h-3.6zM1065.4 358h3.6v2h-3.6zM1065.4 347h3.6v2h-3.6zM1065.4 342h3.6v2h-3.6zM1065.4 344h3.6v2h-3.6zM1065.4 337h3.6v2h-3.6zM1065.4 341h3.6v2h-3.6zM1065.4 350h3.6v2h-3.6zM1065.4 351h3.6v2h-3.6zM1065.4 354h3.6v2h-3.6zM1065.4 295h3.6v2h-3.6zM1071.9 214h3.6v2h-3.6zM1071.9 250h3.6v2h-3.6zM1071.9 262h3.6v2h-3.6zM1071.9 336h3.6v2h-3.6zM1071.9 309h3.6v2h-3.6zM1071.9 300h3.6v2h-3.6zM1071.9 305h3.6v2h-3.6zM1071.9 301h3.6v2h-3.6zM1071.9 292h3.6v2h-3.6zM1071.9 299h3.6v2h-3.6zM1071.9 319h3.6v2h-3.6zM1071.9 320h3.6v2h-3.6zM1071.9 287h3.6v2h-3.6zM1078.3 200h3.6v2h-3.6zM1078.3 192h3.6v2h-3.6zM1078.3 235h3.6v2h-3.6zM1078.3 247h3.6v2h-3.6zM1078.3 288h3.6v2h-3.6zM1078.3 281h3.6v2h-3.6zM1078.3 284h3.6v2h-3.6zM1078.3 275h3.6v2h-3.6zM1078.3 295h3.6v2h-3.6zM1078.3 278h3.6v2h-3.6zM1078.3 218h3.6v2h-3.6zM1084.8 188h3.6v2h-3.6zM1084.8 178h3.6v2h-3.6zM1084.8 220h3.6v2h-3.6zM1084.8 270h3.6v2h-3.6zM1084.8 263h3.6v2h-3.6zM1084.8 273h3.6v2h-3.6zM1084.8 268h3.6v2h-3.6zM1084.8 258h3.6v2h-3.6zM1084.8 280h3.6v2h-3.6zM1084.8 354h3.6v2h-3.6zM1084.8 203h3.6v2h-3.6zM1084.8 207h3.6v2h-3.6zM1091.2 142h3.6v2h-3.6zM1091.2 168h3.6v2h-3.6zM1091.2 208h3.6v2h-3.6zM1091.2 281h3.6v2h-3.6zM1091.2 254h3.6v2h-3.6zM1091.2 248h3.6v2h-3.6zM1091.2 253h3.6v2h-3.6zM1091.2 243h3.6v2h-3.6zM1091.2 346h3.6v2h-3.6zM1091.2 262h3.6v2h-3.6zM1091.2 193h3.6v2h-3.6zM1091.2 198h3.6v2h-3.6zM1091.2 133h3.6v2h-3.6zM1097.7 116h3.6v2h-3.6zM1097.7 132h3.6v2h-3.6zM1097.7 170h3.6v2h-3.6zM1097.7 197h3.6v2h-3.6zM1097.7 210h3.6v2h-3.6zM1097.7 239h3.6v2h-3.6zM1097.7 234h3.6v2h-3.6zM1097.7 238h3.6v2h-3.6zM1097.7 229h3.6v2h-3.6zM1097.7 252h3.6v2h-3.6zM1097.7 337h3.6v2h-3.6zM1097.7 183h3.6v2h-3.6zM1097.7 189h3.6v2h-3.6zM1097.7 124h3.6v2h-3.6zM1097.7 121h3.6v2h-3.6zM1097.7 140h3.6v2h-3.6zM1104.2 127h3.6v2h-3.6zM1104.2 129h3.6v2h-3.6zM1104.2 164h3.6v2h-3.6zM1104.2 154h3.6v2h-3.6zM1104.2 201h3.6v2h-3.6zM1104.2 225h3.6v2h-3.6zM1104.2 220h3.6v2h-3.6zM1104.2 231h3.6v2h-3.6zM1104.2 215h3.6v2h-3.6zM1104.2 240h3.6v2h-3.6zM1104.2 318h3.6v2h-3.6zM1104.2 177h3.6v2h-3.6zM1104.2 180h3.6v2h-3.6zM1104.2 136h3.6v2h-3.6zM1104.2 119h3.6v2h-3.6zM1104.2 115h3.6v2h-3.6zM1110.6 107h3.6v2h-3.6zM1110.6 123h3.6v2h-3.6zM1110.6 125h3.6v2h-3.6zM1110.6 149h3.6v2h-3.6zM1110.6 179h3.6v2h-3.6zM1110.6 193h3.6v2h-3.6zM1110.6 242h3.6v2h-3.6zM1110.6 208h3.6v2h-3.6zM1110.6 219h3.6v2h-3.6zM1110.6 214h3.6v2h-3.6zM1110.6 205h3.6v2h-3.6zM1110.6 216h3.6v2h-3.6zM1110.6 296h3.6v2h-3.6zM1110.6 170h3.6v2h-3.6zM1110.6 173h3.6v2h-3.6zM1110.6 131h3.6v2h-3.6zM1110.6 112h3.6v2h-3.6zM1117.1 105h3.6v2h-3.6zM1117.1 121h3.6v2h-3.6zM1117.1 146h3.6v2h-3.6zM1117.1 172h3.6v2h-3.6zM1117.1 231h3.6v2h-3.6zM1117.1 203h3.6v2h-3.6zM1117.1 199h3.6v2h-3.6zM1117.1 211h3.6v2h-3.6zM1117.1 207h3.6v2h-3.6zM1117.1 198h3.6v2h-3.6zM1117.1 200h3.6v2h-3.6zM1117.1 215h3.6v2h-3.6zM1117.1 280h3.6v2h-3.6zM1117.1 230h3.6v2h-3.6zM1117.1 167h3.6v2h-3.6zM1117.1 128h3.6v2h-3.6zM1117.1 113h3.6v2h-3.6zM1117.1 109h3.6v2h-3.6zM1117.1 124h3.6v2h-3.6zM1123.5 117h3.6v2h-3.6zM1123.5 119h3.6v2h-3.6zM1123.5 149h3.6v2h-3.6zM1123.5 140h3.6v2h-3.6zM1123.5 177h3.6v2h-3.6zM1123.5 219h3.6v2h-3.6zM1123.5 195h3.6v2h-3.6zM1123.5 192h3.6v2h-3.6zM1123.5 201h3.6v2h-3.6zM1123.5 193h3.6v2h-3.6zM1123.5 209h3.6v2h-3.6zM1123.5 194h3.6v2h-3.6zM1123.5 264h3.6v2h-3.6zM1123.5 218h3.6v2h-3.6zM1123.5 157h3.6v2h-3.6zM1123.5 161h3.6v2h-3.6zM1130.0 114h3.6v2h-3.6zM1130.0 136h3.6v2h-3.6zM1130.0 159h3.6v2h-3.6zM1130.0 172h3.6v2h-3.6zM1130.0 212h3.6v2h-3.6zM1130.0 189h3.6v2h-3.6zM1130.0 187h3.6v2h-3.6zM1130.0 197h3.6v2h-3.6zM1130.0 202h3.6v2h-3.6zM1130.0 203h3.6v2h-3.6zM1130.0 247h3.6v2h-3.6zM1130.0 155h3.6v2h-3.6zM1130.0 121h3.6v2h-3.6zM1130.0 106h3.6v2h-3.6zM1136.5 112h3.6v2h-3.6zM1136.5 141h3.6v2h-3.6zM1136.5 133h3.6v2h-3.6zM1136.5 154h3.6v2h-3.6zM1136.5 167h3.6v2h-3.6zM1136.5 206h3.6v2h-3.6zM1136.5 183h3.6v2h-3.6zM1136.5 181h3.6v2h-3.6zM1136.5 193h3.6v2h-3.6zM1136.5 198h3.6v2h-3.6zM1136.5 180h3.6v2h-3.6zM1136.5 232h3.6v2h-3.6zM1136.5 199h3.6v2h-3.6zM1136.5 149h3.6v2h-3.6zM1136.5 150h3.6v2h-3.6zM1136.5 118h3.6v2h-3.6zM1136.5 115h3.6v2h-3.6zM1142.9 109h3.6v2h-3.6zM1142.9 130h3.6v2h-3.6zM1142.9 163h3.6v2h-3.6zM1142.9 201h3.6v2h-3.6zM1142.9 177h3.6v2h-3.6zM1142.9 179h3.6v2h-3.6zM1142.9 221h3.6v2h-3.6zM1142.9 146h3.6v2h-3.6zM1142.9 145h3.6v2h-3.6zM1142.9 113h3.6v2h-3.6zM1149.4 135h3.6v2h-3.6zM1149.4 128h3.6v2h-3.6zM1149.4 148h3.6v2h-3.6zM1149.4 160h3.6v2h-3.6zM1149.4 197h3.6v2h-3.6zM1149.4 188h3.6v2h-3.6zM1149.4 176h3.6v2h-3.6zM1149.4 172h3.6v2h-3.6zM1149.4 214h3.6v2h-3.6zM1149.4 143h3.6v2h-3.6zM1155.8 133h3.6v2h-3.6zM1155.8 126h3.6v2h-3.6zM1155.8 146h3.6v2h-3.6zM1155.8 158h3.6v2h-3.6zM1155.8 170h3.6v2h-3.6zM1155.8 186h3.6v2h-3.6zM1155.8 171h3.6v2h-3.6zM1155.8 169h3.6v2h-3.6zM1155.8 205h3.6v2h-3.6zM1155.8 110h3.6v2h-3.6zM1162.3 132h3.6v2h-3.6zM1162.3 175h3.6v2h-3.6zM1162.3 184h3.6v2h-3.6zM1162.3 202h3.6v2h-3.6zM1162.3 140h3.6v2h-3.6zM1162.3 134h3.6v2h-3.6zM1168.8 157h3.6v2h-3.6zM1168.8 170h3.6v2h-3.6zM1168.8 168h3.6v2h-3.6zM1168.8 198h3.6v2h-3.6zM1168.8 139h3.6v2h-3.6zM1168.8 133h3.6v2h-3.6zM1175.2 125h3.6v2h-3.6zM1175.2 171h3.6v2h-3.6zM1175.2 167h3.6v2h-3.6zM1175.2 195h3.6v2h-3.6zM1175.2 179h3.6v2h-3.6zM1175.2 138h3.6v2h-3.6zM1181.7 143h3.6v2h-3.6zM1181.7 156h3.6v2h-3.6zM1181.7 182h3.6v2h-3.6zM1181.7 170h3.6v2h-3.6zM1181.7 193h3.6v2h-3.6zM1181.7 137h3.6v2h-3.6zM1181.7 131h3.6v2h-3.6zM1188.1 141h3.6v2h-3.6zM1188.1 155h3.6v2h-3.6zM1188.1 165h3.6v2h-3.6zM1188.1 169h3.6v2h-3.6zM1188.1 190h3.6v2h-3.6zM1194.6 130h3.6v2h-3.6zM1194.6 124h3.6v2h-3.6zM1194.6 139h3.6v2h-3.6zM1194.6 153h3.6v2h-3.6zM1194.6 163h3.6v2h-3.6zM1194.6 136h3.6v2h-3.6zM1201.1 123h3.6v2h-3.6zM1201.1 160h3.6v2h-3.6zM1201.1 177h3.6v2h-3.6zM1201.1 184h3.6v2h-3.6zM1201.1 135h3.6v2h-3.6zM1207.5 126h3.6v2h-3.6zM1207.5 121h3.6v2h-3.6zM1207.5 129h3.6v2h-3.6zM1207.5 143h3.6v2h-3.6zM1207.5 155h3.6v2h-3.6zM1207.5 149h3.6v2h-3.6zM1207.5 164h3.6v2h-3.6zM1207.5 159h3.6v2h-3.6zM1207.5 161h3.6v2h-3.6zM1207.5 170h3.6v2h-3.6zM1214.0 133h3.6v2h-3.6zM1214.0 146h3.6v2h-3.6zM1214.0 158h3.6v2h-3.6zM1214.0 174h3.6v2h-3.6zM1214.0 128h3.6v2h-3.6z"/>
<path style="mix-blend-mode:screen" fill="#ff2c2c" d="M901.0 362.6h6.51v2.8h-6.51zM907.5 362.6h6.51v2.8h-6.51zM913.9 362.6h6.51v2.8h-6.51zM920.4 362.6h6.51v2.8h-6.51zM926.8 362.6h6.51v2.8h-6.51zM933.3 362.6h6.51v2.8h-6.51zM939.8 362.6h6.51v2.8h-6.51zM946.2 362.6h6.51v2.8h-6.51zM952.7 362.6h6.51v2.8h-6.51zM959.1 361.6h6.51v2.8h-6.51zM959.1 362.6h6.51v2.8h-6.51zM965.6 360.6h6.51v2.8h-6.51zM965.6 361.6h6.51v2.8h-6.51zM965.6 362.6h6.51v2.8h-6.51zM972.1 359.6h6.51v2.8h-6.51zM972.1 360.6h6.51v2.8h-6.51zM972.1 361.6h6.51v2.8h-6.51zM972.1 362.6h6.51v2.8h-6.51zM978.5 358.1h6.51v2.8h-6.51zM978.5 359.6h6.51v2.8h-6.51zM978.5 360.6h6.51v2.8h-6.51zM978.5 362.6h6.51v2.8h-6.51zM985.0 356.1h6.51v2.8h-6.51zM985.0 357.1h6.51v2.8h-6.51zM985.0 358.1h6.51v2.8h-6.51zM985.0 359.6h6.51v2.8h-6.51zM985.0 362.6h6.51v2.8h-6.51zM991.4 353.1h6.51v2.8h-6.51zM991.4 355.1h6.51v2.8h-6.51zM991.4 354.1h6.51v2.8h-6.51zM991.4 357.1h6.51v2.8h-6.51zM991.4 362.6h6.51v2.8h-6.51zM991.4 358.1h6.51v2.8h-6.51zM991.4 356.1h6.51v2.8h-6.51zM997.9 350.1h6.51v2.8h-6.51zM997.9 353.1h6.51v2.8h-6.51zM997.9 352.1h6.51v2.8h-6.51zM997.9 355.1h6.51v2.8h-6.51zM997.9 356.1h6.51v2.8h-6.51zM997.9 362.6h6.51v2.8h-6.51zM997.9 357.1h6.51v2.8h-6.51zM997.9 354.1h6.51v2.8h-6.51zM997.9 351.1h6.51v2.8h-6.51zM1004.4 346.1h6.51v2.8h-6.51zM1004.4 349.1h6.51v2.8h-6.51zM1004.4 348.1h6.51v2.8h-6.51zM1004.4 353.1h6.51v2.8h-6.51zM1004.4 354.1h6.51v2.8h-6.51zM1004.4 362.6h6.51v2.8h-6.51zM1004.4 355.1h6.51v2.8h-6.51zM1004.4 350.1h6.51v2.8h-6.51zM1004.4 347.1h6.51v2.8h-6.51zM1010.8 342.1h6.51v2.8h-6.51zM1010.8 346.1h6.51v2.8h-6.51zM1010.8 345.1h6.51v2.8h-6.51zM1010.8 350.1h6.51v2.8h-6.51zM1010.8 352.1h6.51v2.8h-6.51zM1010.8 362.6h6.51v2.8h-6.51zM1010.8 354.1h6.51v2.8h-6.51zM1010.8 348.1h6.51v2.8h-6.51zM1010.8 347.1h6.51v2.8h-6.51zM1010.8 343.1h6.51v2.8h-6.51zM1017.3 336.6h6.51v2.8h-6.51zM1017.3 342.1h6.51v2.8h-6.51zM1017.3 340.1h6.51v2.8h-6.51zM1017.3 347.1h6.51v2.8h-6.51zM1017.3 349.1h6.51v2.8h-6.51zM1017.3 362.6h6.51v2.8h-6.51zM1017.3 351.1h6.51v2.8h-6.51zM1017.3 344.1h6.51v2.8h-6.51zM1017.3 343.1h6.51v2.8h-6.51zM1017.3 337.6h6.51v2.8h-6.51zM1017.3 335.6h6.51v2.8h-6.51zM1023.7 329.6h6.51v2.8h-6.51zM1023.7 336.6h6.51v2.8h-6.51zM1023.7 333.6h6.51v2.8h-6.51zM1023.7 343.1h6.51v2.8h-6.51zM1023.7 345.1h6.51v2.8h-6.51zM1023.7 362.6h6.51v2.8h-6.51zM1023.7 348.1h6.51v2.8h-6.51zM1023.7 339.1h6.51v2.8h-6.51zM1023.7 331.6h6.51v2.8h-6.51zM1030.2 319.6h6.51v2.8h-6.51zM1030.2 328.6h6.51v2.8h-6.51zM1030.2 324.6h6.51v2.8h-6.51zM1030.2 336.6h6.51v2.8h-6.51zM1030.2 340.1h6.51v2.8h-6.51zM1030.2 362.6h6.51v2.8h-6.51zM1030.2 344.1h6.51v2.8h-6.51zM1030.2 331.6h6.51v2.8h-6.51zM1030.2 330.6h6.51v2.8h-6.51zM1030.2 321.6h6.51v2.8h-6.51zM1036.7 307.1h6.51v2.8h-6.51zM1036.7 318.6h6.51v2.8h-6.51zM1036.7 314.1h6.51v2.8h-6.51zM1036.7 330.6h6.51v2.8h-6.51zM1036.7 333.6h6.51v2.8h-6.51zM1036.7 362.6h6.51v2.8h-6.51zM1036.7 339.1h6.51v2.8h-6.51zM1036.7 323.6h6.51v2.8h-6.51zM1036.7 322.6h6.51v2.8h-6.51zM1036.7 310.1h6.51v2.8h-6.51zM1043.1 290.6h6.51v2.8h-6.51zM1043.1 305.1h6.51v2.8h-6.51zM1043.1 300.1h6.51v2.8h-6.51zM1043.1 320.6h6.51v2.8h-6.51zM1043.1 324.6h6.51v2.8h-6.51zM1043.1 362.6h6.51v2.8h-6.51zM1043.1 331.6h6.51v2.8h-6.51zM1043.1 311.1h6.51v2.8h-6.51zM1043.1 310.1h6.51v2.8h-6.51zM1043.1 293.6h6.51v2.8h-6.51zM1049.6 272.1h6.51v2.8h-6.51zM1049.6 290.6h6.51v2.8h-6.51zM1049.6 283.6h6.51v2.8h-6.51zM1049.6 310.1h6.51v2.8h-6.51zM1049.6 315.1h6.51v2.8h-6.51zM1049.6 362.6h6.51v2.8h-6.51zM1049.6 323.6h6.51v2.8h-6.51zM1049.6 298.1h6.51v2.8h-6.51zM1049.6 296.6h6.51v2.8h-6.51zM1049.6 276.1h6.51v2.8h-6.51zM1056.0 251.6h6.51v2.8h-6.51zM1056.0 274.1h6.51v2.8h-6.51zM1056.0 265.1h6.51v2.8h-6.51zM1056.0 298.1h6.51v2.8h-6.51zM1056.0 304.1h6.51v2.8h-6.51zM1056.0 362.6h6.51v2.8h-6.51zM1056.0 315.1h6.51v2.8h-6.51zM1056.0 282.6h6.51v2.8h-6.51zM1056.0 281.6h6.51v2.8h-6.51zM1056.0 257.1h6.51v2.8h-6.51zM1062.5 229.1h6.51v2.8h-6.51zM1062.5 257.1h6.51v2.8h-6.51zM1062.5 245.6h6.51v2.8h-6.51zM1062.5 284.6h6.51v2.8h-6.51zM1062.5 292.6h6.51v2.8h-6.51zM1062.5 362.6h6.51v2.8h-6.51zM1062.5 306.1h6.51v2.8h-6.51zM1062.5 267.1h6.51v2.8h-6.51zM1062.5 265.1h6.51v2.8h-6.51zM1062.5 235.1h6.51v2.8h-6.51zM1062.5 226.1h6.51v2.8h-6.51zM1069.0 196.6h6.51v2.8h-6.51zM1069.0 201.6h6.51v2.8h-6.51zM1069.0 203.6h6.51v2.8h-6.51zM1069.0 195.6h6.51v2.8h-6.51zM1069.0 200.6h6.51v2.8h-6.51zM1069.0 230.1h6.51v2.8h-6.51zM1069.0 225.1h6.51v2.8h-6.51zM1069.0 266.1h6.51v2.8h-6.51zM1069.0 276.1h6.51v2.8h-6.51zM1069.0 357.1h6.51v2.8h-6.51zM1069.0 347.1h6.51v2.8h-6.51zM1069.0 342.1h6.51v2.8h-6.51zM1069.0 344.1h6.51v2.8h-6.51zM1069.0 336.6h6.51v2.8h-6.51zM1069.0 341.1h6.51v2.8h-6.51zM1069.0 349.1h6.51v2.8h-6.51zM1069.0 350.1h6.51v2.8h-6.51zM1069.0 353.1h6.51v2.8h-6.51zM1069.0 362.6h6.51v2.8h-6.51zM1069.0 294.6h6.51v2.8h-6.51zM1069.0 242.6h6.51v2.8h-6.51zM1069.0 245.6h6.51v2.8h-6.51zM1069.0 209.6h6.51v2.8h-6.51zM1069.0 204.6h6.51v2.8h-6.51zM1069.0 199.6h6.51v2.8h-6.51zM1069.0 197.6h6.51v2.8h-6.51zM1069.0 205.6h6.51v2.8h-6.51zM1075.4 175.1h6.51v2.8h-6.51zM1075.4 180.1h6.51v2.8h-6.51zM1075.4 183.1h6.51v2.8h-6.51zM1075.4 173.6h6.51v2.8h-6.51zM1075.4 213.6h6.51v2.8h-6.51zM1075.4 205.6h6.51v2.8h-6.51zM1075.4 249.6h6.51v2.8h-6.51zM1075.4 262.1h6.51v2.8h-6.51zM1075.4 335.6h6.51v2.8h-6.51zM1075.4 308.1h6.51v2.8h-6.51zM1075.4 300.1h6.51v2.8h-6.51zM1075.4 305.1h6.51v2.8h-6.51zM1075.4 301.1h6.51v2.8h-6.51zM1075.4 291.6h6.51v2.8h-6.51zM1075.4 299.1h6.51v2.8h-6.51zM1075.4 316.1h6.51v2.8h-6.51zM1075.4 318.6h6.51v2.8h-6.51zM1075.4 319.6h6.51v2.8h-6.51zM1075.4 362.6h6.51v2.8h-6.51zM1075.4 286.6h6.51v2.8h-6.51zM1075.4 227.1h6.51v2.8h-6.51zM1075.4 230.1h6.51v2.8h-6.51zM1075.4 190.1h6.51v2.8h-6.51zM1075.4 184.1h6.51v2.8h-6.51zM1075.4 178.1h6.51v2.8h-6.51zM1075.4 177.1h6.51v2.8h-6.51zM1075.4 185.1h6.51v2.8h-6.51zM1075.4 186.1h6.51v2.8h-6.51zM1081.9 151.1h6.51v2.8h-6.51zM1081.9 156.6h6.51v2.8h-6.51zM1081.9 159.6h6.51v2.8h-6.51zM1081.9 155.6h6.51v2.8h-6.51zM1081.9 165.6h6.51v2.8h-6.51zM1081.9 164.6h6.51v2.8h-6.51zM1081.9 199.6h6.51v2.8h-6.51zM1081.9 191.1h6.51v2.8h-6.51zM1081.9 234.1h6.51v2.8h-6.51zM1081.9 246.6h6.51v2.8h-6.51zM1081.9 316.1h6.51v2.8h-6.51zM1081.9 287.6h6.51v2.8h-6.51zM1081.9 280.6h6.51v2.8h-6.51zM1081.9 283.6h6.51v2.8h-6.51zM1081.9 274.1h6.51v2.8h-6.51zM1081.9 296.6h6.51v2.8h-6.51zM1081.9 299.1h6.51v2.8h-6.51zM1081.9 294.6h6.51v2.8h-6.51zM1081.9 362.6h6.51v2.8h-6.51zM1081.9 277.6h6.51v2.8h-6.51zM1081.9 213.6h6.51v2.8h-6.51zM1081.9 218.1h6.51v2.8h-6.51zM1081.9 173.6h6.51v2.8h-6.51zM1081.9 157.6h6.51v2.8h-6.51zM1081.9 163.6h6.51v2.8h-6.51zM1081.9 154.6h6.51v2.8h-6.51zM1081.9 152.1h6.51v2.8h-6.51zM1081.9 160.6h6.51v2.8h-6.51zM1081.9 171.6h6.51v2.8h-6.51zM1088.3 129.6h6.51v2.8h-6.51zM1088.3 135.1h6.51v2.8h-6.51zM1088.3 138.1h6.51v2.8h-6.51zM1088.3 139.1h6.51v2.8h-6.51zM1088.3 151.1h6.51v2.8h-6.51zM1088.3 187.1h6.51v2.8h-6.51zM1088.3 178.1h6.51v2.8h-6.51zM1088.3 220.1h6.51v2.8h-6.51zM1088.3 233.1h6.51v2.8h-6.51zM1088.3 296.6h6.51v2.8h-6.51zM1088.3 269.1h6.51v2.8h-6.51zM1088.3 263.1h6.51v2.8h-6.51zM1088.3 272.1h6.51v2.8h-6.51zM1088.3 267.1h6.51v2.8h-6.51zM1088.3 258.1h6.51v2.8h-6.51zM1088.3 279.6h6.51v2.8h-6.51zM1088.3 281.6h6.51v2.8h-6.51zM1088.3 274.1h6.51v2.8h-6.51zM1088.3 353.1h6.51v2.8h-6.51zM1088.3 202.6h6.51v2.8h-6.51zM1088.3 206.6h6.51v2.8h-6.51zM1088.3 160.6h6.51v2.8h-6.51zM1088.3 143.1h6.51v2.8h-6.51zM1088.3 146.1h6.51v2.8h-6.51zM1088.3 134.1h6.51v2.8h-6.51zM1088.3 131.6h6.51v2.8h-6.51zM1088.3 140.1h6.51v2.8h-6.51zM1088.3 159.6h6.51v2.8h-6.51zM1094.8 112.1h6.51v2.8h-6.51zM1094.8 117.6h6.51v2.8h-6.51zM1094.8 121.6h6.51v2.8h-6.51zM1094.8 126.6h6.51v2.8h-6.51zM1094.8 141.1h6.51v2.8h-6.51zM1094.8 142.1h6.51v2.8h-6.51zM1094.8 178.1h6.51v2.8h-6.51zM1094.8 167.6h6.51v2.8h-6.51zM1094.8 207.6h6.51v2.8h-6.51zM1094.8 221.1h6.51v2.8h-6.51zM1094.8 280.6h6.51v2.8h-6.51zM1094.8 253.6h6.51v2.8h-6.51zM1094.8 247.6h6.51v2.8h-6.51zM1094.8 258.1h6.51v2.8h-6.51zM1094.8 252.6h6.51v2.8h-6.51zM1094.8 242.6h6.51v2.8h-6.51zM1094.8 265.1h6.51v2.8h-6.51zM1094.8 266.1h6.51v2.8h-6.51zM1094.8 346.1h6.51v2.8h-6.51zM1094.8 262.1h6.51v2.8h-6.51zM1094.8 192.1h6.51v2.8h-6.51zM1094.8 197.6h6.51v2.8h-6.51zM1094.8 150.1h6.51v2.8h-6.51zM1094.8 132.6h6.51v2.8h-6.51zM1094.8 116.6h6.51v2.8h-6.51zM1094.8 114.6h6.51v2.8h-6.51zM1094.8 122.6h6.51v2.8h-6.51zM1094.8 149.1h6.51v2.8h-6.51zM1101.3 101.1h6.51v2.8h-6.51zM1101.3 105.1h6.51v2.8h-6.51zM1101.3 115.6h6.51v2.8h-6.51zM1101.3 131.6h6.51v2.8h-6.51zM1101.3 134.1h6.51v2.8h-6.51zM1101.3 169.6h6.51v2.8h-6.51zM1101.3 159.6h6.51v2.8h-6.51zM1101.3 196.6h6.51v2.8h-6.51zM1101.3 209.6h6.51v2.8h-6.51zM1101.3 266.1h6.51v2.8h-6.51zM1101.3 238.6h6.51v2.8h-6.51zM1101.3 233.1h6.51v2.8h-6.51zM1101.3 242.6h6.51v2.8h-6.51zM1101.3 237.6h6.51v2.8h-6.51zM1101.3 228.1h6.51v2.8h-6.51zM1101.3 250.6h6.51v2.8h-6.51zM1101.3 251.6h6.51v2.8h-6.51zM1101.3 336.6h6.51v2.8h-6.51zM1101.3 253.6h6.51v2.8h-6.51zM1101.3 183.1h6.51v2.8h-6.51zM1101.3 188.1h6.51v2.8h-6.51zM1101.3 141.1h6.51v2.8h-6.51zM1101.3 123.6h6.51v2.8h-6.51zM1101.3 120.6h6.51v2.8h-6.51zM1101.3 140.1h6.51v2.8h-6.51zM1107.7 101.1h6.51v2.8h-6.51zM1107.7 110.1h6.51v2.8h-6.51zM1107.7 126.6h6.51v2.8h-6.51zM1107.7 128.6h6.51v2.8h-6.51zM1107.7 163.6h6.51v2.8h-6.51zM1107.7 153.1h6.51v2.8h-6.51zM1107.7 187.1h6.51v2.8h-6.51zM1107.7 200.6h6.51v2.8h-6.51zM1107.7 253.6h6.51v2.8h-6.51zM1107.7 225.1h6.51v2.8h-6.51zM1107.7 220.1h6.51v2.8h-6.51zM1107.7 230.1h6.51v2.8h-6.51zM1107.7 214.6h6.51v2.8h-6.51zM1107.7 237.6h6.51v2.8h-6.51zM1107.7 239.6h6.51v2.8h-6.51zM1107.7 228.1h6.51v2.8h-6.51zM1107.7 317.1h6.51v2.8h-6.51zM1107.7 247.6h6.51v2.8h-6.51zM1107.7 177.1h6.51v2.8h-6.51zM1107.7 180.1h6.51v2.8h-6.51zM1107.7 136.1h6.51v2.8h-6.51zM1107.7 118.6h6.51v2.8h-6.51zM1107.7 114.6h6.51v2.8h-6.51zM1107.7 134.1h6.51v2.8h-6.51zM1114.2 101.1h6.51v2.8h-6.51zM1114.2 106.1h6.51v2.8h-6.51zM1114.2 122.6h6.51v2.8h-6.51zM1114.2 124.6h6.51v2.8h-6.51zM1114.2 158.6h6.51v2.8h-6.51zM1114.2 148.1h6.51v2.8h-6.51zM1114.2 179.1h6.51v2.8h-6.51zM1114.2 192.1h6.51v2.8h-6.51zM1114.2 241.6h6.51v2.8h-6.51zM1114.2 212.6h6.51v2.8h-6.51zM1114.2 207.6h6.51v2.8h-6.51zM1114.2 219.1h6.51v2.8h-6.51zM1114.2 213.6h6.51v2.8h-6.51zM1114.2 204.6h6.51v2.8h-6.51zM1114.2 225.1h6.51v2.8h-6.51zM1114.2 227.1h6.51v2.8h-6.51zM1114.2 216.1h6.51v2.8h-6.51zM1114.2 295.6h6.51v2.8h-6.51zM1114.2 239.6h6.51v2.8h-6.51zM1114.2 169.6h6.51v2.8h-6.51zM1114.2 172.6h6.51v2.8h-6.51zM1114.2 130.6h6.51v2.8h-6.51zM1114.2 114.6h6.51v2.8h-6.51zM1114.2 111.1h6.51v2.8h-6.51zM1114.2 126.6h6.51v2.8h-6.51zM1120.6 101.1h6.51v2.8h-6.51zM1120.6 104.1h6.51v2.8h-6.51zM1120.6 120.6h6.51v2.8h-6.51zM1120.6 122.6h6.51v2.8h-6.51zM1120.6 153.1h6.51v2.8h-6.51zM1120.6 145.1h6.51v2.8h-6.51zM1120.6 171.6h6.51v2.8h-6.51zM1120.6 185.1h6.51v2.8h-6.51zM1120.6 230.1h6.51v2.8h-6.51zM1120.6 202.6h6.51v2.8h-6.51zM1120.6 198.6h6.51v2.8h-6.51zM1120.6 210.6h6.51v2.8h-6.51zM1120.6 206.6h6.51v2.8h-6.51zM1120.6 197.6h6.51v2.8h-6.51zM1120.6 199.6h6.51v2.8h-6.51zM1120.6 214.6h6.51v2.8h-6.51zM1120.6 216.1h6.51v2.8h-6.51zM1120.6 204.6h6.51v2.8h-6.51zM1120.6 279.6h6.51v2.8h-6.51zM1120.6 229.1h6.51v2.8h-6.51zM1120.6 163.6h6.51v2.8h-6.51zM1120.6 166.6h6.51v2.8h-6.51zM1120.6 127.6h6.51v2.8h-6.51zM1120.6 112.1h6.51v2.8h-6.51zM1120.6 108.1h6.51v2.8h-6.51zM1120.6 123.6h6.51v2.8h-6.51zM1127.1 101.1h6.51v2.8h-6.51zM1127.1 116.6h6.51v2.8h-6.51zM1127.1 118.6h6.51v2.8h-6.51zM1127.1 148.1h6.51v2.8h-6.51zM1127.1 140.1h6.51v2.8h-6.51zM1127.1 163.6h6.51v2.8h-6.51zM1127.1 177.1h6.51v2.8h-6.51zM1127.1 219.1h6.51v2.8h-6.51zM1127.1 194.1h6.51v2.8h-6.51zM1127.1 191.1h6.51v2.8h-6.51zM1127.1 204.6h6.51v2.8h-6.51zM1127.1 200.6h6.51v2.8h-6.51zM1127.1 192.1h6.51v2.8h-6.51zM1127.1 207.6h6.51v2.8h-6.51zM1127.1 208.6h6.51v2.8h-6.51zM1127.1 193.1h6.51v2.8h-6.51zM1127.1 264.1h6.51v2.8h-6.51zM1127.1 218.1h6.51v2.8h-6.51zM1127.1 156.6h6.51v2.8h-6.51zM1127.1 160.6h6.51v2.8h-6.51zM1127.1 123.6h6.51v2.8h-6.51zM1127.1 108.1h6.51v2.8h-6.51zM1127.1 119.6h6.51v2.8h-6.51zM1133.6 101.1h6.51v2.8h-6.51zM1133.6 113.6h6.51v2.8h-6.51zM1133.6 115.6h6.51v2.8h-6.51zM1133.6 144.1h6.51v2.8h-6.51zM1133.6 136.1h6.51v2.8h-6.51zM1133.6 158.6h6.51v2.8h-6.51zM1133.6 171.6h6.51v2.8h-6.51zM1133.6 211.6h6.51v2.8h-6.51zM1133.6 188.1h6.51v2.8h-6.51zM1133.6 186.1h6.51v2.8h-6.51zM1133.6 200.6h6.51v2.8h-6.51zM1133.6 196.6h6.51v2.8h-6.51zM1133.6 187.1h6.51v2.8h-6.51zM1133.6 201.6h6.51v2.8h-6.51zM1133.6 202.6h6.51v2.8h-6.51zM1133.6 246.6h6.51v2.8h-6.51zM1133.6 206.6h6.51v2.8h-6.51zM1133.6 151.1h6.51v2.8h-6.51zM1133.6 154.6h6.51v2.8h-6.51zM1133.6 120.6h6.51v2.8h-6.51zM1133.6 105.1h6.51v2.8h-6.51zM1133.6 116.6h6.51v2.8h-6.51zM1140.0 101.1h6.51v2.8h-6.51zM1140.0 111.1h6.51v2.8h-6.51zM1140.0 113.6h6.51v2.8h-6.51zM1140.0 141.1h6.51v2.8h-6.51zM1140.0 132.6h6.51v2.8h-6.51zM1140.0 153.1h6.51v2.8h-6.51zM1140.0 166.6h6.51v2.8h-6.51zM1140.0 205.6h6.51v2.8h-6.51zM1140.0 183.1h6.51v2.8h-6.51zM1140.0 181.1h6.51v2.8h-6.51zM1140.0 196.6h6.51v2.8h-6.51zM1140.0 192.1h6.51v2.8h-6.51zM1140.0 197.6h6.51v2.8h-6.51zM1140.0 180.1h6.51v2.8h-6.51zM1140.0 231.1h6.51v2.8h-6.51zM1140.0 198.6h6.51v2.8h-6.51zM1140.0 148.1h6.51v2.8h-6.51zM1140.0 149.1h6.51v2.8h-6.51zM1140.0 117.6h6.51v2.8h-6.51zM1140.0 103.1h6.51v2.8h-6.51zM1140.0 114.6h6.51v2.8h-6.51zM1146.5 101.1h6.51v2.8h-6.51zM1146.5 108.1h6.51v2.8h-6.51zM1146.5 110.1h6.51v2.8h-6.51zM1146.5 137.1h6.51v2.8h-6.51zM1146.5 129.6h6.51v2.8h-6.51zM1146.5 149.1h6.51v2.8h-6.51zM1146.5 162.6h6.51v2.8h-6.51zM1146.5 200.6h6.51v2.8h-6.51zM1146.5 180.1h6.51v2.8h-6.51zM1146.5 177.1h6.51v2.8h-6.51zM1146.5 192.1h6.51v2.8h-6.51zM1146.5 189.1h6.51v2.8h-6.51zM1146.5 179.1h6.51v2.8h-6.51zM1146.5 173.6h6.51v2.8h-6.51zM1146.5 221.1h6.51v2.8h-6.51zM1146.5 145.1h6.51v2.8h-6.51zM1146.5 144.1h6.51v2.8h-6.51zM1146.5 114.6h6.51v2.8h-6.51zM1146.5 112.1h6.51v2.8h-6.51zM1152.9 101.1h6.51v2.8h-6.51zM1152.9 106.1h6.51v2.8h-6.51zM1152.9 108.1h6.51v2.8h-6.51zM1152.9 135.1h6.51v2.8h-6.51zM1152.9 127.6h6.51v2.8h-6.51zM1152.9 147.1h6.51v2.8h-6.51zM1152.9 159.6h6.51v2.8h-6.51zM1152.9 196.6h6.51v2.8h-6.51zM1152.9 177.1h6.51v2.8h-6.51zM1152.9 173.6h6.51v2.8h-6.51zM1152.9 189.1h6.51v2.8h-6.51zM1152.9 187.1h6.51v2.8h-6.51zM1152.9 176.1h6.51v2.8h-6.51zM1152.9 190.1h6.51v2.8h-6.51zM1152.9 171.6h6.51v2.8h-6.51zM1152.9 213.6h6.51v2.8h-6.51zM1152.9 143.1h6.51v2.8h-6.51zM1152.9 140.1h6.51v2.8h-6.51zM1152.9 112.1h6.51v2.8h-6.51zM1152.9 111.1h6.51v2.8h-6.51zM1159.4 101.1h6.51v2.8h-6.51zM1159.4 106.1h6.51v2.8h-6.51zM1159.4 132.6h6.51v2.8h-6.51zM1159.4 125.6h6.51v2.8h-6.51zM1159.4 145.1h6.51v2.8h-6.51zM1159.4 157.6h6.51v2.8h-6.51zM1159.4 189.1h6.51v2.8h-6.51zM1159.4 176.1h6.51v2.8h-6.51zM1159.4 169.6h6.51v2.8h-6.51zM1159.4 185.1h6.51v2.8h-6.51zM1159.4 187.1h6.51v2.8h-6.51zM1159.4 170.6h6.51v2.8h-6.51zM1159.4 173.6h6.51v2.8h-6.51zM1159.4 188.1h6.51v2.8h-6.51zM1159.4 182.1h6.51v2.8h-6.51zM1159.4 168.6h6.51v2.8h-6.51zM1159.4 204.6h6.51v2.8h-6.51zM1159.4 141.1h6.51v2.8h-6.51zM1159.4 135.1h6.51v2.8h-6.51zM1159.4 108.1h6.51v2.8h-6.51zM1159.4 109.1h6.51v2.8h-6.51zM1165.9 101.1h6.51v2.8h-6.51zM1165.9 106.1h6.51v2.8h-6.51zM1165.9 131.6h6.51v2.8h-6.51zM1165.9 125.6h6.51v2.8h-6.51zM1165.9 145.1h6.51v2.8h-6.51zM1165.9 157.6h6.51v2.8h-6.51zM1165.9 189.1h6.51v2.8h-6.51zM1165.9 175.1h6.51v2.8h-6.51zM1165.9 168.6h6.51v2.8h-6.51zM1165.9 184.1h6.51v2.8h-6.51zM1165.9 186.1h6.51v2.8h-6.51zM1165.9 170.6h6.51v2.8h-6.51zM1165.9 172.6h6.51v2.8h-6.51zM1165.9 188.1h6.51v2.8h-6.51zM1165.9 182.1h6.51v2.8h-6.51zM1165.9 201.6h6.51v2.8h-6.51zM1165.9 183.1h6.51v2.8h-6.51zM1165.9 140.1h6.51v2.8h-6.51zM1165.9 134.1h6.51v2.8h-6.51zM1165.9 108.1h6.51v2.8h-6.51zM1165.9 107.1h6.51v2.8h-6.51zM1172.3 101.1h6.51v2.8h-6.51zM1172.3 106.1h6.51v2.8h-6.51zM1172.3 131.6h6.51v2.8h-6.51zM1172.3 125.6h6.51v2.8h-6.51zM1172.3 144.1h6.51v2.8h-6.51zM1172.3 156.6h6.51v2.8h-6.51zM1172.3 188.1h6.51v2.8h-6.51zM1172.3 173.6h6.51v2.8h-6.51zM1172.3 168.6h6.51v2.8h-6.51zM1172.3 184.1h6.51v2.8h-6.51zM1172.3 185.1h6.51v2.8h-6.51zM1172.3 169.6h6.51v2.8h-6.51zM1172.3 171.6h6.51v2.8h-6.51zM1172.3 187.1h6.51v2.8h-6.51zM1172.3 181.1h6.51v2.8h-6.51zM1172.3 167.6h6.51v2.8h-6.51zM1172.3 197.6h6.51v2.8h-6.51zM1172.3 139.1h6.51v2.8h-6.51zM1172.3 132.6h6.51v2.8h-6.51zM1172.3 108.1h6.51v2.8h-6.51zM1178.8 101.1h6.51v2.8h-6.51zM1178.8 106.1h6.51v2.8h-6.51zM1178.8 131.6h6.51v2.8h-6.51zM1178.8 124.6h6.51v2.8h-6.51zM1178.8 144.1h6.51v2.8h-6.51zM1178.8 156.6h6.51v2.8h-6.51zM1178.8 187.1h6.51v2.8h-6.51zM1178.8 172.6h6.51v2.8h-6.51zM1178.8 167.6h6.51v2.8h-6.51zM1178.8 183.1h6.51v2.8h-6.51zM1178.8 184.1h6.51v2.8h-6.51zM1178.8 168.6h6.51v2.8h-6.51zM1178.8 170.6h6.51v2.8h-6.51zM1178.8 186.1h6.51v2.8h-6.51zM1178.8 180.1h6.51v2.8h-6.51zM1178.8 166.6h6.51v2.8h-6.51zM1178.8 194.1h6.51v2.8h-6.51zM1178.8 179.1h6.51v2.8h-6.51zM1178.8 138.1h6.51v2.8h-6.51zM1178.8 108.1h6.51v2.8h-6.51zM1178.8 105.1h6.51v2.8h-6.51zM1185.2 101.1h6.51v2.8h-6.51zM1185.2 106.1h6.51v2.8h-6.51zM1185.2 131.6h6.51v2.8h-6.51zM1185.2 124.6h6.51v2.8h-6.51zM1185.2 143.1h6.51v2.8h-6.51zM1185.2 155.6h6.51v2.8h-6.51zM1185.2 186.1h6.51v2.8h-6.51zM1185.2 171.6h6.51v2.8h-6.51zM1185.2 166.6h6.51v2.8h-6.51zM1185.2 182.1h6.51v2.8h-6.51zM1185.2 183.1h6.51v2.8h-6.51zM1185.2 169.6h6.51v2.8h-6.51zM1185.2 187.1h6.51v2.8h-6.51zM1185.2 181.1h6.51v2.8h-6.51zM1185.2 167.6h6.51v2.8h-6.51zM1185.2 192.1h6.51v2.8h-6.51zM1185.2 177.1h6.51v2.8h-6.51zM1185.2 137.1h6.51v2.8h-6.51zM1185.2 130.6h6.51v2.8h-6.51zM1185.2 108.1h6.51v2.8h-6.51zM1185.2 104.1h6.51v2.8h-6.51zM1191.7 101.1h6.51v2.8h-6.51zM1191.7 106.1h6.51v2.8h-6.51zM1191.7 130.6h6.51v2.8h-6.51zM1191.7 124.6h6.51v2.8h-6.51zM1191.7 141.1h6.51v2.8h-6.51zM1191.7 154.6h6.51v2.8h-6.51zM1191.7 184.1h6.51v2.8h-6.51zM1191.7 170.6h6.51v2.8h-6.51zM1191.7 164.6h6.51v2.8h-6.51zM1191.7 180.1h6.51v2.8h-6.51zM1191.7 182.1h6.51v2.8h-6.51zM1191.7 169.6h6.51v2.8h-6.51zM1191.7 171.6h6.51v2.8h-6.51zM1191.7 187.1h6.51v2.8h-6.51zM1191.7 181.1h6.51v2.8h-6.51zM1191.7 168.6h6.51v2.8h-6.51zM1191.7 189.1h6.51v2.8h-6.51zM1191.7 175.1h6.51v2.8h-6.51zM1191.7 137.1h6.51v2.8h-6.51zM1191.7 108.1h6.51v2.8h-6.51zM1191.7 102.1h6.51v2.8h-6.51zM1198.2 101.1h6.51v2.8h-6.51zM1198.2 106.1h6.51v2.8h-6.51zM1198.2 129.6h6.51v2.8h-6.51zM1198.2 123.6h6.51v2.8h-6.51zM1198.2 139.1h6.51v2.8h-6.51zM1198.2 152.1h6.51v2.8h-6.51zM1198.2 182.1h6.51v2.8h-6.51zM1198.2 168.6h6.51v2.8h-6.51zM1198.2 162.6h6.51v2.8h-6.51zM1198.2 178.1h6.51v2.8h-6.51zM1198.2 180.1h6.51v2.8h-6.51zM1198.2 171.6h6.51v2.8h-6.51zM1198.2 186.1h6.51v2.8h-6.51zM1198.2 187.1h6.51v2.8h-6.51zM1198.2 172.6h6.51v2.8h-6.51zM1198.2 136.1h6.51v2.8h-6.51zM1198.2 130.6h6.51v2.8h-6.51zM1198.2 108.1h6.51v2.8h-6.51zM1204.6 101.1h6.51v2.8h-6.51zM1204.6 106.1h6.51v2.8h-6.51zM1204.6 129.6h6.51v2.8h-6.51zM1204.6 122.6h6.51v2.8h-6.51zM1204.6 137.1h6.51v2.8h-6.51zM1204.6 151.1h6.51v2.8h-6.51zM1204.6 179.1h6.51v2.8h-6.51zM1204.6 165.6h6.51v2.8h-6.51zM1204.6 159.6h6.51v2.8h-6.51zM1204.6 175.1h6.51v2.8h-6.51zM1204.6 177.1h6.51v2.8h-6.51zM1204.6 168.6h6.51v2.8h-6.51zM1204.6 170.6h6.51v2.8h-6.51zM1204.6 186.1h6.51v2.8h-6.51zM1204.6 180.1h6.51v2.8h-6.51zM1204.6 184.1h6.51v2.8h-6.51zM1204.6 135.1h6.51v2.8h-6.51zM1204.6 107.1h6.51v2.8h-6.51zM1211.1 101.1h6.51v2.8h-6.51zM1211.1 106.1h6.51v2.8h-6.51zM1211.1 125.6h6.51v2.8h-6.51zM1211.1 120.6h6.51v2.8h-6.51zM1211.1 128.6h6.51v2.8h-6.51zM1211.1 143.1h6.51v2.8h-6.51zM1211.1 167.6h6.51v2.8h-6.51zM1211.1 154.6h6.51v2.8h-6.51zM1211.1 148.1h6.51v2.8h-6.51zM1211.1 163.6h6.51v2.8h-6.51zM1211.1 165.6h6.51v2.8h-6.51zM1211.1 158.6h6.51v2.8h-6.51zM1211.1 160.6h6.51v2.8h-6.51zM1211.1 176.1h6.51v2.8h-6.51zM1211.1 169.6h6.51v2.8h-6.51zM1211.1 159.6h6.51v2.8h-6.51zM1211.1 181.1h6.51v2.8h-6.51zM1211.1 168.6h6.51v2.8h-6.51zM1211.1 135.1h6.51v2.8h-6.51zM1211.1 129.6h6.51v2.8h-6.51zM1211.1 107.1h6.51v2.8h-6.51zM1217.5 101.1h6.51v2.8h-6.51zM1217.5 106.1h6.51v2.8h-6.51zM1217.5 132.6h6.51v2.8h-6.51zM1217.5 145.1h6.51v2.8h-6.51zM1217.5 157.6h6.51v2.8h-6.51zM1217.5 173.6h6.51v2.8h-6.51zM1217.5 154.6h6.51v2.8h-6.51zM1217.5 129.6h6.51v2.8h-6.51zM1217.5 127.6h6.51v2.8h-6.51z"/>
<path style="mix-blend-mode:screen" fill="#2cf02c" opacity=".45" d="M1004.4 359h6.51v2h-6.51zM1010.8 358h6.51v2h-6.51zM1017.3 357h6.51v2h-6.51zM1017.3 348h6.51v2h-6.51zM1023.7 356h6.51v2h-6.51zM1023.7 344h6.51v2h-6.51zM1023.7 355h6.51v2h-6.51zM1023.7 346h6.51v2h-6.51zM1030.2 353h6.51v2h-6.51zM1030.2 338h6.51v2h-6.51zM1030.2 327h6.51v2h-6.51zM1030.2 339h6.51v2h-6.51zM1030.2 341h6.51v2h-6.51zM1036.7 351h6.51v2h-6.51zM1036.7 332h6.51v2h-6.51zM1036.7 317h6.51v2h-6.51zM1036.7 311h6.51v2h-6.51zM1036.7 322h6.51v2h-6.51zM1036.7 335h6.51v2h-6.51zM1043.1 347h6.51v2h-6.51zM1043.1 322h6.51v2h-6.51zM1043.1 302h6.51v2h-6.51zM1043.1 294h6.51v2h-6.51zM1043.1 296h6.51v2h-6.51zM1043.1 310h6.51v2h-6.51zM1043.1 346h6.51v2h-6.51zM1043.1 327h6.51v2h-6.51zM1049.6 343h6.51v2h-6.51zM1049.6 312h6.51v2h-6.51zM1049.6 297h6.51v2h-6.51zM1049.6 287h6.51v2h-6.51zM1049.6 277h6.51v2h-6.51zM1049.6 278h6.51v2h-6.51zM1049.6 288h6.51v2h-6.51zM1049.6 342h6.51v2h-6.51zM1049.6 318h6.51v2h-6.51zM1056.0 338h6.51v2h-6.51zM1056.0 300h6.51v2h-6.51zM1056.0 282h6.51v2h-6.51zM1056.0 270h6.51v2h-6.51zM1056.0 257h6.51v2h-6.51zM1056.0 259h6.51v2h-6.51zM1056.0 281h6.51v2h-6.51zM1056.0 307h6.51v2h-6.51zM1062.5 334h6.51v2h-6.51zM1062.5 288h6.51v2h-6.51zM1062.5 265h6.51v2h-6.51zM1062.5 251h6.51v2h-6.51zM1062.5 236h6.51v2h-6.51zM1062.5 238h6.51v2h-6.51zM1062.5 264h6.51v2h-6.51zM1062.5 333h6.51v2h-6.51zM1062.5 295h6.51v2h-6.51zM1069.0 327h6.51v2h-6.51zM1069.0 272h6.51v2h-6.51zM1069.0 243h6.51v2h-6.51zM1069.0 227h6.51v2h-6.51zM1069.0 210h6.51v2h-6.51zM1069.0 202h6.51v2h-6.51zM1069.0 200h6.51v2h-6.51zM1069.0 213h6.51v2h-6.51zM1069.0 225h6.51v2h-6.51zM1069.0 244h6.51v2h-6.51zM1069.0 325h6.51v2h-6.51zM1069.0 284h6.51v2h-6.51zM1075.4 322h6.51v2h-6.51zM1075.4 259h6.51v2h-6.51zM1075.4 228h6.51v2h-6.51zM1075.4 209h6.51v2h-6.51zM1075.4 190h6.51v2h-6.51zM1075.4 192h6.51v2h-6.51zM1075.4 206h6.51v2h-6.51zM1075.4 226h6.51v2h-6.51zM1075.4 255h6.51v2h-6.51zM1075.4 317h6.51v2h-6.51zM1075.4 274h6.51v2h-6.51zM1081.9 304h6.51v2h-6.51zM1081.9 242h6.51v2h-6.51zM1081.9 211h6.51v2h-6.51zM1081.9 193h6.51v2h-6.51zM1081.9 174h6.51v2h-6.51zM1081.9 164h6.51v2h-6.51zM1081.9 163h6.51v2h-6.51zM1081.9 162h6.51v2h-6.51zM1081.9 175h6.51v2h-6.51zM1081.9 190h6.51v2h-6.51zM1081.9 239h6.51v2h-6.51zM1081.9 309h6.51v2h-6.51zM1081.9 357h6.51v2h-6.51zM1081.9 348h6.51v2h-6.51zM1081.9 259h6.51v2h-6.51zM1088.3 286h6.51v2h-6.51zM1088.3 224h6.51v2h-6.51zM1088.3 195h6.51v2h-6.51zM1088.3 179h6.51v2h-6.51zM1088.3 161h6.51v2h-6.51zM1088.3 149h6.51v2h-6.51zM1088.3 148h6.51v2h-6.51zM1088.3 176h6.51v2h-6.51zM1088.3 197h6.51v2h-6.51zM1088.3 225h6.51v2h-6.51zM1088.3 296h6.51v2h-6.51zM1088.3 347h6.51v2h-6.51zM1088.3 337h6.51v2h-6.51zM1088.3 247h6.51v2h-6.51zM1094.8 268h6.51v2h-6.51zM1094.8 207h6.51v2h-6.51zM1094.8 181h6.51v2h-6.51zM1094.8 167h6.51v2h-6.51zM1094.8 151h6.51v2h-6.51zM1094.8 166h6.51v2h-6.51zM1094.8 213h6.51v2h-6.51zM1094.8 286h6.51v2h-6.51zM1094.8 338h6.51v2h-6.51zM1094.8 324h6.51v2h-6.51zM1094.8 315h6.51v2h-6.51zM1094.8 233h6.51v2h-6.51zM1101.3 250h6.51v2h-6.51zM1101.3 169h6.51v2h-6.51zM1101.3 157h6.51v2h-6.51zM1101.3 142h6.51v2h-6.51zM1101.3 129h6.51v2h-6.51zM1101.3 128h6.51v2h-6.51zM1101.3 156h6.51v2h-6.51zM1101.3 177h6.51v2h-6.51zM1101.3 202h6.51v2h-6.51zM1101.3 275h6.51v2h-6.51zM1101.3 328h6.51v2h-6.51zM1101.3 310h6.51v2h-6.51zM1101.3 295h6.51v2h-6.51zM1101.3 288h6.51v2h-6.51zM1101.3 218h6.51v2h-6.51zM1107.7 230h6.51v2h-6.51zM1107.7 162h6.51v2h-6.51zM1107.7 151h6.51v2h-6.51zM1107.7 136h6.51v2h-6.51zM1107.7 123h6.51v2h-6.51zM1107.7 150h6.51v2h-6.51zM1107.7 170h6.51v2h-6.51zM1107.7 193h6.51v2h-6.51zM1107.7 260h6.51v2h-6.51zM1107.7 312h6.51v2h-6.51zM1107.7 295h6.51v2h-6.51zM1107.7 278h6.51v2h-6.51zM1107.7 200h6.51v2h-6.51zM1114.2 214h6.51v2h-6.51zM1114.2 178h6.51v2h-6.51zM1114.2 157h6.51v2h-6.51zM1114.2 146h6.51v2h-6.51zM1114.2 132h6.51v2h-6.51zM1114.2 119h6.51v2h-6.51zM1114.2 131h6.51v2h-6.51zM1114.2 145h6.51v2h-6.51zM1114.2 164h6.51v2h-6.51zM1114.2 184h6.51v2h-6.51zM1114.2 244h6.51v2h-6.51zM1114.2 292h6.51v2h-6.51zM1114.2 276h6.51v2h-6.51zM1114.2 259h6.51v2h-6.51zM1114.2 252h6.51v2h-6.51zM1114.2 239h6.51v2h-6.51zM1114.2 237h6.51v2h-6.51zM1114.2 185h6.51v2h-6.51zM1120.6 200h6.51v2h-6.51zM1120.6 169h6.51v2h-6.51zM1120.6 153h6.51v2h-6.51zM1120.6 141h6.51v2h-6.51zM1120.6 129h6.51v2h-6.51zM1120.6 117h6.51v2h-6.51zM1120.6 128h6.51v2h-6.51zM1120.6 140h6.51v2h-6.51zM1120.6 177h6.51v2h-6.51zM1120.6 232h6.51v2h-6.51zM1120.6 275h6.51v2h-6.51zM1120.6 258h6.51v2h-6.51zM1120.6 238h6.51v2h-6.51zM1120.6 225h6.51v2h-6.51zM1120.6 222h6.51v2h-6.51zM1120.6 176h6.51v2h-6.51zM1127.1 191h6.51v2h-6.51zM1127.1 162h6.51v2h-6.51zM1127.1 147h6.51v2h-6.51zM1127.1 137h6.51v2h-6.51zM1127.1 125h6.51v2h-6.51zM1127.1 113h6.51v2h-6.51zM1127.1 124h6.51v2h-6.51zM1127.1 136h6.51v2h-6.51zM1127.1 154h6.51v2h-6.51zM1127.1 170h6.51v2h-6.51zM1127.1 220h6.51v2h-6.51zM1127.1 259h6.51v2h-6.51zM1127.1 242h6.51v2h-6.51zM1127.1 228h6.51v2h-6.51zM1127.1 227h6.51v2h-6.51zM1127.1 226h6.51v2h-6.51zM1127.1 213h6.51v2h-6.51zM1127.1 169h6.51v2h-6.51zM1133.6 183h6.51v2h-6.51zM1133.6 157h6.51v2h-6.51zM1133.6 144h6.51v2h-6.51zM1133.6 135h6.51v2h-6.51zM1133.6 123h6.51v2h-6.51zM1133.6 110h6.51v2h-6.51zM1133.6 121h6.51v2h-6.51zM1133.6 133h6.51v2h-6.51zM1133.6 150h6.51v2h-6.51zM1133.6 165h6.51v2h-6.51zM1133.6 208h6.51v2h-6.51zM1133.6 242h6.51v2h-6.51zM1133.6 228h6.51v2h-6.51zM1133.6 215h6.51v2h-6.51zM1133.6 204h6.51v2h-6.51zM1133.6 205h6.51v2h-6.51zM1133.6 163h6.51v2h-6.51zM1140.0 176h6.51v2h-6.51zM1140.0 153h6.51v2h-6.51zM1140.0 142h6.51v2h-6.51zM1140.0 133h6.51v2h-6.51zM1140.0 120h6.51v2h-6.51zM1140.0 118h6.51v2h-6.51zM1140.0 130h6.51v2h-6.51zM1140.0 160h6.51v2h-6.51zM1140.0 198h6.51v2h-6.51zM1140.0 229h6.51v2h-6.51zM1140.0 216h6.51v2h-6.51zM1140.0 195h6.51v2h-6.51zM1140.0 196h6.51v2h-6.51zM1140.0 158h6.51v2h-6.51zM1146.5 170h6.51v2h-6.51zM1146.5 149h6.51v2h-6.51zM1146.5 131h6.51v2h-6.51zM1146.5 118h6.51v2h-6.51zM1146.5 105h6.51v2h-6.51zM1146.5 115h6.51v2h-6.51zM1146.5 127h6.51v2h-6.51zM1146.5 208h6.51v2h-6.51zM1146.5 187h6.51v2h-6.51zM1146.5 189h6.51v2h-6.51zM1152.9 165h6.51v2h-6.51zM1152.9 147h6.51v2h-6.51zM1152.9 129h6.51v2h-6.51zM1152.9 115h6.51v2h-6.51zM1152.9 113h6.51v2h-6.51zM1152.9 126h6.51v2h-6.51zM1152.9 154h6.51v2h-6.51zM1152.9 203h6.51v2h-6.51zM1152.9 182h6.51v2h-6.51zM1152.9 149h6.51v2h-6.51zM1159.4 161h6.51v2h-6.51zM1159.4 143h6.51v2h-6.51zM1159.4 135h6.51v2h-6.51zM1159.4 125h6.51v2h-6.51zM1159.4 112h6.51v2h-6.51zM1159.4 150h6.51v2h-6.51zM1159.4 180h6.51v2h-6.51zM1159.4 198h6.51v2h-6.51zM1159.4 179h6.51v2h-6.51zM1159.4 146h6.51v2h-6.51zM1165.9 158h6.51v2h-6.51zM1165.9 142h6.51v2h-6.51zM1165.9 134h6.51v2h-6.51zM1165.9 123h6.51v2h-6.51zM1165.9 111h6.51v2h-6.51zM1165.9 124h6.51v2h-6.51zM1165.9 149h6.51v2h-6.51zM1165.9 178h6.51v2h-6.51zM1165.9 195h6.51v2h-6.51zM1165.9 175h6.51v2h-6.51zM1172.3 156h6.51v2h-6.51zM1172.3 140h6.51v2h-6.51zM1172.3 132h6.51v2h-6.51zM1172.3 121h6.51v2h-6.51zM1172.3 124h6.51v2h-6.51zM1172.3 137h6.51v2h-6.51zM1172.3 149h6.51v2h-6.51zM1172.3 192h6.51v2h-6.51zM1172.3 172h6.51v2h-6.51zM1172.3 173h6.51v2h-6.51zM1172.3 141h6.51v2h-6.51zM1178.8 138h6.51v2h-6.51zM1178.8 118h6.51v2h-6.51zM1178.8 123h6.51v2h-6.51zM1178.8 137h6.51v2h-6.51zM1178.8 149h6.51v2h-6.51zM1178.8 190h6.51v2h-6.51zM1178.8 175h6.51v2h-6.51zM1178.8 173h6.51v2h-6.51zM1178.8 170h6.51v2h-6.51zM1178.8 171h6.51v2h-6.51zM1178.8 140h6.51v2h-6.51zM1185.2 152h6.51v2h-6.51zM1185.2 137h6.51v2h-6.51zM1185.2 129h6.51v2h-6.51zM1185.2 124h6.51v2h-6.51zM1185.2 149h6.51v2h-6.51zM1185.2 174h6.51v2h-6.51zM1185.2 188h6.51v2h-6.51zM1185.2 173h6.51v2h-6.51zM1185.2 169h6.51v2h-6.51zM1185.2 138h6.51v2h-6.51zM1191.7 150h6.51v2h-6.51zM1191.7 135h6.51v2h-6.51zM1191.7 128h6.51v2h-6.51zM1191.7 116h6.51v2h-6.51zM1191.7 137h6.51v2h-6.51zM1191.7 185h6.51v2h-6.51zM1191.7 172h6.51v2h-6.51zM1191.7 168h6.51v2h-6.51zM1191.7 166h6.51v2h-6.51zM1191.7 136h6.51v2h-6.51zM1198.2 148h6.51v2h-6.51zM1198.2 134h6.51v2h-6.51zM1198.2 127h6.51v2h-6.51zM1198.2 116h6.51v2h-6.51zM1198.2 124h6.51v2h-6.51zM1198.2 149h6.51v2h-6.51zM1198.2 183h6.51v2h-6.51zM1198.2 168h6.51v2h-6.51zM1198.2 163h6.51v2h-6.51zM1204.6 147h6.51v2h-6.51zM1204.6 132h6.51v2h-6.51zM1204.6 125h6.51v2h-6.51zM1204.6 115h6.51v2h-6.51zM1204.6 123h6.51v2h-6.51zM1204.6 149h6.51v2h-6.51zM1204.6 170h6.51v2h-6.51zM1204.6 181h6.51v2h-6.51zM1204.6 167h6.51v2h-6.51zM1204.6 161h6.51v2h-6.51zM1204.6 133h6.51v2h-6.51zM1211.1 145h6.51v2h-6.51zM1211.1 131h6.51v2h-6.51zM1211.1 123h6.51v2h-6.51zM1211.1 113h6.51v2h-6.51zM1211.1 108h6.51v2h-6.51zM1211.1 121h6.51v2h-6.51zM1211.1 133h6.51v2h-6.51zM1211.1 143h6.51v2h-6.51zM1211.1 164h6.51v2h-6.51zM1211.1 169h6.51v2h-6.51zM1211.1 170h6.51v2h-6.51zM1211.1 159h6.51v2h-6.51zM1211.1 132h6.51v2h-6.51zM1217.5 148h6.51v2h-6.51zM1217.5 127h6.51v2h-6.51zM1217.5 109h6.51v2h-6.51zM1217.5 108h6.51v2h-6.51zM1217.5 120h6.51v2h-6.51zM1217.5 136h6.51v2h-6.51zM1217.5 160h6.51v2h-6.51zM1217.5 170h6.51v2h-6.51zM1217.5 130h6.51v2h-6.51zM1000.8 356h3.6v2h-3.6zM1007.3 354h3.6v2h-3.6zM1013.7 352h3.6v2h-3.6zM1013.7 351h3.6v2h-3.6zM1020.2 347h3.6v2h-3.6zM1026.6 343h3.6v2h-3.6zM1033.1 326h3.6v2h-3.6zM1039.6 331h3.6v2h-3.6zM1039.6 330h3.6v2h-3.6zM1046.0 323h3.6v2h-3.6zM1052.5 314h3.6v2h-3.6zM1052.5 286h3.6v2h-3.6zM1052.5 313h3.6v2h-3.6zM1058.9 304h3.6v2h-3.6zM1058.9 271h3.6v2h-3.6zM1058.9 260h3.6v2h-3.6zM1058.9 256h3.6v2h-3.6zM1058.9 273h3.6v2h-3.6zM1058.9 302h3.6v2h-3.6zM1065.4 292h3.6v2h-3.6zM1065.4 252h3.6v2h-3.6zM1065.4 235h3.6v2h-3.6zM1065.4 231h3.6v2h-3.6zM1065.4 257h3.6v2h-3.6zM1065.4 287h3.6v2h-3.6zM1071.9 281h3.6v2h-3.6zM1071.9 238h3.6v2h-3.6zM1071.9 218h3.6v2h-3.6zM1071.9 212h3.6v2h-3.6zM1071.9 240h3.6v2h-3.6zM1071.9 271h3.6v2h-3.6zM1071.9 359h3.6v2h-3.6zM1071.9 358h3.6v2h-3.6zM1071.9 357h3.6v2h-3.6zM1071.9 360h3.6v2h-3.6zM1078.3 344h3.6v2h-3.6zM1078.3 264h3.6v2h-3.6zM1078.3 220h3.6v2h-3.6zM1078.3 202h3.6v2h-3.6zM1078.3 197h3.6v2h-3.6zM1078.3 224h3.6v2h-3.6zM1078.3 254h3.6v2h-3.6zM1078.3 352h3.6v2h-3.6zM1078.3 345h3.6v2h-3.6zM1078.3 342h3.6v2h-3.6zM1078.3 343h3.6v2h-3.6zM1078.3 340h3.6v2h-3.6zM1078.3 346h3.6v2h-3.6zM1084.8 328h3.6v2h-3.6zM1084.8 245h3.6v2h-3.6zM1084.8 203h3.6v2h-3.6zM1084.8 188h3.6v2h-3.6zM1084.8 170h3.6v2h-3.6zM1084.8 155h3.6v2h-3.6zM1084.8 354h3.6v2h-3.6zM1084.8 332h3.6v2h-3.6zM1084.8 327h3.6v2h-3.6zM1084.8 330h3.6v2h-3.6zM1084.8 324h3.6v2h-3.6zM1084.8 323h3.6v2h-3.6zM1084.8 333h3.6v2h-3.6zM1091.2 310h3.6v2h-3.6zM1091.2 227h3.6v2h-3.6zM1091.2 175h3.6v2h-3.6zM1091.2 159h3.6v2h-3.6zM1091.2 142h3.6v2h-3.6zM1091.2 138h3.6v2h-3.6zM1091.2 135h3.6v2h-3.6zM1091.2 136h3.6v2h-3.6zM1091.2 133h3.6v2h-3.6zM1091.2 139h3.6v2h-3.6zM1091.2 140h3.6v2h-3.6zM1091.2 173h3.6v2h-3.6zM1091.2 201h3.6v2h-3.6zM1091.2 346h3.6v2h-3.6zM1091.2 318h3.6v2h-3.6zM1091.2 312h3.6v2h-3.6zM1091.2 319h3.6v2h-3.6zM1091.2 317h3.6v2h-3.6zM1091.2 305h3.6v2h-3.6zM1091.2 303h3.6v2h-3.6zM1097.7 290h3.6v2h-3.6zM1097.7 209h3.6v2h-3.6zM1097.7 164h3.6v2h-3.6zM1097.7 134h3.6v2h-3.6zM1097.7 130h3.6v2h-3.6zM1097.7 126h3.6v2h-3.6zM1097.7 127h3.6v2h-3.6zM1097.7 124h3.6v2h-3.6zM1097.7 131h3.6v2h-3.6zM1097.7 163h3.6v2h-3.6zM1097.7 191h3.6v2h-3.6zM1097.7 337h3.6v2h-3.6zM1097.7 301h3.6v2h-3.6zM1097.7 291h3.6v2h-3.6zM1097.7 298h3.6v2h-3.6zM1097.7 294h3.6v2h-3.6zM1097.7 282h3.6v2h-3.6zM1097.7 279h3.6v2h-3.6zM1097.7 297h3.6v2h-3.6zM1097.7 296h3.6v2h-3.6zM1104.2 258h3.6v2h-3.6zM1104.2 201h3.6v2h-3.6zM1104.2 166h3.6v2h-3.6zM1104.2 158h3.6v2h-3.6zM1104.2 143h3.6v2h-3.6zM1104.2 125h3.6v2h-3.6zM1104.2 121h3.6v2h-3.6zM1104.2 122h3.6v2h-3.6zM1104.2 119h3.6v2h-3.6zM1104.2 182h3.6v2h-3.6zM1104.2 203h3.6v2h-3.6zM1104.2 318h3.6v2h-3.6zM1104.2 306h3.6v2h-3.6zM1104.2 284h3.6v2h-3.6zM1104.2 272h3.6v2h-3.6zM1104.2 276h3.6v2h-3.6zM1104.2 268h3.6v2h-3.6zM1104.2 253h3.6v2h-3.6zM1104.2 249h3.6v2h-3.6zM1104.2 265h3.6v2h-3.6zM1110.6 235h3.6v2h-3.6zM1110.6 194h3.6v2h-3.6zM1110.6 163h3.6v2h-3.6zM1110.6 152h3.6v2h-3.6zM1110.6 139h3.6v2h-3.6zM1110.6 127h3.6v2h-3.6zM1110.6 117h3.6v2h-3.6zM1110.6 118h3.6v2h-3.6zM1110.6 124h3.6v2h-3.6zM1110.6 115h3.6v2h-3.6zM1110.6 138h3.6v2h-3.6zM1110.6 176h3.6v2h-3.6zM1110.6 296h3.6v2h-3.6zM1110.6 288h3.6v2h-3.6zM1110.6 264h3.6v2h-3.6zM1110.6 256h3.6v2h-3.6zM1110.6 247h3.6v2h-3.6zM1110.6 232h3.6v2h-3.6zM1110.6 229h3.6v2h-3.6zM1110.6 246h3.6v2h-3.6zM1110.6 243h3.6v2h-3.6zM1117.1 219h3.6v2h-3.6zM1117.1 180h3.6v2h-3.6zM1117.1 158h3.6v2h-3.6zM1117.1 148h3.6v2h-3.6zM1117.1 135h3.6v2h-3.6zM1117.1 123h3.6v2h-3.6zM1117.1 116h3.6v2h-3.6zM1117.1 113h3.6v2h-3.6zM1117.1 120h3.6v2h-3.6zM1117.1 112h3.6v2h-3.6zM1117.1 134h3.6v2h-3.6zM1117.1 147h3.6v2h-3.6zM1117.1 170h3.6v2h-3.6zM1117.1 280h3.6v2h-3.6zM1117.1 270h3.6v2h-3.6zM1117.1 242h3.6v2h-3.6zM1117.1 217h3.6v2h-3.6zM1123.5 209h3.6v2h-3.6zM1123.5 173h3.6v2h-3.6zM1123.5 152h3.6v2h-3.6zM1123.5 142h3.6v2h-3.6zM1123.5 131h3.6v2h-3.6zM1123.5 109h3.6v2h-3.6zM1123.5 108h3.6v2h-3.6zM1123.5 130h3.6v2h-3.6zM1123.5 165h3.6v2h-3.6zM1123.5 175h3.6v2h-3.6zM1123.5 264h3.6v2h-3.6zM1123.5 253h3.6v2h-3.6zM1123.5 223h3.6v2h-3.6zM1123.5 204h3.6v2h-3.6zM1123.5 205h3.6v2h-3.6zM1123.5 221h3.6v2h-3.6zM1130.0 201h3.6v2h-3.6zM1130.0 166h3.6v2h-3.6zM1130.0 149h3.6v2h-3.6zM1130.0 139h3.6v2h-3.6zM1130.0 106h3.6v2h-3.6zM1130.0 127h3.6v2h-3.6zM1130.0 138h3.6v2h-3.6zM1130.0 161h3.6v2h-3.6zM1130.0 247h3.6v2h-3.6zM1130.0 238h3.6v2h-3.6zM1130.0 211h3.6v2h-3.6zM1130.0 212h3.6v2h-3.6zM1130.0 196h3.6v2h-3.6zM1130.0 197h3.6v2h-3.6zM1130.0 210h3.6v2h-3.6zM1130.0 117h3.6v2h-3.6zM1136.5 192h3.6v2h-3.6zM1136.5 146h3.6v2h-3.6zM1136.5 114h3.6v2h-3.6zM1136.5 124h3.6v2h-3.6zM1136.5 164h3.6v2h-3.6zM1136.5 232h3.6v2h-3.6zM1136.5 225h3.6v2h-3.6zM1136.5 207h3.6v2h-3.6zM1136.5 200h3.6v2h-3.6zM1136.5 203h3.6v2h-3.6zM1136.5 187h3.6v2h-3.6zM1136.5 188h3.6v2h-3.6zM1142.9 184h3.6v2h-3.6zM1142.9 156h3.6v2h-3.6zM1142.9 137h3.6v2h-3.6zM1142.9 125h3.6v2h-3.6zM1142.9 121h3.6v2h-3.6zM1142.9 132h3.6v2h-3.6zM1142.9 154h3.6v2h-3.6zM1142.9 159h3.6v2h-3.6zM1142.9 221h3.6v2h-3.6zM1142.9 199h3.6v2h-3.6zM1142.9 179h3.6v2h-3.6zM1142.9 180h3.6v2h-3.6zM1142.9 197h3.6v2h-3.6zM1142.9 193h3.6v2h-3.6zM1149.4 177h3.6v2h-3.6zM1149.4 140h3.6v2h-3.6zM1149.4 135h3.6v2h-3.6zM1149.4 122h3.6v2h-3.6zM1149.4 119h3.6v2h-3.6zM1149.4 151h3.6v2h-3.6zM1149.4 157h3.6v2h-3.6zM1149.4 214h3.6v2h-3.6zM1149.4 212h3.6v2h-3.6zM1149.4 174h3.6v2h-3.6zM1155.8 173h3.6v2h-3.6zM1155.8 138h3.6v2h-3.6zM1155.8 117h3.6v2h-3.6zM1155.8 118h3.6v2h-3.6zM1155.8 131h3.6v2h-3.6zM1155.8 145h3.6v2h-3.6zM1155.8 156h3.6v2h-3.6zM1155.8 205h3.6v2h-3.6zM1155.8 207h3.6v2h-3.6zM1155.8 170h3.6v2h-3.6zM1155.8 171h3.6v2h-3.6zM1162.3 147h3.6v2h-3.6zM1162.3 137h3.6v2h-3.6zM1162.3 115h3.6v2h-3.6zM1162.3 155h3.6v2h-3.6zM1162.3 202h3.6v2h-3.6zM1162.3 204h3.6v2h-3.6zM1162.3 174h3.6v2h-3.6zM1162.3 167h3.6v2h-3.6zM1162.3 108h3.6v2h-3.6zM1168.8 135h3.6v2h-3.6zM1168.8 129h3.6v2h-3.6zM1168.8 113h3.6v2h-3.6zM1168.8 154h3.6v2h-3.6zM1168.8 198h3.6v2h-3.6zM1168.8 201h3.6v2h-3.6zM1168.8 171h3.6v2h-3.6zM1168.8 164h3.6v2h-3.6zM1168.8 165h3.6v2h-3.6zM1168.8 176h3.6v2h-3.6zM1175.2 133h3.6v2h-3.6zM1175.2 127h3.6v2h-3.6zM1175.2 130h3.6v2h-3.6zM1175.2 195h3.6v2h-3.6zM1175.2 168h3.6v2h-3.6zM1175.2 178h3.6v2h-3.6zM1175.2 162h3.6v2h-3.6zM1175.2 163h3.6v2h-3.6zM1175.2 174h3.6v2h-3.6zM1181.7 141h3.6v2h-3.6zM1181.7 132h3.6v2h-3.6zM1181.7 125h3.6v2h-3.6zM1181.7 131h3.6v2h-3.6zM1181.7 155h3.6v2h-3.6zM1181.7 193h3.6v2h-3.6zM1181.7 161h3.6v2h-3.6zM1181.7 160h3.6v2h-3.6zM1181.7 176h3.6v2h-3.6zM1181.7 172h3.6v2h-3.6zM1188.1 139h3.6v2h-3.6zM1188.1 156h3.6v2h-3.6zM1188.1 190h3.6v2h-3.6zM1188.1 167h3.6v2h-3.6zM1188.1 159h3.6v2h-3.6zM1188.1 158h3.6v2h-3.6zM1188.1 170h3.6v2h-3.6zM1194.6 130h3.6v2h-3.6zM1194.6 123h3.6v2h-3.6zM1194.6 155h3.6v2h-3.6zM1194.6 188h3.6v2h-3.6zM1194.6 175h3.6v2h-3.6zM1194.6 157h3.6v2h-3.6zM1194.6 171h3.6v2h-3.6zM1201.1 136h3.6v2h-3.6zM1201.1 128h3.6v2h-3.6zM1201.1 122h3.6v2h-3.6zM1201.1 142h3.6v2h-3.6zM1201.1 184h3.6v2h-3.6zM1201.1 174h3.6v2h-3.6zM1201.1 165h3.6v2h-3.6zM1201.1 156h3.6v2h-3.6zM1201.1 153h3.6v2h-3.6zM1201.1 169h3.6v2h-3.6zM1207.5 134h3.6v2h-3.6zM1207.5 127h3.6v2h-3.6zM1207.5 120h3.6v2h-3.6zM1207.5 138h3.6v2h-3.6zM1207.5 148h3.6v2h-3.6zM1207.5 172h3.6v2h-3.6zM1207.5 151h3.6v2h-3.6zM1207.5 163h3.6v2h-3.6zM1214.0 158h3.6v2h-3.6zM1214.0 137h3.6v2h-3.6zM1214.0 116h3.6v2h-3.6zM1214.0 114h3.6v2h-3.6zM1214.0 126h3.6v2h-3.6zM1214.0 174h3.6v2h-3.6zM1214.0 166h3.6v2h-3.6zM1214.0 162h3.6v2h-3.6zM1214.0 154h3.6v2h-3.6z"/>
<path style="mix-blend-mode:screen" fill="#2cf02c" d="M901.0 362.6h6.51v2.8h-6.51zM907.5 362.6h6.51v2.8h-6.51zM913.9 362.6h6.51v2.8h-6.51zM920.4 362.6h6.51v2.8h-6.51zM926.8 362.6h6.51v2.8h-6.51zM933.3 362.6h6.51v2.8h-6.51zM939.8 362.6h6.51v2.8h-6.51zM946.2 362.6h6.51v2.8h-6.51zM952.7 362.6h6.51v2.8h-6.51zM959.1 362.6h6.51v2.8h-6.51zM959.1 361.6h6.51v2.8h-6.51zM965.6 362.6h6.51v2.8h-6.51zM965.6 361.6h6.51v2.8h-6.51zM965.6 360.6h6.51v2.8h-6.51zM972.1 362.6h6.51v2.8h-6.51zM972.1 361.6h6.51v2.8h-6.51zM972.1 360.6h6.51v2.8h-6.51zM972.1 359.6h6.51v2.8h-6.51zM978.5 362.6h6.51v2.8h-6.51zM978.5 360.6h6.51v2.8h-6.51zM978.5 359.6h6.51v2.8h-6.51zM978.5 358.1h6.51v2.8h-6.51zM985.0 362.6h6.51v2.8h-6.51zM985.0 359.6h6.51v2.8h-6.51zM985.0 358.1h6.51v2.8h-6.51zM985.0 357.1h6.51v2.8h-6.51zM985.0 356.1h6.51v2.8h-6.51zM991.4 362.6h6.51v2.8h-6.51zM991.4 358.1h6.51v2.8h-6.51zM991.4 356.1h6.51v2.8h-6.51zM991.4 355.1h6.51v2.8h-6.51zM991.4 354.1h6.51v2.8h-6.51zM991.4 353.1h6.51v2.8h-6.51zM997.9 362.6h6.51v2.8h-6.51zM997.9 357.1h6.51v2.8h-6.51zM997.9 354.1h6.51v2.8h-6.51zM997.9 353.1h6.51v2.8h-6.51zM997.9 351.1h6.51v2.8h-6.51zM997.9 350.1h6.51v2.8h-6.51zM997.9 352.1h6.51v2.8h-6.51zM1004.4 362.6h6.51v2.8h-6.51zM1004.4 355.1h6.51v2.8h-6.51zM1004.4 351.1h6.51v2.8h-6.51zM1004.4 350.1h6.51v2.8h-6.51zM1004.4 347.1h6.51v2.8h-6.51zM1004.4 346.1h6.51v2.8h-6.51zM1004.4 348.1h6.51v2.8h-6.51zM1004.4 349.1h6.51v2.8h-6.51zM1010.8 362.6h6.51v2.8h-6.51zM1010.8 353.1h6.51v2.8h-6.51zM1010.8 348.1h6.51v2.8h-6.51zM1010.8 347.1h6.51v2.8h-6.51zM1010.8 344.1h6.51v2.8h-6.51zM1010.8 342.1h6.51v2.8h-6.51zM1010.8 345.1h6.51v2.8h-6.51zM1010.8 346.1h6.51v2.8h-6.51zM1010.8 349.1h6.51v2.8h-6.51zM1017.3 362.6h6.51v2.8h-6.51zM1017.3 351.1h6.51v2.8h-6.51zM1017.3 344.1h6.51v2.8h-6.51zM1017.3 342.1h6.51v2.8h-6.51zM1017.3 339.1h6.51v2.8h-6.51zM1017.3 336.6h6.51v2.8h-6.51zM1017.3 340.1h6.51v2.8h-6.51zM1017.3 345.1h6.51v2.8h-6.51zM1017.3 350.1h6.51v2.8h-6.51zM1017.3 335.6h6.51v2.8h-6.51zM1023.7 362.6h6.51v2.8h-6.51zM1023.7 348.1h6.51v2.8h-6.51zM1023.7 340.1h6.51v2.8h-6.51zM1023.7 337.6h6.51v2.8h-6.51zM1023.7 332.6h6.51v2.8h-6.51zM1023.7 329.6h6.51v2.8h-6.51zM1023.7 333.6h6.51v2.8h-6.51zM1023.7 336.6h6.51v2.8h-6.51zM1023.7 347.1h6.51v2.8h-6.51zM1030.2 362.6h6.51v2.8h-6.51zM1030.2 343.1h6.51v2.8h-6.51zM1030.2 332.6h6.51v2.8h-6.51zM1030.2 329.6h6.51v2.8h-6.51zM1030.2 323.6h6.51v2.8h-6.51zM1030.2 319.6h6.51v2.8h-6.51zM1030.2 324.6h6.51v2.8h-6.51zM1030.2 328.6h6.51v2.8h-6.51zM1030.2 333.6h6.51v2.8h-6.51zM1036.7 362.6h6.51v2.8h-6.51zM1036.7 337.6h6.51v2.8h-6.51zM1036.7 324.6h6.51v2.8h-6.51zM1036.7 320.6h6.51v2.8h-6.51zM1036.7 312.1h6.51v2.8h-6.51zM1036.7 307.1h6.51v2.8h-6.51zM1036.7 314.1h6.51v2.8h-6.51zM1036.7 318.6h6.51v2.8h-6.51zM1036.7 325.6h6.51v2.8h-6.51zM1043.1 362.6h6.51v2.8h-6.51zM1043.1 330.6h6.51v2.8h-6.51zM1043.1 312.1h6.51v2.8h-6.51zM1043.1 307.1h6.51v2.8h-6.51zM1043.1 296.6h6.51v2.8h-6.51zM1043.1 290.6h6.51v2.8h-6.51zM1043.1 300.1h6.51v2.8h-6.51zM1043.1 305.1h6.51v2.8h-6.51zM1043.1 314.1h6.51v2.8h-6.51zM1043.1 329.6h6.51v2.8h-6.51zM1049.6 362.6h6.51v2.8h-6.51zM1049.6 322.6h6.51v2.8h-6.51zM1049.6 300.1h6.51v2.8h-6.51zM1049.6 292.6h6.51v2.8h-6.51zM1049.6 280.6h6.51v2.8h-6.51zM1049.6 272.1h6.51v2.8h-6.51zM1049.6 283.6h6.51v2.8h-6.51zM1049.6 290.6h6.51v2.8h-6.51zM1049.6 302.1h6.51v2.8h-6.51zM1049.6 321.6h6.51v2.8h-6.51zM1056.0 362.6h6.51v2.8h-6.51zM1056.0 313.1h6.51v2.8h-6.51zM1056.0 285.6h6.51v2.8h-6.51zM1056.0 277.6h6.51v2.8h-6.51zM1056.0 262.1h6.51v2.8h-6.51zM1056.0 251.6h6.51v2.8h-6.51zM1056.0 265.1h6.51v2.8h-6.51zM1056.0 274.1h6.51v2.8h-6.51zM1056.0 287.6h6.51v2.8h-6.51zM1056.0 312.1h6.51v2.8h-6.51zM1062.5 362.6h6.51v2.8h-6.51zM1062.5 304.1h6.51v2.8h-6.51zM1062.5 270.1h6.51v2.8h-6.51zM1062.5 260.1h6.51v2.8h-6.51zM1062.5 241.6h6.51v2.8h-6.51zM1062.5 229.1h6.51v2.8h-6.51zM1062.5 245.6h6.51v2.8h-6.51zM1062.5 255.6h6.51v2.8h-6.51zM1062.5 272.1h6.51v2.8h-6.51zM1062.5 302.1h6.51v2.8h-6.51zM1062.5 226.1h6.51v2.8h-6.51zM1069.0 362.6h6.51v2.8h-6.51zM1069.0 291.6h6.51v2.8h-6.51zM1069.0 251.6h6.51v2.8h-6.51zM1069.0 234.1h6.51v2.8h-6.51zM1069.0 219.1h6.51v2.8h-6.51zM1069.0 200.6h6.51v2.8h-6.51zM1069.0 196.6h6.51v2.8h-6.51zM1069.0 205.6h6.51v2.8h-6.51zM1069.0 197.6h6.51v2.8h-6.51zM1069.0 198.6h6.51v2.8h-6.51zM1069.0 195.6h6.51v2.8h-6.51zM1069.0 202.6h6.51v2.8h-6.51zM1069.0 204.6h6.51v2.8h-6.51zM1069.0 220.1h6.51v2.8h-6.51zM1069.0 230.1h6.51v2.8h-6.51zM1069.0 257.1h6.51v2.8h-6.51zM1069.0 286.6h6.51v2.8h-6.51zM1075.4 362.6h6.51v2.8h-6.51zM1075.4 280.6h6.51v2.8h-6.51zM1075.4 237.6h6.51v2.8h-6.51zM1075.4 218.1h6.51v2.8h-6.51zM1075.4 199.6h6.51v2.8h-6.51zM1075.4 180.1h6.51v2.8h-6.51zM1075.4 175.1h6.51v2.8h-6.51zM1075.4 185.1h6.51v2.8h-6.51zM1075.4 177.1h6.51v2.8h-6.51zM1075.4 178.1h6.51v2.8h-6.51zM1075.4 184.1h6.51v2.8h-6.51zM1075.4 181.1h6.51v2.8h-6.51zM1075.4 182.1h6.51v2.8h-6.51zM1075.4 211.6h6.51v2.8h-6.51zM1075.4 239.6h6.51v2.8h-6.51zM1075.4 270.1h6.51v2.8h-6.51zM1075.4 360.6h6.51v2.8h-6.51zM1075.4 358.1h6.51v2.8h-6.51zM1075.4 357.1h6.51v2.8h-6.51zM1075.4 356.1h6.51v2.8h-6.51zM1075.4 359.6h6.51v2.8h-6.51zM1075.4 361.6h6.51v2.8h-6.51zM1075.4 186.1h6.51v2.8h-6.51zM1081.9 344.1h6.51v2.8h-6.51zM1081.9 264.1h6.51v2.8h-6.51zM1081.9 220.1h6.51v2.8h-6.51zM1081.9 201.6h6.51v2.8h-6.51zM1081.9 183.1h6.51v2.8h-6.51zM1081.9 164.6h6.51v2.8h-6.51zM1081.9 159.6h6.51v2.8h-6.51zM1081.9 168.6h6.51v2.8h-6.51zM1081.9 160.6h6.51v2.8h-6.51zM1081.9 167.6h6.51v2.8h-6.51zM1081.9 157.6h6.51v2.8h-6.51zM1081.9 166.6h6.51v2.8h-6.51zM1081.9 196.6h6.51v2.8h-6.51zM1081.9 224.1h6.51v2.8h-6.51zM1081.9 253.6h6.51v2.8h-6.51zM1081.9 362.6h6.51v2.8h-6.51zM1081.9 351.1h6.51v2.8h-6.51zM1081.9 345.1h6.51v2.8h-6.51zM1081.9 342.1h6.51v2.8h-6.51zM1081.9 343.1h6.51v2.8h-6.51zM1081.9 340.1h6.51v2.8h-6.51zM1081.9 346.1h6.51v2.8h-6.51zM1081.9 171.6h6.51v2.8h-6.51zM1088.3 327.6h6.51v2.8h-6.51zM1088.3 244.6h6.51v2.8h-6.51zM1088.3 202.6h6.51v2.8h-6.51zM1088.3 187.1h6.51v2.8h-6.51zM1088.3 169.6h6.51v2.8h-6.51zM1088.3 151.1h6.51v2.8h-6.51zM1088.3 146.1h6.51v2.8h-6.51zM1088.3 154.6h6.51v2.8h-6.51zM1088.3 145.1h6.51v2.8h-6.51zM1088.3 153.1h6.51v2.8h-6.51zM1088.3 143.1h6.51v2.8h-6.51zM1088.3 150.1h6.51v2.8h-6.51zM1088.3 152.1h6.51v2.8h-6.51zM1088.3 168.6h6.51v2.8h-6.51zM1088.3 183.1h6.51v2.8h-6.51zM1088.3 210.6h6.51v2.8h-6.51zM1088.3 238.6h6.51v2.8h-6.51zM1088.3 353.1h6.51v2.8h-6.51zM1088.3 341.1h6.51v2.8h-6.51zM1088.3 331.6h6.51v2.8h-6.51zM1088.3 326.6h6.51v2.8h-6.51zM1088.3 329.6h6.51v2.8h-6.51zM1088.3 323.6h6.51v2.8h-6.51zM1088.3 322.6h6.51v2.8h-6.51zM1088.3 332.6h6.51v2.8h-6.51zM1088.3 159.6h6.51v2.8h-6.51zM1094.8 309.1h6.51v2.8h-6.51zM1094.8 226.1h6.51v2.8h-6.51zM1094.8 187.1h6.51v2.8h-6.51zM1094.8 175.1h6.51v2.8h-6.51zM1094.8 158.6h6.51v2.8h-6.51zM1094.8 142.1h6.51v2.8h-6.51zM1094.8 138.1h6.51v2.8h-6.51zM1094.8 145.1h6.51v2.8h-6.51zM1094.8 135.1h6.51v2.8h-6.51zM1094.8 136.1h6.51v2.8h-6.51zM1094.8 132.6h6.51v2.8h-6.51zM1094.8 139.1h6.51v2.8h-6.51zM1094.8 140.1h6.51v2.8h-6.51zM1094.8 172.6h6.51v2.8h-6.51zM1094.8 200.6h6.51v2.8h-6.51zM1094.8 225.1h6.51v2.8h-6.51zM1094.8 346.1h6.51v2.8h-6.51zM1094.8 329.6h6.51v2.8h-6.51zM1094.8 317.1h6.51v2.8h-6.51zM1094.8 311.1h6.51v2.8h-6.51zM1094.8 318.6h6.51v2.8h-6.51zM1094.8 316.1h6.51v2.8h-6.51zM1094.8 305.1h6.51v2.8h-6.51zM1094.8 303.1h6.51v2.8h-6.51zM1094.8 149.1h6.51v2.8h-6.51zM1101.3 289.6h6.51v2.8h-6.51zM1101.3 208.6h6.51v2.8h-6.51zM1101.3 172.6h6.51v2.8h-6.51zM1101.3 163.6h6.51v2.8h-6.51zM1101.3 149.1h6.51v2.8h-6.51zM1101.3 134.1h6.51v2.8h-6.51zM1101.3 129.6h6.51v2.8h-6.51zM1101.3 136.1h6.51v2.8h-6.51zM1101.3 125.6h6.51v2.8h-6.51zM1101.3 126.6h6.51v2.8h-6.51zM1101.3 132.6h6.51v2.8h-6.51zM1101.3 123.6h6.51v2.8h-6.51zM1101.3 130.6h6.51v2.8h-6.51zM1101.3 162.6h6.51v2.8h-6.51zM1101.3 190.1h6.51v2.8h-6.51zM1101.3 212.6h6.51v2.8h-6.51zM1101.3 336.6h6.51v2.8h-6.51zM1101.3 318.6h6.51v2.8h-6.51zM1101.3 301.1h6.51v2.8h-6.51zM1101.3 290.6h6.51v2.8h-6.51zM1101.3 298.1h6.51v2.8h-6.51zM1101.3 293.6h6.51v2.8h-6.51zM1101.3 281.6h6.51v2.8h-6.51zM1101.3 278.6h6.51v2.8h-6.51zM1101.3 296.6h6.51v2.8h-6.51zM1101.3 295.6h6.51v2.8h-6.51zM1101.3 140.1h6.51v2.8h-6.51zM1107.7 258.1h6.51v2.8h-6.51zM1107.7 200.6h6.51v2.8h-6.51zM1107.7 165.6h6.51v2.8h-6.51zM1107.7 157.6h6.51v2.8h-6.51zM1107.7 143.1h6.51v2.8h-6.51zM1107.7 128.6h6.51v2.8h-6.51zM1107.7 124.6h6.51v2.8h-6.51zM1107.7 130.6h6.51v2.8h-6.51zM1107.7 120.6h6.51v2.8h-6.51zM1107.7 121.6h6.51v2.8h-6.51zM1107.7 127.6h6.51v2.8h-6.51zM1107.7 118.6h6.51v2.8h-6.51zM1107.7 125.6h6.51v2.8h-6.51zM1107.7 156.6h6.51v2.8h-6.51zM1107.7 182.1h6.51v2.8h-6.51zM1107.7 202.6h6.51v2.8h-6.51zM1107.7 317.1h6.51v2.8h-6.51zM1107.7 306.1h6.51v2.8h-6.51zM1107.7 283.6h6.51v2.8h-6.51zM1107.7 271.1h6.51v2.8h-6.51zM1107.7 275.1h6.51v2.8h-6.51zM1107.7 267.1h6.51v2.8h-6.51zM1107.7 252.6h6.51v2.8h-6.51zM1107.7 248.6h6.51v2.8h-6.51zM1107.7 265.1h6.51v2.8h-6.51zM1107.7 134.1h6.51v2.8h-6.51zM1114.2 234.1h6.51v2.8h-6.51zM1114.2 193.1h6.51v2.8h-6.51zM1114.2 162.6h6.51v2.8h-6.51zM1114.2 151.1h6.51v2.8h-6.51zM1114.2 139.1h6.51v2.8h-6.51zM1114.2 124.6h6.51v2.8h-6.51zM1114.2 120.6h6.51v2.8h-6.51zM1114.2 126.6h6.51v2.8h-6.51zM1114.2 116.6h6.51v2.8h-6.51zM1114.2 117.6h6.51v2.8h-6.51zM1114.2 123.6h6.51v2.8h-6.51zM1114.2 114.6h6.51v2.8h-6.51zM1114.2 121.6h6.51v2.8h-6.51zM1114.2 138.1h6.51v2.8h-6.51zM1114.2 176.1h6.51v2.8h-6.51zM1114.2 192.1h6.51v2.8h-6.51zM1114.2 295.6h6.51v2.8h-6.51zM1114.2 287.6h6.51v2.8h-6.51zM1114.2 264.1h6.51v2.8h-6.51zM1114.2 252.6h6.51v2.8h-6.51zM1114.2 255.6h6.51v2.8h-6.51zM1114.2 246.6h6.51v2.8h-6.51zM1114.2 231.1h6.51v2.8h-6.51zM1114.2 228.1h6.51v2.8h-6.51zM1114.2 245.6h6.51v2.8h-6.51zM1114.2 242.6h6.51v2.8h-6.51zM1120.6 219.1h6.51v2.8h-6.51zM1120.6 180.1h6.51v2.8h-6.51zM1120.6 157.6h6.51v2.8h-6.51zM1120.6 147.1h6.51v2.8h-6.51zM1120.6 135.1h6.51v2.8h-6.51zM1120.6 122.6h6.51v2.8h-6.51zM1120.6 117.6h6.51v2.8h-6.51zM1120.6 124.6h6.51v2.8h-6.51zM1120.6 114.6h6.51v2.8h-6.51zM1120.6 115.6h6.51v2.8h-6.51zM1120.6 121.6h6.51v2.8h-6.51zM1120.6 112.1h6.51v2.8h-6.51zM1120.6 118.6h6.51v2.8h-6.51zM1120.6 119.6h6.51v2.8h-6.51zM1120.6 111.1h6.51v2.8h-6.51zM1120.6 120.6h6.51v2.8h-6.51zM1120.6 134.1h6.51v2.8h-6.51zM1120.6 146.1h6.51v2.8h-6.51zM1120.6 169.6h6.51v2.8h-6.51zM1120.6 184.1h6.51v2.8h-6.51zM1120.6 279.6h6.51v2.8h-6.51zM1120.6 269.1h6.51v2.8h-6.51zM1120.6 246.6h6.51v2.8h-6.51zM1120.6 236.6h6.51v2.8h-6.51zM1120.6 241.6h6.51v2.8h-6.51zM1120.6 233.1h6.51v2.8h-6.51zM1120.6 217.1h6.51v2.8h-6.51zM1120.6 213.6h6.51v2.8h-6.51zM1120.6 230.1h6.51v2.8h-6.51zM1120.6 227.1h6.51v2.8h-6.51zM1120.6 123.6h6.51v2.8h-6.51zM1127.1 208.6h6.51v2.8h-6.51zM1127.1 172.6h6.51v2.8h-6.51zM1127.1 151.1h6.51v2.8h-6.51zM1127.1 142.1h6.51v2.8h-6.51zM1127.1 130.6h6.51v2.8h-6.51zM1127.1 118.6h6.51v2.8h-6.51zM1127.1 114.6h6.51v2.8h-6.51zM1127.1 120.6h6.51v2.8h-6.51zM1127.1 110.1h6.51v2.8h-6.51zM1127.1 111.1h6.51v2.8h-6.51zM1127.1 117.6h6.51v2.8h-6.51zM1127.1 108.1h6.51v2.8h-6.51zM1127.1 115.6h6.51v2.8h-6.51zM1127.1 107.1h6.51v2.8h-6.51zM1127.1 129.6h6.51v2.8h-6.51zM1127.1 164.6h6.51v2.8h-6.51zM1127.1 175.1h6.51v2.8h-6.51zM1127.1 264.1h6.51v2.8h-6.51zM1127.1 252.6h6.51v2.8h-6.51zM1127.1 231.1h6.51v2.8h-6.51zM1127.1 223.1h6.51v2.8h-6.51zM1127.1 229.1h6.51v2.8h-6.51zM1127.1 222.1h6.51v2.8h-6.51zM1127.1 203.6h6.51v2.8h-6.51zM1127.1 204.6h6.51v2.8h-6.51zM1127.1 221.1h6.51v2.8h-6.51zM1127.1 217.1h6.51v2.8h-6.51zM1127.1 119.6h6.51v2.8h-6.51zM1133.6 200.6h6.51v2.8h-6.51zM1133.6 165.6h6.51v2.8h-6.51zM1133.6 148.1h6.51v2.8h-6.51zM1133.6 139.1h6.51v2.8h-6.51zM1133.6 129.6h6.51v2.8h-6.51zM1133.6 115.6h6.51v2.8h-6.51zM1133.6 111.1h6.51v2.8h-6.51zM1133.6 117.6h6.51v2.8h-6.51zM1133.6 107.1h6.51v2.8h-6.51zM1133.6 108.1h6.51v2.8h-6.51zM1133.6 105.1h6.51v2.8h-6.51zM1133.6 112.1h6.51v2.8h-6.51zM1133.6 114.6h6.51v2.8h-6.51zM1133.6 126.6h6.51v2.8h-6.51zM1133.6 138.1h6.51v2.8h-6.51zM1133.6 160.6h6.51v2.8h-6.51zM1133.6 168.6h6.51v2.8h-6.51zM1133.6 246.6h6.51v2.8h-6.51zM1133.6 237.6h6.51v2.8h-6.51zM1133.6 218.1h6.51v2.8h-6.51zM1133.6 210.6h6.51v2.8h-6.51zM1133.6 211.6h6.51v2.8h-6.51zM1133.6 195.6h6.51v2.8h-6.51zM1133.6 196.6h6.51v2.8h-6.51zM1133.6 212.6h6.51v2.8h-6.51zM1133.6 209.6h6.51v2.8h-6.51zM1133.6 116.6h6.51v2.8h-6.51zM1140.0 191.1h6.51v2.8h-6.51zM1140.0 160.6h6.51v2.8h-6.51zM1140.0 145.1h6.51v2.8h-6.51zM1140.0 138.1h6.51v2.8h-6.51zM1140.0 126.6h6.51v2.8h-6.51zM1140.0 113.6h6.51v2.8h-6.51zM1140.0 108.1h6.51v2.8h-6.51zM1140.0 115.6h6.51v2.8h-6.51zM1140.0 105.1h6.51v2.8h-6.51zM1140.0 106.1h6.51v2.8h-6.51zM1140.0 112.1h6.51v2.8h-6.51zM1140.0 103.1h6.51v2.8h-6.51zM1140.0 109.1h6.51v2.8h-6.51zM1140.0 110.1h6.51v2.8h-6.51zM1140.0 102.1h6.51v2.8h-6.51zM1140.0 123.6h6.51v2.8h-6.51zM1140.0 135.1h6.51v2.8h-6.51zM1140.0 156.6h6.51v2.8h-6.51zM1140.0 163.6h6.51v2.8h-6.51zM1140.0 231.1h6.51v2.8h-6.51zM1140.0 225.1h6.51v2.8h-6.51zM1140.0 206.6h6.51v2.8h-6.51zM1140.0 199.6h6.51v2.8h-6.51zM1140.0 207.6h6.51v2.8h-6.51zM1140.0 202.6h6.51v2.8h-6.51zM1140.0 186.1h6.51v2.8h-6.51zM1140.0 187.1h6.51v2.8h-6.51zM1140.0 203.6h6.51v2.8h-6.51zM1140.0 200.6h6.51v2.8h-6.51zM1140.0 114.6h6.51v2.8h-6.51zM1146.5 184.1h6.51v2.8h-6.51zM1146.5 155.6h6.51v2.8h-6.51zM1146.5 142.1h6.51v2.8h-6.51zM1146.5 137.1h6.51v2.8h-6.51zM1146.5 124.6h6.51v2.8h-6.51zM1146.5 110.1h6.51v2.8h-6.51zM1146.5 106.1h6.51v2.8h-6.51zM1146.5 112.1h6.51v2.8h-6.51zM1146.5 102.1h6.51v2.8h-6.51zM1146.5 103.1h6.51v2.8h-6.51zM1146.5 109.1h6.51v2.8h-6.51zM1146.5 101.1h6.51v2.8h-6.51zM1146.5 107.1h6.51v2.8h-6.51zM1146.5 120.6h6.51v2.8h-6.51zM1146.5 131.6h6.51v2.8h-6.51zM1146.5 153.1h6.51v2.8h-6.51zM1146.5 158.6h6.51v2.8h-6.51zM1146.5 221.1h6.51v2.8h-6.51zM1146.5 216.1h6.51v2.8h-6.51zM1146.5 198.6h6.51v2.8h-6.51zM1146.5 190.1h6.51v2.8h-6.51zM1146.5 194.1h6.51v2.8h-6.51zM1146.5 179.1h6.51v2.8h-6.51zM1146.5 180.1h6.51v2.8h-6.51zM1146.5 196.6h6.51v2.8h-6.51zM1146.5 192.1h6.51v2.8h-6.51zM1152.9 177.1h6.51v2.8h-6.51zM1152.9 152.1h6.51v2.8h-6.51zM1152.9 140.1h6.51v2.8h-6.51zM1152.9 135.1h6.51v2.8h-6.51zM1152.9 121.6h6.51v2.8h-6.51zM1152.9 108.1h6.51v2.8h-6.51zM1152.9 104.1h6.51v2.8h-6.51zM1152.9 110.1h6.51v2.8h-6.51zM1152.9 101.1h6.51v2.8h-6.51zM1152.9 105.1h6.51v2.8h-6.51zM1152.9 107.1h6.51v2.8h-6.51zM1152.9 118.6h6.51v2.8h-6.51zM1152.9 131.6h6.51v2.8h-6.51zM1152.9 150.1h6.51v2.8h-6.51zM1152.9 156.6h6.51v2.8h-6.51zM1152.9 213.6h6.51v2.8h-6.51zM1152.9 211.6h6.51v2.8h-6.51zM1152.9 193.1h6.51v2.8h-6.51zM1152.9 184.1h6.51v2.8h-6.51zM1152.9 192.1h6.51v2.8h-6.51zM1152.9 189.1h6.51v2.8h-6.51zM1152.9 173.6h6.51v2.8h-6.51zM1152.9 190.1h6.51v2.8h-6.51zM1152.9 186.1h6.51v2.8h-6.51zM1152.9 111.1h6.51v2.8h-6.51zM1159.4 172.6h6.51v2.8h-6.51zM1159.4 148.1h6.51v2.8h-6.51zM1159.4 138.1h6.51v2.8h-6.51zM1159.4 131.6h6.51v2.8h-6.51zM1159.4 116.6h6.51v2.8h-6.51zM1159.4 106.1h6.51v2.8h-6.51zM1159.4 102.1h6.51v2.8h-6.51zM1159.4 109.1h6.51v2.8h-6.51zM1159.4 101.1h6.51v2.8h-6.51zM1159.4 117.6h6.51v2.8h-6.51zM1159.4 130.6h6.51v2.8h-6.51zM1159.4 144.1h6.51v2.8h-6.51zM1159.4 155.6h6.51v2.8h-6.51zM1159.4 204.6h6.51v2.8h-6.51zM1159.4 206.6h6.51v2.8h-6.51zM1159.4 189.1h6.51v2.8h-6.51zM1159.4 177.1h6.51v2.8h-6.51zM1159.4 186.1h6.51v2.8h-6.51zM1159.4 185.1h6.51v2.8h-6.51zM1159.4 169.6h6.51v2.8h-6.51zM1159.4 170.6h6.51v2.8h-6.51zM1159.4 182.1h6.51v2.8h-6.51zM1165.9 169.6h6.51v2.8h-6.51zM1165.9 146.1h6.51v2.8h-6.51zM1165.9 137.1h6.51v2.8h-6.51zM1165.9 130.6h6.51v2.8h-6.51zM1165.9 114.6h6.51v2.8h-6.51zM1165.9 106.1h6.51v2.8h-6.51zM1165.9 102.1h6.51v2.8h-6.51zM1165.9 109.1h6.51v2.8h-6.51zM1165.9 101.1h6.51v2.8h-6.51zM1165.9 116.6h6.51v2.8h-6.51zM1165.9 143.1h6.51v2.8h-6.51zM1165.9 154.6h6.51v2.8h-6.51zM1165.9 201.6h6.51v2.8h-6.51zM1165.9 203.6h6.51v2.8h-6.51zM1165.9 186.1h6.51v2.8h-6.51zM1165.9 173.6h6.51v2.8h-6.51zM1165.9 183.1h6.51v2.8h-6.51zM1165.9 182.1h6.51v2.8h-6.51zM1165.9 166.6h6.51v2.8h-6.51zM1165.9 179.1h6.51v2.8h-6.51zM1165.9 107.1h6.51v2.8h-6.51zM1172.3 166.6h6.51v2.8h-6.51zM1172.3 145.1h6.51v2.8h-6.51zM1172.3 135.1h6.51v2.8h-6.51zM1172.3 128.6h6.51v2.8h-6.51zM1172.3 112.1h6.51v2.8h-6.51zM1172.3 106.1h6.51v2.8h-6.51zM1172.3 102.1h6.51v2.8h-6.51zM1172.3 109.1h6.51v2.8h-6.51zM1172.3 101.1h6.51v2.8h-6.51zM1172.3 116.6h6.51v2.8h-6.51zM1172.3 130.6h6.51v2.8h-6.51zM1172.3 143.1h6.51v2.8h-6.51zM1172.3 153.1h6.51v2.8h-6.51zM1172.3 197.6h6.51v2.8h-6.51zM1172.3 200.6h6.51v2.8h-6.51zM1172.3 183.1h6.51v2.8h-6.51zM1172.3 170.6h6.51v2.8h-6.51zM1172.3 180.1h6.51v2.8h-6.51zM1172.3 179.1h6.51v2.8h-6.51zM1172.3 163.6h6.51v2.8h-6.51zM1172.3 164.6h6.51v2.8h-6.51zM1172.3 176.1h6.51v2.8h-6.51zM1178.8 164.6h6.51v2.8h-6.51zM1178.8 143.1h6.51v2.8h-6.51zM1178.8 132.6h6.51v2.8h-6.51zM1178.8 126.6h6.51v2.8h-6.51zM1178.8 109.1h6.51v2.8h-6.51zM1178.8 106.1h6.51v2.8h-6.51zM1178.8 102.1h6.51v2.8h-6.51zM1178.8 101.1h6.51v2.8h-6.51zM1178.8 116.6h6.51v2.8h-6.51zM1178.8 129.6h6.51v2.8h-6.51zM1178.8 153.1h6.51v2.8h-6.51zM1178.8 194.1h6.51v2.8h-6.51zM1178.8 197.6h6.51v2.8h-6.51zM1178.8 181.1h6.51v2.8h-6.51zM1178.8 167.6h6.51v2.8h-6.51zM1178.8 178.1h6.51v2.8h-6.51zM1178.8 177.1h6.51v2.8h-6.51zM1178.8 161.6h6.51v2.8h-6.51zM1178.8 162.6h6.51v2.8h-6.51zM1178.8 173.6h6.51v2.8h-6.51zM1178.8 105.1h6.51v2.8h-6.51zM1185.2 162.6h6.51v2.8h-6.51zM1185.2 141.1h6.51v2.8h-6.51zM1185.2 131.6h6.51v2.8h-6.51zM1185.2 124.6h6.51v2.8h-6.51zM1185.2 109.1h6.51v2.8h-6.51zM1185.2 106.1h6.51v2.8h-6.51zM1185.2 102.1h6.51v2.8h-6.51zM1185.2 101.1h6.51v2.8h-6.51zM1185.2 116.6h6.51v2.8h-6.51zM1185.2 130.6h6.51v2.8h-6.51zM1185.2 143.1h6.51v2.8h-6.51zM1185.2 154.6h6.51v2.8h-6.51zM1185.2 192.1h6.51v2.8h-6.51zM1185.2 195.6h6.51v2.8h-6.51zM1185.2 179.1h6.51v2.8h-6.51zM1185.2 167.6h6.51v2.8h-6.51zM1185.2 177.1h6.51v2.8h-6.51zM1185.2 160.6h6.51v2.8h-6.51zM1185.2 159.6h6.51v2.8h-6.51zM1185.2 176.1h6.51v2.8h-6.51zM1185.2 171.6h6.51v2.8h-6.51zM1185.2 104.1h6.51v2.8h-6.51zM1191.7 160.6h6.51v2.8h-6.51zM1191.7 139.1h6.51v2.8h-6.51zM1191.7 130.6h6.51v2.8h-6.51zM1191.7 123.6h6.51v2.8h-6.51zM1191.7 108.1h6.51v2.8h-6.51zM1191.7 106.1h6.51v2.8h-6.51zM1191.7 102.1h6.51v2.8h-6.51zM1191.7 109.1h6.51v2.8h-6.51zM1191.7 101.1h6.51v2.8h-6.51zM1191.7 116.6h6.51v2.8h-6.51zM1191.7 143.1h6.51v2.8h-6.51zM1191.7 155.6h6.51v2.8h-6.51zM1191.7 189.1h6.51v2.8h-6.51zM1191.7 192.1h6.51v2.8h-6.51zM1191.7 177.1h6.51v2.8h-6.51zM1191.7 166.6h6.51v2.8h-6.51zM1191.7 176.1h6.51v2.8h-6.51zM1191.7 158.6h6.51v2.8h-6.51zM1191.7 157.6h6.51v2.8h-6.51zM1191.7 172.6h6.51v2.8h-6.51zM1191.7 169.6h6.51v2.8h-6.51zM1198.2 158.6h6.51v2.8h-6.51zM1198.2 137.1h6.51v2.8h-6.51zM1198.2 129.6h6.51v2.8h-6.51zM1198.2 122.6h6.51v2.8h-6.51zM1198.2 108.1h6.51v2.8h-6.51zM1198.2 106.1h6.51v2.8h-6.51zM1198.2 102.1h6.51v2.8h-6.51zM1198.2 109.1h6.51v2.8h-6.51zM1198.2 101.1h6.51v2.8h-6.51zM1198.2 116.6h6.51v2.8h-6.51zM1198.2 130.6h6.51v2.8h-6.51zM1198.2 143.1h6.51v2.8h-6.51zM1198.2 154.6h6.51v2.8h-6.51zM1198.2 187.1h6.51v2.8h-6.51zM1198.2 190.1h6.51v2.8h-6.51zM1198.2 175.1h6.51v2.8h-6.51zM1198.2 165.6h6.51v2.8h-6.51zM1198.2 176.1h6.51v2.8h-6.51zM1198.2 178.1h6.51v2.8h-6.51zM1198.2 156.6h6.51v2.8h-6.51zM1198.2 170.6h6.51v2.8h-6.51zM1198.2 166.6h6.51v2.8h-6.51zM1204.6 156.6h6.51v2.8h-6.51zM1204.6 136.1h6.51v2.8h-6.51zM1204.6 127.6h6.51v2.8h-6.51zM1204.6 121.6h6.51v2.8h-6.51zM1204.6 107.1h6.51v2.8h-6.51zM1204.6 106.1h6.51v2.8h-6.51zM1204.6 102.1h6.51v2.8h-6.51zM1204.6 109.1h6.51v2.8h-6.51zM1204.6 101.1h6.51v2.8h-6.51zM1204.6 116.6h6.51v2.8h-6.51zM1204.6 129.6h6.51v2.8h-6.51zM1204.6 142.1h6.51v2.8h-6.51zM1204.6 154.6h6.51v2.8h-6.51zM1204.6 184.1h6.51v2.8h-6.51zM1204.6 187.1h6.51v2.8h-6.51zM1204.6 173.6h6.51v2.8h-6.51zM1204.6 164.6h6.51v2.8h-6.51zM1204.6 175.1h6.51v2.8h-6.51zM1204.6 178.1h6.51v2.8h-6.51zM1204.6 155.6h6.51v2.8h-6.51zM1204.6 152.1h6.51v2.8h-6.51zM1204.6 168.6h6.51v2.8h-6.51zM1211.1 154.6h6.51v2.8h-6.51zM1211.1 134.1h6.51v2.8h-6.51zM1211.1 126.6h6.51v2.8h-6.51zM1211.1 119.6h6.51v2.8h-6.51zM1211.1 106.1h6.51v2.8h-6.51zM1211.1 102.1h6.51v2.8h-6.51zM1211.1 109.1h6.51v2.8h-6.51zM1211.1 101.1h6.51v2.8h-6.51zM1211.1 114.6h6.51v2.8h-6.51zM1211.1 138.1h6.51v2.8h-6.51zM1211.1 147.1h6.51v2.8h-6.51zM1211.1 181.1h6.51v2.8h-6.51zM1211.1 185.1h6.51v2.8h-6.51zM1211.1 171.6h6.51v2.8h-6.51zM1211.1 164.6h6.51v2.8h-6.51zM1211.1 175.1h6.51v2.8h-6.51zM1211.1 179.1h6.51v2.8h-6.51zM1211.1 150.1h6.51v2.8h-6.51zM1211.1 166.6h6.51v2.8h-6.51zM1211.1 162.6h6.51v2.8h-6.51zM1217.5 157.6h6.51v2.8h-6.51zM1217.5 137.1h6.51v2.8h-6.51zM1217.5 115.6h6.51v2.8h-6.51zM1217.5 101.1h6.51v2.8h-6.51zM1217.5 102.1h6.51v2.8h-6.51zM1217.5 113.6h6.51v2.8h-6.51zM1217.5 125.6h6.51v2.8h-6.51zM1217.5 146.1h6.51v2.8h-6.51zM1217.5 173.6h6.51v2.8h-6.51zM1217.5 165.6h6.51v2.8h-6.51zM1217.5 161.6h6.51v2.8h-6.51zM1217.5 153.1h6.51v2.8h-6.51zM1217.5 149.1h6.51v2.8h-6.51z"/>
<path style="mix-blend-mode:screen" fill="#3838ee" opacity=".45" d="M997.9 360h6.51v2h-6.51zM1004.4 359h6.51v2h-6.51zM1010.8 358h6.51v2h-6.51zM1017.3 356h6.51v2h-6.51zM1023.7 355h6.51v2h-6.51zM1023.7 335h6.51v2h-6.51zM1030.2 352h6.51v2h-6.51zM1030.2 324h6.51v2h-6.51zM1030.2 326h6.51v2h-6.51zM1030.2 338h6.51v2h-6.51zM1030.2 332h6.51v2h-6.51zM1036.7 349h6.51v2h-6.51zM1036.7 322h6.51v2h-6.51zM1036.7 313h6.51v2h-6.51zM1036.7 317h6.51v2h-6.51zM1036.7 331h6.51v2h-6.51zM1043.1 344h6.51v2h-6.51zM1043.1 323h6.51v2h-6.51zM1043.1 298h6.51v2h-6.51zM1043.1 302h6.51v2h-6.51zM1043.1 321h6.51v2h-6.51zM1049.6 340h6.51v2h-6.51zM1049.6 313h6.51v2h-6.51zM1049.6 296h6.51v2h-6.51zM1049.6 288h6.51v2h-6.51zM1049.6 282h6.51v2h-6.51zM1049.6 287h6.51v2h-6.51zM1049.6 311h6.51v2h-6.51zM1049.6 299h6.51v2h-6.51zM1056.0 334h6.51v2h-6.51zM1056.0 301h6.51v2h-6.51zM1056.0 281h6.51v2h-6.51zM1056.0 271h6.51v2h-6.51zM1056.0 263h6.51v2h-6.51zM1056.0 269h6.51v2h-6.51zM1056.0 299h6.51v2h-6.51zM1056.0 284h6.51v2h-6.51zM1062.5 329h6.51v2h-6.51zM1062.5 289h6.51v2h-6.51zM1062.5 252h6.51v2h-6.51zM1062.5 243h6.51v2h-6.51zM1062.5 250h6.51v2h-6.51zM1062.5 286h6.51v2h-6.51zM1069.0 317h6.51v2h-6.51zM1069.0 272h6.51v2h-6.51zM1069.0 245h6.51v2h-6.51zM1069.0 227h6.51v2h-6.51zM1069.0 217h6.51v2h-6.51zM1069.0 201h6.51v2h-6.51zM1069.0 202h6.51v2h-6.51zM1069.0 199h6.51v2h-6.51zM1069.0 228h6.51v2h-6.51zM1069.0 246h6.51v2h-6.51zM1069.0 270h6.51v2h-6.51zM1069.0 251h6.51v2h-6.51zM1075.4 348h6.51v2h-6.51zM1075.4 349h6.51v2h-6.51zM1075.4 341h6.51v2h-6.51zM1075.4 329h6.51v2h-6.51zM1075.4 331h6.51v2h-6.51zM1075.4 297h6.51v2h-6.51zM1075.4 251h6.51v2h-6.51zM1075.4 224h6.51v2h-6.51zM1075.4 197h6.51v2h-6.51zM1075.4 178h6.51v2h-6.51zM1075.4 211h6.51v2h-6.51zM1075.4 231h6.51v2h-6.51zM1075.4 237h6.51v2h-6.51zM1081.9 331h6.51v2h-6.51zM1081.9 328h6.51v2h-6.51zM1081.9 305h6.51v2h-6.51zM1081.9 300h6.51v2h-6.51zM1081.9 310h6.51v2h-6.51zM1081.9 279h6.51v2h-6.51zM1081.9 236h6.51v2h-6.51zM1081.9 209h6.51v2h-6.51zM1081.9 191h6.51v2h-6.51zM1081.9 180h6.51v2h-6.51zM1081.9 163h6.51v2h-6.51zM1081.9 164h6.51v2h-6.51zM1081.9 161h6.51v2h-6.51zM1081.9 192h6.51v2h-6.51zM1081.9 214h6.51v2h-6.51zM1081.9 243h6.51v2h-6.51zM1081.9 224h6.51v2h-6.51zM1088.3 299h6.51v2h-6.51zM1088.3 305h6.51v2h-6.51zM1088.3 295h6.51v2h-6.51zM1088.3 292h6.51v2h-6.51zM1088.3 285h6.51v2h-6.51zM1088.3 280h6.51v2h-6.51zM1088.3 291h6.51v2h-6.51zM1088.3 262h6.51v2h-6.51zM1088.3 221h6.51v2h-6.51zM1088.3 195h6.51v2h-6.51zM1088.3 177h6.51v2h-6.51zM1088.3 167h6.51v2h-6.51zM1088.3 175h6.51v2h-6.51zM1088.3 197h6.51v2h-6.51zM1088.3 230h6.51v2h-6.51zM1088.3 213h6.51v2h-6.51zM1094.8 288h6.51v2h-6.51zM1094.8 263h6.51v2h-6.51zM1094.8 274h6.51v2h-6.51zM1094.8 248h6.51v2h-6.51zM1094.8 209h6.51v2h-6.51zM1094.8 183h6.51v2h-6.51zM1094.8 167h6.51v2h-6.51zM1094.8 156h6.51v2h-6.51zM1094.8 161h6.51v2h-6.51zM1094.8 217h6.51v2h-6.51zM1094.8 202h6.51v2h-6.51zM1101.3 268h6.51v2h-6.51zM1101.3 260h6.51v2h-6.51zM1101.3 261h6.51v2h-6.51zM1101.3 253h6.51v2h-6.51zM1101.3 248h6.51v2h-6.51zM1101.3 259h6.51v2h-6.51zM1101.3 235h6.51v2h-6.51zM1101.3 197h6.51v2h-6.51zM1101.3 173h6.51v2h-6.51zM1101.3 157h6.51v2h-6.51zM1101.3 147h6.51v2h-6.51zM1101.3 130h6.51v2h-6.51zM1101.3 121h6.51v2h-6.51zM1101.3 148h6.51v2h-6.51zM1101.3 190h6.51v2h-6.51zM1107.7 245h6.51v2h-6.51zM1107.7 241h6.51v2h-6.51zM1107.7 246h6.51v2h-6.51zM1107.7 249h6.51v2h-6.51zM1107.7 240h6.51v2h-6.51zM1107.7 235h6.51v2h-6.51zM1107.7 247h6.51v2h-6.51zM1107.7 189h6.51v2h-6.51zM1107.7 166h6.51v2h-6.51zM1107.7 140h6.51v2h-6.51zM1107.7 116h6.51v2h-6.51zM1107.7 122h6.51v2h-6.51zM1107.7 141h6.51v2h-6.51zM1107.7 179h6.51v2h-6.51zM1114.2 233h6.51v2h-6.51zM1114.2 236h6.51v2h-6.51zM1114.2 222h6.51v2h-6.51zM1114.2 213h6.51v2h-6.51zM1114.2 180h6.51v2h-6.51zM1114.2 136h6.51v2h-6.51zM1114.2 120h6.51v2h-6.51zM1114.2 118h6.51v2h-6.51zM1114.2 169h6.51v2h-6.51zM1120.6 211h6.51v2h-6.51zM1120.6 213h6.51v2h-6.51zM1120.6 221h6.51v2h-6.51zM1120.6 216h6.51v2h-6.51zM1120.6 204h6.51v2h-6.51zM1120.6 173h6.51v2h-6.51zM1120.6 132h6.51v2h-6.51zM1120.6 118h6.51v2h-6.51zM1120.6 116h6.51v2h-6.51zM1120.6 162h6.51v2h-6.51zM1127.1 200h6.51v2h-6.51zM1127.1 213h6.51v2h-6.51zM1127.1 204h6.51v2h-6.51zM1127.1 167h6.51v2h-6.51zM1127.1 149h6.51v2h-6.51zM1127.1 129h6.51v2h-6.51zM1127.1 114h6.51v2h-6.51zM1127.1 127h6.51v2h-6.51zM1127.1 172h6.51v2h-6.51zM1127.1 157h6.51v2h-6.51zM1133.6 191h6.51v2h-6.51zM1133.6 208h6.51v2h-6.51zM1133.6 205h6.51v2h-6.51zM1133.6 197h6.51v2h-6.51zM1133.6 192h6.51v2h-6.51zM1133.6 189h6.51v2h-6.51zM1133.6 162h6.51v2h-6.51zM1133.6 146h6.51v2h-6.51zM1133.6 126h6.51v2h-6.51zM1133.6 111h6.51v2h-6.51zM1133.6 125h6.51v2h-6.51zM1133.6 168h6.51v2h-6.51zM1133.6 152h6.51v2h-6.51zM1140.0 183h6.51v2h-6.51zM1140.0 184h6.51v2h-6.51zM1140.0 205h6.51v2h-6.51zM1140.0 202h6.51v2h-6.51zM1140.0 190h6.51v2h-6.51zM1140.0 186h6.51v2h-6.51zM1140.0 199h6.51v2h-6.51zM1140.0 158h6.51v2h-6.51zM1140.0 142h6.51v2h-6.51zM1140.0 123h6.51v2h-6.51zM1140.0 106h6.51v2h-6.51zM1140.0 163h6.51v2h-6.51zM1140.0 148h6.51v2h-6.51zM1146.5 177h6.51v2h-6.51zM1146.5 191h6.51v2h-6.51zM1146.5 203h6.51v2h-6.51zM1146.5 198h6.51v2h-6.51zM1146.5 193h6.51v2h-6.51zM1146.5 181h6.51v2h-6.51zM1146.5 180h6.51v2h-6.51zM1146.5 155h6.51v2h-6.51zM1146.5 139h6.51v2h-6.51zM1146.5 120h6.51v2h-6.51zM1146.5 106h6.51v2h-6.51zM1146.5 121h6.51v2h-6.51zM1146.5 144h6.51v2h-6.51zM1152.9 153h6.51v2h-6.51zM1152.9 128h6.51v2h-6.51zM1152.9 119h6.51v2h-6.51zM1152.9 120h6.51v2h-6.51zM1152.9 156h6.51v2h-6.51zM1159.4 167h6.51v2h-6.51zM1159.4 188h6.51v2h-6.51zM1159.4 185h6.51v2h-6.51zM1159.4 178h6.51v2h-6.51zM1159.4 175h6.51v2h-6.51zM1159.4 151h6.51v2h-6.51zM1159.4 133h6.51v2h-6.51zM1159.4 126h6.51v2h-6.51zM1159.4 116h6.51v2h-6.51zM1159.4 119h6.51v2h-6.51zM1159.4 154h6.51v2h-6.51zM1165.9 164h6.51v2h-6.51zM1165.9 184h6.51v2h-6.51zM1165.9 174h6.51v2h-6.51zM1165.9 185h6.51v2h-6.51zM1165.9 173h6.51v2h-6.51zM1165.9 150h6.51v2h-6.51zM1165.9 132h6.51v2h-6.51zM1165.9 126h6.51v2h-6.51zM1165.9 116h6.51v2h-6.51zM1165.9 118h6.51v2h-6.51zM1165.9 152h6.51v2h-6.51zM1165.9 136h6.51v2h-6.51zM1172.3 161h6.51v2h-6.51zM1172.3 172h6.51v2h-6.51zM1172.3 183h6.51v2h-6.51zM1172.3 177h6.51v2h-6.51zM1172.3 174h6.51v2h-6.51zM1172.3 184h6.51v2h-6.51zM1172.3 150h6.51v2h-6.51zM1172.3 132h6.51v2h-6.51zM1172.3 125h6.51v2h-6.51zM1172.3 116h6.51v2h-6.51zM1172.3 118h6.51v2h-6.51zM1172.3 135h6.51v2h-6.51zM1178.8 159h6.51v2h-6.51zM1178.8 157h6.51v2h-6.51zM1178.8 163h6.51v2h-6.51zM1178.8 182h6.51v2h-6.51zM1178.8 176h6.51v2h-6.51zM1178.8 173h6.51v2h-6.51zM1178.8 183h6.51v2h-6.51zM1178.8 171h6.51v2h-6.51zM1178.8 125h6.51v2h-6.51zM1178.8 116h6.51v2h-6.51zM1178.8 117h6.51v2h-6.51zM1178.8 133h6.51v2h-6.51zM1185.2 157h6.51v2h-6.51zM1185.2 156h6.51v2h-6.51zM1185.2 181h6.51v2h-6.51zM1185.2 174h6.51v2h-6.51zM1185.2 171h6.51v2h-6.51zM1185.2 170h6.51v2h-6.51zM1185.2 149h6.51v2h-6.51zM1185.2 132h6.51v2h-6.51zM1185.2 125h6.51v2h-6.51zM1185.2 116h6.51v2h-6.51zM1185.2 117h6.51v2h-6.51zM1185.2 148h6.51v2h-6.51zM1191.7 155h6.51v2h-6.51zM1191.7 154h6.51v2h-6.51zM1191.7 150h6.51v2h-6.51zM1191.7 172h6.51v2h-6.51zM1191.7 169h6.51v2h-6.51zM1191.7 131h6.51v2h-6.51zM1191.7 124h6.51v2h-6.51zM1191.7 115h6.51v2h-6.51zM1191.7 116h6.51v2h-6.51zM1191.7 146h6.51v2h-6.51zM1198.2 152h6.51v2h-6.51zM1198.2 155h6.51v2h-6.51zM1198.2 180h6.51v2h-6.51zM1198.2 168h6.51v2h-6.51zM1198.2 166h6.51v2h-6.51zM1198.2 167h6.51v2h-6.51zM1198.2 130h6.51v2h-6.51zM1198.2 124h6.51v2h-6.51zM1198.2 115h6.51v2h-6.51zM1198.2 116h6.51v2h-6.51zM1204.6 152h6.51v2h-6.51zM1204.6 175h6.51v2h-6.51zM1204.6 177h6.51v2h-6.51zM1204.6 165h6.51v2h-6.51zM1204.6 163h6.51v2h-6.51zM1204.6 164h6.51v2h-6.51zM1204.6 129h6.51v2h-6.51zM1204.6 123h6.51v2h-6.51zM1204.6 115h6.51v2h-6.51zM1211.1 146h6.51v2h-6.51zM1211.1 145h6.51v2h-6.51zM1211.1 163h6.51v2h-6.51zM1211.1 166h6.51v2h-6.51zM1211.1 153h6.51v2h-6.51zM1211.1 154h6.51v2h-6.51zM1211.1 136h6.51v2h-6.51zM1211.1 120h6.51v2h-6.51zM1211.1 113h6.51v2h-6.51zM1211.1 115h6.51v2h-6.51zM1217.5 152h6.51v2h-6.51zM1217.5 137h6.51v2h-6.51zM1217.5 115h6.51v2h-6.51zM1217.5 138h6.51v2h-6.51zM1217.5 125h6.51v2h-6.51zM1020.2 346h3.6v2h-3.6zM1020.2 339h3.6v2h-3.6zM1026.6 333h3.6v2h-3.6zM1033.1 335h3.6v2h-3.6zM1033.1 330h3.6v2h-3.6zM1033.1 323h3.6v2h-3.6zM1033.1 339h3.6v2h-3.6zM1039.6 326h3.6v2h-3.6zM1039.6 320h3.6v2h-3.6zM1039.6 311h3.6v2h-3.6zM1039.6 332h3.6v2h-3.6zM1046.0 317h3.6v2h-3.6zM1046.0 309h3.6v2h-3.6zM1046.0 297h3.6v2h-3.6zM1046.0 325h3.6v2h-3.6zM1052.5 305h3.6v2h-3.6zM1052.5 285h3.6v2h-3.6zM1058.9 294h3.6v2h-3.6zM1058.9 283h3.6v2h-3.6zM1058.9 257h3.6v2h-3.6zM1058.9 270h3.6v2h-3.6zM1058.9 265h3.6v2h-3.6zM1065.4 359h3.6v2h-3.6zM1065.4 355h3.6v2h-3.6zM1065.4 356h3.6v2h-3.6zM1065.4 358h3.6v2h-3.6zM1065.4 277h3.6v2h-3.6zM1065.4 249h3.6v2h-3.6zM1065.4 296h3.6v2h-3.6zM1071.9 343h3.6v2h-3.6zM1071.9 353h3.6v2h-3.6zM1071.9 345h3.6v2h-3.6zM1071.9 337h3.6v2h-3.6zM1071.9 332h3.6v2h-3.6zM1071.9 335h3.6v2h-3.6zM1071.9 322h3.6v2h-3.6zM1071.9 325h3.6v2h-3.6zM1071.9 336h3.6v2h-3.6zM1071.9 257h3.6v2h-3.6zM1071.9 204h3.6v2h-3.6zM1071.9 209h3.6v2h-3.6zM1071.9 235h3.6v2h-3.6zM1071.9 287h3.6v2h-3.6zM1078.3 317h3.6v2h-3.6zM1078.3 324h3.6v2h-3.6zM1078.3 312h3.6v2h-3.6zM1078.3 309h3.6v2h-3.6zM1078.3 318h3.6v2h-3.6zM1078.3 314h3.6v2h-3.6zM1078.3 303h3.6v2h-3.6zM1078.3 242h3.6v2h-3.6zM1078.3 230h3.6v2h-3.6zM1078.3 188h3.6v2h-3.6zM1078.3 194h3.6v2h-3.6zM1078.3 217h3.6v2h-3.6zM1078.3 210h3.6v2h-3.6zM1078.3 277h3.6v2h-3.6zM1084.8 289h3.6v2h-3.6zM1084.8 301h3.6v2h-3.6zM1084.8 287h3.6v2h-3.6zM1084.8 293h3.6v2h-3.6zM1084.8 284h3.6v2h-3.6zM1084.8 228h3.6v2h-3.6zM1084.8 215h3.6v2h-3.6zM1084.8 174h3.6v2h-3.6zM1084.8 201h3.6v2h-3.6zM1084.8 265h3.6v2h-3.6zM1091.2 310h3.6v2h-3.6zM1091.2 286h3.6v2h-3.6zM1091.2 282h3.6v2h-3.6zM1091.2 271h3.6v2h-3.6zM1091.2 259h3.6v2h-3.6zM1091.2 268h3.6v2h-3.6zM1091.2 281h3.6v2h-3.6zM1091.2 203h3.6v2h-3.6zM1091.2 164h3.6v2h-3.6zM1091.2 170h3.6v2h-3.6zM1091.2 137h3.6v2h-3.6zM1091.2 134h3.6v2h-3.6zM1091.2 139h3.6v2h-3.6zM1091.2 133h3.6v2h-3.6zM1091.2 135h3.6v2h-3.6zM1091.2 188h3.6v2h-3.6zM1091.2 179h3.6v2h-3.6zM1091.2 254h3.6v2h-3.6zM1097.7 290h3.6v2h-3.6zM1097.7 245h3.6v2h-3.6zM1097.7 264h3.6v2h-3.6zM1097.7 255h3.6v2h-3.6zM1097.7 256h3.6v2h-3.6zM1097.7 262h3.6v2h-3.6zM1097.7 244h3.6v2h-3.6zM1097.7 252h3.6v2h-3.6zM1097.7 192h3.6v2h-3.6zM1097.7 154h3.6v2h-3.6zM1097.7 160h3.6v2h-3.6zM1097.7 128h3.6v2h-3.6zM1097.7 125h3.6v2h-3.6zM1097.7 118h3.6v2h-3.6zM1097.7 123h3.6v2h-3.6zM1097.7 119h3.6v2h-3.6zM1097.7 131h3.6v2h-3.6zM1097.7 124h3.6v2h-3.6zM1097.7 172h3.6v2h-3.6zM1097.7 168h3.6v2h-3.6zM1097.7 239h3.6v2h-3.6zM1104.2 258h3.6v2h-3.6zM1104.2 232h3.6v2h-3.6zM1104.2 251h3.6v2h-3.6zM1104.2 250h3.6v2h-3.6zM1104.2 242h3.6v2h-3.6zM1104.2 243h3.6v2h-3.6zM1104.2 254h3.6v2h-3.6zM1104.2 231h3.6v2h-3.6zM1104.2 194h3.6v2h-3.6zM1104.2 183h3.6v2h-3.6zM1104.2 120h3.6v2h-3.6zM1104.2 129h3.6v2h-3.6zM1104.2 113h3.6v2h-3.6zM1104.2 114h3.6v2h-3.6zM1104.2 126h3.6v2h-3.6zM1104.2 117h3.6v2h-3.6zM1104.2 165h3.6v2h-3.6zM1104.2 163h3.6v2h-3.6zM1104.2 224h3.6v2h-3.6zM1110.6 220h3.6v2h-3.6zM1110.6 237h3.6v2h-3.6zM1110.6 229h3.6v2h-3.6zM1110.6 238h3.6v2h-3.6zM1110.6 217h3.6v2h-3.6zM1110.6 227h3.6v2h-3.6zM1110.6 175h3.6v2h-3.6zM1110.6 142h3.6v2h-3.6zM1110.6 124h3.6v2h-3.6zM1110.6 109h3.6v2h-3.6zM1110.6 110h3.6v2h-3.6zM1110.6 115h3.6v2h-3.6zM1110.6 159h3.6v2h-3.6zM1110.6 158h3.6v2h-3.6zM1110.6 211h3.6v2h-3.6zM1110.6 127h3.6v2h-3.6zM1117.1 219h3.6v2h-3.6zM1117.1 202h3.6v2h-3.6zM1117.1 223h3.6v2h-3.6zM1117.1 224h3.6v2h-3.6zM1117.1 206h3.6v2h-3.6zM1117.1 215h3.6v2h-3.6zM1117.1 177h3.6v2h-3.6zM1117.1 139h3.6v2h-3.6zM1117.1 121h3.6v2h-3.6zM1117.1 117h3.6v2h-3.6zM1117.1 106h3.6v2h-3.6zM1117.1 111h3.6v2h-3.6zM1117.1 107h3.6v2h-3.6zM1117.1 154h3.6v2h-3.6zM1117.1 201h3.6v2h-3.6zM1123.5 209h3.6v2h-3.6zM1123.5 192h3.6v2h-3.6zM1123.5 208h3.6v2h-3.6zM1123.5 212h3.6v2h-3.6zM1123.5 205h3.6v2h-3.6zM1123.5 207h3.6v2h-3.6zM1123.5 214h3.6v2h-3.6zM1123.5 195h3.6v2h-3.6zM1123.5 171h3.6v2h-3.6zM1123.5 163h3.6v2h-3.6zM1123.5 135h3.6v2h-3.6zM1123.5 115h3.6v2h-3.6zM1123.5 109h3.6v2h-3.6zM1123.5 151h3.6v2h-3.6zM1123.5 194h3.6v2h-3.6zM1130.0 201h3.6v2h-3.6zM1130.0 181h3.6v2h-3.6zM1130.0 215h3.6v2h-3.6zM1130.0 210h3.6v2h-3.6zM1130.0 187h3.6v2h-3.6zM1130.0 198h3.6v2h-3.6zM1130.0 166h3.6v2h-3.6zM1130.0 159h3.6v2h-3.6zM1130.0 132h3.6v2h-3.6zM1130.0 148h3.6v2h-3.6zM1130.0 188h3.6v2h-3.6zM1130.0 117h3.6v2h-3.6zM1136.5 175h3.6v2h-3.6zM1136.5 193h3.6v2h-3.6zM1136.5 180h3.6v2h-3.6zM1136.5 206h3.6v2h-3.6zM1136.5 155h3.6v2h-3.6zM1136.5 129h3.6v2h-3.6zM1136.5 133h3.6v2h-3.6zM1136.5 143h3.6v2h-3.6zM1142.9 169h3.6v2h-3.6zM1142.9 197h3.6v2h-3.6zM1142.9 209h3.6v2h-3.6zM1142.9 188h3.6v2h-3.6zM1142.9 195h3.6v2h-3.6zM1142.9 201h3.6v2h-3.6zM1142.9 159h3.6v2h-3.6zM1142.9 152h3.6v2h-3.6zM1142.9 127h3.6v2h-3.6zM1142.9 131h3.6v2h-3.6zM1142.9 140h3.6v2h-3.6zM1149.4 164h3.6v2h-3.6zM1149.4 189h3.6v2h-3.6zM1149.4 205h3.6v2h-3.6zM1149.4 183h3.6v2h-3.6zM1149.4 172h3.6v2h-3.6zM1149.4 157h3.6v2h-3.6zM1149.4 149h3.6v2h-3.6zM1149.4 125h3.6v2h-3.6zM1149.4 137h3.6v2h-3.6zM1149.4 171h3.6v2h-3.6zM1155.8 173h3.6v2h-3.6zM1155.8 160h3.6v2h-3.6zM1155.8 176h3.6v2h-3.6zM1155.8 179h3.6v2h-3.6zM1155.8 187h3.6v2h-3.6zM1155.8 169h3.6v2h-3.6zM1155.8 146h3.6v2h-3.6zM1155.8 136h3.6v2h-3.6zM1155.8 139h3.6v2h-3.6zM1155.8 168h3.6v2h-3.6zM1155.8 110h3.6v2h-3.6zM1162.3 170h3.6v2h-3.6zM1162.3 158h3.6v2h-3.6zM1162.3 172h3.6v2h-3.6zM1162.3 134h3.6v2h-3.6zM1162.3 138h3.6v2h-3.6zM1162.3 165h3.6v2h-3.6zM1162.3 108h3.6v2h-3.6zM1168.8 167h3.6v2h-3.6zM1168.8 155h3.6v2h-3.6zM1168.8 171h3.6v2h-3.6zM1168.8 130h3.6v2h-3.6zM1168.8 133h3.6v2h-3.6zM1168.8 163h3.6v2h-3.6zM1175.2 153h3.6v2h-3.6zM1175.2 166h3.6v2h-3.6zM1175.2 149h3.6v2h-3.6zM1175.2 143h3.6v2h-3.6zM1181.7 151h3.6v2h-3.6zM1181.7 162h3.6v2h-3.6zM1181.7 160h3.6v2h-3.6zM1181.7 146h3.6v2h-3.6zM1181.7 175h3.6v2h-3.6zM1181.7 154h3.6v2h-3.6zM1181.7 131h3.6v2h-3.6zM1181.7 135h3.6v2h-3.6zM1188.1 161h3.6v2h-3.6zM1188.1 159h3.6v2h-3.6zM1188.1 142h3.6v2h-3.6zM1188.1 180h3.6v2h-3.6zM1188.1 184h3.6v2h-3.6zM1188.1 119h3.6v2h-3.6zM1188.1 129h3.6v2h-3.6zM1188.1 134h3.6v2h-3.6zM1188.1 158h3.6v2h-3.6zM1194.6 156h3.6v2h-3.6zM1194.6 138h3.6v2h-3.6zM1194.6 183h3.6v2h-3.6zM1194.6 177h3.6v2h-3.6zM1194.6 173h3.6v2h-3.6zM1194.6 182h3.6v2h-3.6zM1194.6 151h3.6v2h-3.6zM1194.6 140h3.6v2h-3.6zM1194.6 133h3.6v2h-3.6zM1201.1 157h3.6v2h-3.6zM1201.1 143h3.6v2h-3.6zM1201.1 135h3.6v2h-3.6zM1201.1 169h3.6v2h-3.6zM1201.1 174h3.6v2h-3.6zM1201.1 170h3.6v2h-3.6zM1201.1 179h3.6v2h-3.6zM1201.1 149h3.6v2h-3.6zM1201.1 128h3.6v2h-3.6zM1201.1 132h3.6v2h-3.6zM1207.5 155h3.6v2h-3.6zM1207.5 141h3.6v2h-3.6zM1207.5 158h3.6v2h-3.6zM1207.5 162h3.6v2h-3.6zM1207.5 159h3.6v2h-3.6zM1207.5 168h3.6v2h-3.6zM1207.5 116h3.6v2h-3.6zM1207.5 124h3.6v2h-3.6zM1207.5 127h3.6v2h-3.6zM1207.5 131h3.6v2h-3.6zM1214.0 129h3.6v2h-3.6zM1214.0 128h3.6v2h-3.6zM1214.0 149h3.6v2h-3.6z"/>
<path style="mix-blend-mode:screen" fill="#3838ee" d="M901.0 362.6h6.51v2.8h-6.51zM907.5 362.6h6.51v2.8h-6.51zM913.9 362.6h6.51v2.8h-6.51zM920.4 362.6h6.51v2.8h-6.51zM926.8 362.6h6.51v2.8h-6.51zM933.3 362.6h6.51v2.8h-6.51zM939.8 362.6h6.51v2.8h-6.51zM946.2 362.6h6.51v2.8h-6.51zM952.7 362.6h6.51v2.8h-6.51zM959.1 362.6h6.51v2.8h-6.51zM959.1 361.6h6.51v2.8h-6.51zM965.6 362.6h6.51v2.8h-6.51zM965.6 361.6h6.51v2.8h-6.51zM965.6 360.6h6.51v2.8h-6.51zM972.1 362.6h6.51v2.8h-6.51zM972.1 361.6h6.51v2.8h-6.51zM972.1 360.6h6.51v2.8h-6.51zM972.1 359.6h6.51v2.8h-6.51zM978.5 362.6h6.51v2.8h-6.51zM978.5 360.6h6.51v2.8h-6.51zM978.5 359.6h6.51v2.8h-6.51zM978.5 358.1h6.51v2.8h-6.51zM985.0 362.6h6.51v2.8h-6.51zM985.0 359.6h6.51v2.8h-6.51zM985.0 358.1h6.51v2.8h-6.51zM985.0 357.1h6.51v2.8h-6.51zM985.0 356.1h6.51v2.8h-6.51zM991.4 362.6h6.51v2.8h-6.51zM991.4 358.1h6.51v2.8h-6.51zM991.4 357.1h6.51v2.8h-6.51zM991.4 354.1h6.51v2.8h-6.51zM991.4 355.1h6.51v2.8h-6.51zM991.4 353.1h6.51v2.8h-6.51zM991.4 356.1h6.51v2.8h-6.51zM997.9 362.6h6.51v2.8h-6.51zM997.9 356.1h6.51v2.8h-6.51zM997.9 355.1h6.51v2.8h-6.51zM997.9 352.1h6.51v2.8h-6.51zM997.9 353.1h6.51v2.8h-6.51zM997.9 350.1h6.51v2.8h-6.51zM997.9 354.1h6.51v2.8h-6.51zM997.9 357.1h6.51v2.8h-6.51zM1004.4 362.6h6.51v2.8h-6.51zM1004.4 354.1h6.51v2.8h-6.51zM1004.4 352.1h6.51v2.8h-6.51zM1004.4 348.1h6.51v2.8h-6.51zM1004.4 349.1h6.51v2.8h-6.51zM1004.4 346.1h6.51v2.8h-6.51zM1004.4 351.1h6.51v2.8h-6.51zM1004.4 350.1h6.51v2.8h-6.51zM1004.4 355.1h6.51v2.8h-6.51zM1010.8 362.6h6.51v2.8h-6.51zM1010.8 352.1h6.51v2.8h-6.51zM1010.8 350.1h6.51v2.8h-6.51zM1010.8 345.1h6.51v2.8h-6.51zM1010.8 346.1h6.51v2.8h-6.51zM1010.8 342.1h6.51v2.8h-6.51zM1010.8 348.1h6.51v2.8h-6.51zM1010.8 347.1h6.51v2.8h-6.51zM1010.8 354.1h6.51v2.8h-6.51zM1017.3 362.6h6.51v2.8h-6.51zM1017.3 349.1h6.51v2.8h-6.51zM1017.3 347.1h6.51v2.8h-6.51zM1017.3 340.1h6.51v2.8h-6.51zM1017.3 342.1h6.51v2.8h-6.51zM1017.3 336.6h6.51v2.8h-6.51zM1017.3 344.1h6.51v2.8h-6.51zM1017.3 343.1h6.51v2.8h-6.51zM1017.3 351.1h6.51v2.8h-6.51zM1017.3 335.6h6.51v2.8h-6.51zM1023.7 362.6h6.51v2.8h-6.51zM1023.7 346.1h6.51v2.8h-6.51zM1023.7 343.1h6.51v2.8h-6.51zM1023.7 333.6h6.51v2.8h-6.51zM1023.7 336.6h6.51v2.8h-6.51zM1023.7 329.6h6.51v2.8h-6.51zM1023.7 340.1h6.51v2.8h-6.51zM1023.7 339.1h6.51v2.8h-6.51zM1023.7 348.1h6.51v2.8h-6.51zM1030.2 362.6h6.51v2.8h-6.51zM1030.2 340.1h6.51v2.8h-6.51zM1030.2 336.6h6.51v2.8h-6.51zM1030.2 324.6h6.51v2.8h-6.51zM1030.2 328.6h6.51v2.8h-6.51zM1030.2 319.6h6.51v2.8h-6.51zM1030.2 332.6h6.51v2.8h-6.51zM1030.2 330.6h6.51v2.8h-6.51zM1030.2 344.1h6.51v2.8h-6.51zM1036.7 362.6h6.51v2.8h-6.51zM1036.7 334.6h6.51v2.8h-6.51zM1036.7 329.6h6.51v2.8h-6.51zM1036.7 314.1h6.51v2.8h-6.51zM1036.7 318.6h6.51v2.8h-6.51zM1036.7 307.1h6.51v2.8h-6.51zM1036.7 308.1h6.51v2.8h-6.51zM1036.7 324.6h6.51v2.8h-6.51zM1036.7 322.6h6.51v2.8h-6.51zM1036.7 339.1h6.51v2.8h-6.51zM1043.1 362.6h6.51v2.8h-6.51zM1043.1 325.6h6.51v2.8h-6.51zM1043.1 319.6h6.51v2.8h-6.51zM1043.1 300.1h6.51v2.8h-6.51zM1043.1 305.1h6.51v2.8h-6.51zM1043.1 290.6h6.51v2.8h-6.51zM1043.1 291.6h6.51v2.8h-6.51zM1043.1 312.1h6.51v2.8h-6.51zM1043.1 310.1h6.51v2.8h-6.51zM1043.1 331.6h6.51v2.8h-6.51zM1049.6 362.6h6.51v2.8h-6.51zM1049.6 316.1h6.51v2.8h-6.51zM1049.6 308.1h6.51v2.8h-6.51zM1049.6 283.6h6.51v2.8h-6.51zM1049.6 290.6h6.51v2.8h-6.51zM1049.6 272.1h6.51v2.8h-6.51zM1049.6 273.1h6.51v2.8h-6.51zM1049.6 300.1h6.51v2.8h-6.51zM1049.6 296.6h6.51v2.8h-6.51zM1049.6 324.6h6.51v2.8h-6.51zM1056.0 362.6h6.51v2.8h-6.51zM1056.0 305.1h6.51v2.8h-6.51zM1056.0 295.6h6.51v2.8h-6.51zM1056.0 266.1h6.51v2.8h-6.51zM1056.0 274.1h6.51v2.8h-6.51zM1056.0 251.6h6.51v2.8h-6.51zM1056.0 252.6h6.51v2.8h-6.51zM1056.0 284.6h6.51v2.8h-6.51zM1056.0 281.6h6.51v2.8h-6.51zM1056.0 315.1h6.51v2.8h-6.51zM1062.5 362.6h6.51v2.8h-6.51zM1062.5 293.6h6.51v2.8h-6.51zM1062.5 282.6h6.51v2.8h-6.51zM1062.5 246.6h6.51v2.8h-6.51zM1062.5 257.1h6.51v2.8h-6.51zM1062.5 229.1h6.51v2.8h-6.51zM1062.5 230.1h6.51v2.8h-6.51zM1062.5 269.1h6.51v2.8h-6.51zM1062.5 265.1h6.51v2.8h-6.51zM1062.5 306.1h6.51v2.8h-6.51zM1062.5 226.1h6.51v2.8h-6.51zM1069.0 362.6h6.51v2.8h-6.51zM1069.0 358.1h6.51v2.8h-6.51zM1069.0 354.1h6.51v2.8h-6.51zM1069.0 355.1h6.51v2.8h-6.51zM1069.0 357.1h6.51v2.8h-6.51zM1069.0 276.1h6.51v2.8h-6.51zM1069.0 266.1h6.51v2.8h-6.51zM1069.0 223.1h6.51v2.8h-6.51zM1069.0 229.1h6.51v2.8h-6.51zM1069.0 204.6h6.51v2.8h-6.51zM1069.0 199.6h6.51v2.8h-6.51zM1069.0 196.6h6.51v2.8h-6.51zM1069.0 205.6h6.51v2.8h-6.51zM1069.0 197.6h6.51v2.8h-6.51zM1069.0 195.6h6.51v2.8h-6.51zM1069.0 202.6h6.51v2.8h-6.51zM1069.0 206.6h6.51v2.8h-6.51zM1069.0 248.6h6.51v2.8h-6.51zM1069.0 242.6h6.51v2.8h-6.51zM1069.0 295.6h6.51v2.8h-6.51zM1075.4 362.6h6.51v2.8h-6.51zM1075.4 343.1h6.51v2.8h-6.51zM1075.4 352.1h6.51v2.8h-6.51zM1075.4 345.1h6.51v2.8h-6.51zM1075.4 336.6h6.51v2.8h-6.51zM1075.4 331.6h6.51v2.8h-6.51zM1075.4 334.6h6.51v2.8h-6.51zM1075.4 321.6h6.51v2.8h-6.51zM1075.4 324.6h6.51v2.8h-6.51zM1075.4 335.6h6.51v2.8h-6.51zM1075.4 257.1h6.51v2.8h-6.51zM1075.4 244.6h6.51v2.8h-6.51zM1075.4 203.6h6.51v2.8h-6.51zM1075.4 208.6h6.51v2.8h-6.51zM1075.4 184.1h6.51v2.8h-6.51zM1075.4 179.1h6.51v2.8h-6.51zM1075.4 176.1h6.51v2.8h-6.51zM1075.4 185.1h6.51v2.8h-6.51zM1075.4 175.1h6.51v2.8h-6.51zM1075.4 182.1h6.51v2.8h-6.51zM1075.4 181.1h6.51v2.8h-6.51zM1075.4 186.1h6.51v2.8h-6.51zM1075.4 234.1h6.51v2.8h-6.51zM1075.4 227.1h6.51v2.8h-6.51zM1075.4 286.6h6.51v2.8h-6.51zM1081.9 344.1h6.51v2.8h-6.51zM1081.9 316.1h6.51v2.8h-6.51zM1081.9 331.6h6.51v2.8h-6.51zM1081.9 323.6h6.51v2.8h-6.51zM1081.9 311.1h6.51v2.8h-6.51zM1081.9 308.1h6.51v2.8h-6.51zM1081.9 317.1h6.51v2.8h-6.51zM1081.9 313.1h6.51v2.8h-6.51zM1081.9 296.6h6.51v2.8h-6.51zM1081.9 303.1h6.51v2.8h-6.51zM1081.9 241.6h6.51v2.8h-6.51zM1081.9 229.1h6.51v2.8h-6.51zM1081.9 187.1h6.51v2.8h-6.51zM1081.9 193.1h6.51v2.8h-6.51zM1081.9 166.6h6.51v2.8h-6.51zM1081.9 161.6h6.51v2.8h-6.51zM1081.9 158.6h6.51v2.8h-6.51zM1081.9 167.6h6.51v2.8h-6.51zM1081.9 159.6h6.51v2.8h-6.51zM1081.9 164.6h6.51v2.8h-6.51zM1081.9 156.6h6.51v2.8h-6.51zM1081.9 157.6h6.51v2.8h-6.51zM1081.9 165.6h6.51v2.8h-6.51zM1081.9 217.1h6.51v2.8h-6.51zM1081.9 209.6h6.51v2.8h-6.51zM1081.9 276.1h6.51v2.8h-6.51zM1081.9 171.6h6.51v2.8h-6.51zM1088.3 327.6h6.51v2.8h-6.51zM1088.3 288.6h6.51v2.8h-6.51zM1088.3 308.1h6.51v2.8h-6.51zM1088.3 301.1h6.51v2.8h-6.51zM1088.3 286.6h6.51v2.8h-6.51zM1088.3 296.6h6.51v2.8h-6.51zM1088.3 292.6h6.51v2.8h-6.51zM1088.3 276.1h6.51v2.8h-6.51zM1088.3 283.6h6.51v2.8h-6.51zM1088.3 227.1h6.51v2.8h-6.51zM1088.3 214.6h6.51v2.8h-6.51zM1088.3 173.6h6.51v2.8h-6.51zM1088.3 180.1h6.51v2.8h-6.51zM1088.3 152.1h6.51v2.8h-6.51zM1088.3 147.1h6.51v2.8h-6.51zM1088.3 144.1h6.51v2.8h-6.51zM1088.3 153.1h6.51v2.8h-6.51zM1088.3 145.1h6.51v2.8h-6.51zM1088.3 142.1h6.51v2.8h-6.51zM1088.3 140.1h6.51v2.8h-6.51zM1088.3 150.1h6.51v2.8h-6.51zM1088.3 143.1h6.51v2.8h-6.51zM1088.3 148.1h6.51v2.8h-6.51zM1088.3 200.6h6.51v2.8h-6.51zM1088.3 193.1h6.51v2.8h-6.51zM1088.3 265.1h6.51v2.8h-6.51zM1088.3 159.6h6.51v2.8h-6.51zM1094.8 309.1h6.51v2.8h-6.51zM1094.8 265.1h6.51v2.8h-6.51zM1094.8 285.6h6.51v2.8h-6.51zM1094.8 281.6h6.51v2.8h-6.51zM1094.8 270.1h6.51v2.8h-6.51zM1094.8 276.1h6.51v2.8h-6.51zM1094.8 259.1h6.51v2.8h-6.51zM1094.8 267.1h6.51v2.8h-6.51zM1094.8 280.6h6.51v2.8h-6.51zM1094.8 214.6h6.51v2.8h-6.51zM1094.8 202.6h6.51v2.8h-6.51zM1094.8 163.6h6.51v2.8h-6.51zM1094.8 169.6h6.51v2.8h-6.51zM1094.8 142.1h6.51v2.8h-6.51zM1094.8 137.1h6.51v2.8h-6.51zM1094.8 134.1h6.51v2.8h-6.51zM1094.8 143.1h6.51v2.8h-6.51zM1094.8 128.6h6.51v2.8h-6.51zM1094.8 140.1h6.51v2.8h-6.51zM1094.8 139.1h6.51v2.8h-6.51zM1094.8 132.6h6.51v2.8h-6.51zM1094.8 135.1h6.51v2.8h-6.51zM1094.8 187.1h6.51v2.8h-6.51zM1094.8 179.1h6.51v2.8h-6.51zM1094.8 253.6h6.51v2.8h-6.51zM1094.8 149.1h6.51v2.8h-6.51zM1101.3 289.6h6.51v2.8h-6.51zM1101.3 244.6h6.51v2.8h-6.51zM1101.3 265.1h6.51v2.8h-6.51zM1101.3 264.1h6.51v2.8h-6.51zM1101.3 254.6h6.51v2.8h-6.51zM1101.3 255.6h6.51v2.8h-6.51zM1101.3 266.1h6.51v2.8h-6.51zM1101.3 262.1h6.51v2.8h-6.51zM1101.3 243.6h6.51v2.8h-6.51zM1101.3 251.6h6.51v2.8h-6.51zM1101.3 202.6h6.51v2.8h-6.51zM1101.3 191.1h6.51v2.8h-6.51zM1101.3 153.1h6.51v2.8h-6.51zM1101.3 159.6h6.51v2.8h-6.51zM1101.3 132.6h6.51v2.8h-6.51zM1101.3 127.6h6.51v2.8h-6.51zM1101.3 124.6h6.51v2.8h-6.51zM1101.3 134.1h6.51v2.8h-6.51zM1101.3 117.6h6.51v2.8h-6.51zM1101.3 122.6h6.51v2.8h-6.51zM1101.3 118.6h6.51v2.8h-6.51zM1101.3 130.6h6.51v2.8h-6.51zM1101.3 123.6h6.51v2.8h-6.51zM1101.3 171.6h6.51v2.8h-6.51zM1101.3 167.6h6.51v2.8h-6.51zM1101.3 238.6h6.51v2.8h-6.51zM1101.3 140.1h6.51v2.8h-6.51zM1107.7 258.1h6.51v2.8h-6.51zM1107.7 231.1h6.51v2.8h-6.51zM1107.7 250.6h6.51v2.8h-6.51zM1107.7 249.6h6.51v2.8h-6.51zM1107.7 241.6h6.51v2.8h-6.51zM1107.7 242.6h6.51v2.8h-6.51zM1107.7 253.6h6.51v2.8h-6.51zM1107.7 230.1h6.51v2.8h-6.51zM1107.7 238.6h6.51v2.8h-6.51zM1107.7 193.1h6.51v2.8h-6.51zM1107.7 183.1h6.51v2.8h-6.51zM1107.7 147.1h6.51v2.8h-6.51zM1107.7 152.1h6.51v2.8h-6.51zM1107.7 127.6h6.51v2.8h-6.51zM1107.7 122.6h6.51v2.8h-6.51zM1107.7 119.6h6.51v2.8h-6.51zM1107.7 128.6h6.51v2.8h-6.51zM1107.7 112.1h6.51v2.8h-6.51zM1107.7 117.6h6.51v2.8h-6.51zM1107.7 113.6h6.51v2.8h-6.51zM1107.7 125.6h6.51v2.8h-6.51zM1107.7 124.6h6.51v2.8h-6.51zM1107.7 118.6h6.51v2.8h-6.51zM1107.7 116.6h6.51v2.8h-6.51zM1107.7 164.6h6.51v2.8h-6.51zM1107.7 162.6h6.51v2.8h-6.51zM1107.7 224.1h6.51v2.8h-6.51zM1107.7 134.1h6.51v2.8h-6.51zM1114.2 234.1h6.51v2.8h-6.51zM1114.2 220.1h6.51v2.8h-6.51zM1114.2 239.6h6.51v2.8h-6.51zM1114.2 236.6h6.51v2.8h-6.51zM1114.2 228.1h6.51v2.8h-6.51zM1114.2 230.1h6.51v2.8h-6.51zM1114.2 241.6h6.51v2.8h-6.51zM1114.2 237.6h6.51v2.8h-6.51zM1114.2 217.1h6.51v2.8h-6.51zM1114.2 226.1h6.51v2.8h-6.51zM1114.2 184.1h6.51v2.8h-6.51zM1114.2 175.1h6.51v2.8h-6.51zM1114.2 142.1h6.51v2.8h-6.51zM1114.2 147.1h6.51v2.8h-6.51zM1114.2 123.6h6.51v2.8h-6.51zM1114.2 118.6h6.51v2.8h-6.51zM1114.2 115.6h6.51v2.8h-6.51zM1114.2 124.6h6.51v2.8h-6.51zM1114.2 108.1h6.51v2.8h-6.51zM1114.2 113.6h6.51v2.8h-6.51zM1114.2 109.1h6.51v2.8h-6.51zM1114.2 121.6h6.51v2.8h-6.51zM1114.2 114.6h6.51v2.8h-6.51zM1114.2 112.1h6.51v2.8h-6.51zM1114.2 158.6h6.51v2.8h-6.51zM1114.2 157.6h6.51v2.8h-6.51zM1114.2 210.6h6.51v2.8h-6.51zM1114.2 126.6h6.51v2.8h-6.51zM1120.6 219.1h6.51v2.8h-6.51zM1120.6 201.6h6.51v2.8h-6.51zM1120.6 223.1h6.51v2.8h-6.51zM1120.6 224.1h6.51v2.8h-6.51zM1120.6 217.1h6.51v2.8h-6.51zM1120.6 230.1h6.51v2.8h-6.51zM1120.6 226.1h6.51v2.8h-6.51zM1120.6 205.6h6.51v2.8h-6.51zM1120.6 214.6h6.51v2.8h-6.51zM1120.6 177.1h6.51v2.8h-6.51zM1120.6 168.6h6.51v2.8h-6.51zM1120.6 139.1h6.51v2.8h-6.51zM1120.6 143.1h6.51v2.8h-6.51zM1120.6 120.6h6.51v2.8h-6.51zM1120.6 116.6h6.51v2.8h-6.51zM1120.6 113.6h6.51v2.8h-6.51zM1120.6 121.6h6.51v2.8h-6.51zM1120.6 105.1h6.51v2.8h-6.51zM1120.6 110.1h6.51v2.8h-6.51zM1120.6 106.1h6.51v2.8h-6.51zM1120.6 119.6h6.51v2.8h-6.51zM1120.6 118.6h6.51v2.8h-6.51zM1120.6 112.1h6.51v2.8h-6.51zM1120.6 153.1h6.51v2.8h-6.51zM1120.6 200.6h6.51v2.8h-6.51zM1120.6 123.6h6.51v2.8h-6.51zM1127.1 208.6h6.51v2.8h-6.51zM1127.1 191.1h6.51v2.8h-6.51zM1127.1 207.6h6.51v2.8h-6.51zM1127.1 211.6h6.51v2.8h-6.51zM1127.1 204.6h6.51v2.8h-6.51zM1127.1 206.6h6.51v2.8h-6.51zM1127.1 218.1h6.51v2.8h-6.51zM1127.1 213.6h6.51v2.8h-6.51zM1127.1 194.1h6.51v2.8h-6.51zM1127.1 219.1h6.51v2.8h-6.51zM1127.1 170.6h6.51v2.8h-6.51zM1127.1 162.6h6.51v2.8h-6.51zM1127.1 135.1h6.51v2.8h-6.51zM1127.1 139.1h6.51v2.8h-6.51zM1127.1 117.6h6.51v2.8h-6.51zM1127.1 112.1h6.51v2.8h-6.51zM1127.1 109.1h6.51v2.8h-6.51zM1127.1 118.6h6.51v2.8h-6.51zM1127.1 102.1h6.51v2.8h-6.51zM1127.1 106.1h6.51v2.8h-6.51zM1127.1 115.6h6.51v2.8h-6.51zM1127.1 114.6h6.51v2.8h-6.51zM1127.1 108.1h6.51v2.8h-6.51zM1127.1 103.1h6.51v2.8h-6.51zM1127.1 150.1h6.51v2.8h-6.51zM1127.1 193.1h6.51v2.8h-6.51zM1127.1 119.6h6.51v2.8h-6.51zM1133.6 200.6h6.51v2.8h-6.51zM1133.6 181.1h6.51v2.8h-6.51zM1133.6 199.6h6.51v2.8h-6.51zM1133.6 203.6h6.51v2.8h-6.51zM1133.6 214.6h6.51v2.8h-6.51zM1133.6 209.6h6.51v2.8h-6.51zM1133.6 206.6h6.51v2.8h-6.51zM1133.6 186.1h6.51v2.8h-6.51zM1133.6 197.6h6.51v2.8h-6.51zM1133.6 211.6h6.51v2.8h-6.51zM1133.6 165.6h6.51v2.8h-6.51zM1133.6 158.6h6.51v2.8h-6.51zM1133.6 131.6h6.51v2.8h-6.51zM1133.6 136.1h6.51v2.8h-6.51zM1133.6 114.6h6.51v2.8h-6.51zM1133.6 109.1h6.51v2.8h-6.51zM1133.6 106.1h6.51v2.8h-6.51zM1133.6 115.6h6.51v2.8h-6.51zM1133.6 107.1h6.51v2.8h-6.51zM1133.6 101.1h6.51v2.8h-6.51zM1133.6 112.1h6.51v2.8h-6.51zM1133.6 105.1h6.51v2.8h-6.51zM1133.6 102.1h6.51v2.8h-6.51zM1133.6 147.1h6.51v2.8h-6.51zM1133.6 148.1h6.51v2.8h-6.51zM1133.6 187.1h6.51v2.8h-6.51zM1133.6 116.6h6.51v2.8h-6.51zM1140.0 191.1h6.51v2.8h-6.51zM1140.0 175.1h6.51v2.8h-6.51zM1140.0 192.1h6.51v2.8h-6.51zM1140.0 197.6h6.51v2.8h-6.51zM1140.0 211.6h6.51v2.8h-6.51zM1140.0 203.6h6.51v2.8h-6.51zM1140.0 199.6h6.51v2.8h-6.51zM1140.0 180.1h6.51v2.8h-6.51zM1140.0 205.6h6.51v2.8h-6.51zM1140.0 161.6h6.51v2.8h-6.51zM1140.0 154.6h6.51v2.8h-6.51zM1140.0 128.6h6.51v2.8h-6.51zM1140.0 132.6h6.51v2.8h-6.51zM1140.0 112.1h6.51v2.8h-6.51zM1140.0 107.1h6.51v2.8h-6.51zM1140.0 104.1h6.51v2.8h-6.51zM1140.0 101.1h6.51v2.8h-6.51zM1140.0 110.1h6.51v2.8h-6.51zM1140.0 109.1h6.51v2.8h-6.51zM1140.0 103.1h6.51v2.8h-6.51zM1140.0 102.1h6.51v2.8h-6.51zM1140.0 143.1h6.51v2.8h-6.51zM1140.0 145.1h6.51v2.8h-6.51zM1140.0 181.1h6.51v2.8h-6.51zM1140.0 114.6h6.51v2.8h-6.51zM1146.5 184.1h6.51v2.8h-6.51zM1146.5 168.6h6.51v2.8h-6.51zM1146.5 196.6h6.51v2.8h-6.51zM1146.5 208.6h6.51v2.8h-6.51zM1146.5 187.1h6.51v2.8h-6.51zM1146.5 198.6h6.51v2.8h-6.51zM1146.5 194.1h6.51v2.8h-6.51zM1146.5 175.1h6.51v2.8h-6.51zM1146.5 200.6h6.51v2.8h-6.51zM1146.5 158.6h6.51v2.8h-6.51zM1146.5 151.1h6.51v2.8h-6.51zM1146.5 126.6h6.51v2.8h-6.51zM1146.5 130.6h6.51v2.8h-6.51zM1146.5 109.1h6.51v2.8h-6.51zM1146.5 104.1h6.51v2.8h-6.51zM1146.5 101.1h6.51v2.8h-6.51zM1146.5 110.1h6.51v2.8h-6.51zM1146.5 107.1h6.51v2.8h-6.51zM1146.5 102.1h6.51v2.8h-6.51zM1146.5 140.1h6.51v2.8h-6.51zM1146.5 142.1h6.51v2.8h-6.51zM1146.5 112.1h6.51v2.8h-6.51zM1152.9 177.1h6.51v2.8h-6.51zM1152.9 163.6h6.51v2.8h-6.51zM1152.9 180.1h6.51v2.8h-6.51zM1152.9 188.1h6.51v2.8h-6.51zM1152.9 204.6h6.51v2.8h-6.51zM1152.9 183.1h6.51v2.8h-6.51zM1152.9 194.1h6.51v2.8h-6.51zM1152.9 190.1h6.51v2.8h-6.51zM1152.9 171.6h6.51v2.8h-6.51zM1152.9 196.6h6.51v2.8h-6.51zM1152.9 156.6h6.51v2.8h-6.51zM1152.9 148.1h6.51v2.8h-6.51zM1152.9 124.6h6.51v2.8h-6.51zM1152.9 130.6h6.51v2.8h-6.51zM1152.9 107.1h6.51v2.8h-6.51zM1152.9 102.1h6.51v2.8h-6.51zM1152.9 101.1h6.51v2.8h-6.51zM1152.9 108.1h6.51v2.8h-6.51zM1152.9 105.1h6.51v2.8h-6.51zM1152.9 137.1h6.51v2.8h-6.51zM1152.9 140.1h6.51v2.8h-6.51zM1152.9 170.6h6.51v2.8h-6.51zM1152.9 111.1h6.51v2.8h-6.51zM1159.4 172.6h6.51v2.8h-6.51zM1159.4 159.6h6.51v2.8h-6.51zM1159.4 176.1h6.51v2.8h-6.51zM1159.4 181.1h6.51v2.8h-6.51zM1159.4 196.6h6.51v2.8h-6.51zM1159.4 179.1h6.51v2.8h-6.51zM1159.4 190.1h6.51v2.8h-6.51zM1159.4 186.1h6.51v2.8h-6.51zM1159.4 168.6h6.51v2.8h-6.51zM1159.4 180.1h6.51v2.8h-6.51zM1159.4 189.1h6.51v2.8h-6.51zM1159.4 155.6h6.51v2.8h-6.51zM1159.4 145.1h6.51v2.8h-6.51zM1159.4 119.6h6.51v2.8h-6.51zM1159.4 130.6h6.51v2.8h-6.51zM1159.4 101.1h6.51v2.8h-6.51zM1159.4 102.1h6.51v2.8h-6.51zM1159.4 136.1h6.51v2.8h-6.51zM1159.4 139.1h6.51v2.8h-6.51zM1159.4 167.6h6.51v2.8h-6.51zM1159.4 109.1h6.51v2.8h-6.51zM1165.9 169.6h6.51v2.8h-6.51zM1165.9 157.6h6.51v2.8h-6.51zM1165.9 171.6h6.51v2.8h-6.51zM1165.9 176.1h6.51v2.8h-6.51zM1165.9 181.1h6.51v2.8h-6.51zM1165.9 178.1h6.51v2.8h-6.51zM1165.9 189.1h6.51v2.8h-6.51zM1165.9 186.1h6.51v2.8h-6.51zM1165.9 167.6h6.51v2.8h-6.51zM1165.9 180.1h6.51v2.8h-6.51zM1165.9 155.6h6.51v2.8h-6.51zM1165.9 144.1h6.51v2.8h-6.51zM1165.9 119.6h6.51v2.8h-6.51zM1165.9 130.6h6.51v2.8h-6.51zM1165.9 101.1h6.51v2.8h-6.51zM1165.9 102.1h6.51v2.8h-6.51zM1165.9 134.1h6.51v2.8h-6.51zM1165.9 138.1h6.51v2.8h-6.51zM1165.9 164.6h6.51v2.8h-6.51zM1165.9 107.1h6.51v2.8h-6.51zM1172.3 166.6h6.51v2.8h-6.51zM1172.3 154.6h6.51v2.8h-6.51zM1172.3 170.6h6.51v2.8h-6.51zM1172.3 164.6h6.51v2.8h-6.51zM1172.3 178.1h6.51v2.8h-6.51zM1172.3 188.1h6.51v2.8h-6.51zM1172.3 185.1h6.51v2.8h-6.51zM1172.3 167.6h6.51v2.8h-6.51zM1172.3 179.1h6.51v2.8h-6.51zM1172.3 144.1h6.51v2.8h-6.51zM1172.3 119.6h6.51v2.8h-6.51zM1172.3 129.6h6.51v2.8h-6.51zM1172.3 101.1h6.51v2.8h-6.51zM1172.3 102.1h6.51v2.8h-6.51zM1172.3 132.6h6.51v2.8h-6.51zM1172.3 136.1h6.51v2.8h-6.51zM1172.3 162.6h6.51v2.8h-6.51zM1172.3 106.1h6.51v2.8h-6.51zM1178.8 164.6h6.51v2.8h-6.51zM1178.8 152.1h6.51v2.8h-6.51zM1178.8 165.6h6.51v2.8h-6.51zM1178.8 148.1h6.51v2.8h-6.51zM1178.8 177.1h6.51v2.8h-6.51zM1178.8 187.1h6.51v2.8h-6.51zM1178.8 184.1h6.51v2.8h-6.51zM1178.8 166.6h6.51v2.8h-6.51zM1178.8 178.1h6.51v2.8h-6.51zM1178.8 154.6h6.51v2.8h-6.51zM1178.8 143.1h6.51v2.8h-6.51zM1178.8 119.6h6.51v2.8h-6.51zM1178.8 129.6h6.51v2.8h-6.51zM1178.8 101.1h6.51v2.8h-6.51zM1178.8 102.1h6.51v2.8h-6.51zM1178.8 131.6h6.51v2.8h-6.51zM1178.8 136.1h6.51v2.8h-6.51zM1178.8 160.6h6.51v2.8h-6.51zM1178.8 105.1h6.51v2.8h-6.51zM1185.2 162.6h6.51v2.8h-6.51zM1185.2 150.1h6.51v2.8h-6.51zM1185.2 161.6h6.51v2.8h-6.51zM1185.2 159.6h6.51v2.8h-6.51zM1185.2 145.1h6.51v2.8h-6.51zM1185.2 175.1h6.51v2.8h-6.51zM1185.2 186.1h6.51v2.8h-6.51zM1185.2 182.1h6.51v2.8h-6.51zM1185.2 164.6h6.51v2.8h-6.51zM1185.2 177.1h6.51v2.8h-6.51zM1185.2 153.1h6.51v2.8h-6.51zM1185.2 143.1h6.51v2.8h-6.51zM1185.2 119.6h6.51v2.8h-6.51zM1185.2 129.6h6.51v2.8h-6.51zM1185.2 101.1h6.51v2.8h-6.51zM1185.2 102.1h6.51v2.8h-6.51zM1185.2 130.6h6.51v2.8h-6.51zM1185.2 135.1h6.51v2.8h-6.51zM1185.2 104.1h6.51v2.8h-6.51zM1191.7 160.6h6.51v2.8h-6.51zM1191.7 148.1h6.51v2.8h-6.51zM1191.7 158.6h6.51v2.8h-6.51zM1191.7 156.6h6.51v2.8h-6.51zM1191.7 142.1h6.51v2.8h-6.51zM1191.7 173.6h6.51v2.8h-6.51zM1191.7 185.1h6.51v2.8h-6.51zM1191.7 180.1h6.51v2.8h-6.51zM1191.7 162.6h6.51v2.8h-6.51zM1191.7 175.1h6.51v2.8h-6.51zM1191.7 184.1h6.51v2.8h-6.51zM1191.7 152.1h6.51v2.8h-6.51zM1191.7 118.6h6.51v2.8h-6.51zM1191.7 128.6h6.51v2.8h-6.51zM1191.7 101.1h6.51v2.8h-6.51zM1191.7 102.1h6.51v2.8h-6.51zM1191.7 129.6h6.51v2.8h-6.51zM1191.7 134.1h6.51v2.8h-6.51zM1191.7 157.6h6.51v2.8h-6.51zM1198.2 158.6h6.51v2.8h-6.51zM1198.2 145.1h6.51v2.8h-6.51zM1198.2 155.6h6.51v2.8h-6.51zM1198.2 153.1h6.51v2.8h-6.51zM1198.2 138.1h6.51v2.8h-6.51zM1198.2 171.6h6.51v2.8h-6.51zM1198.2 183.1h6.51v2.8h-6.51zM1198.2 177.1h6.51v2.8h-6.51zM1198.2 172.6h6.51v2.8h-6.51zM1198.2 182.1h6.51v2.8h-6.51zM1198.2 150.1h6.51v2.8h-6.51zM1198.2 140.1h6.51v2.8h-6.51zM1198.2 118.6h6.51v2.8h-6.51zM1198.2 128.6h6.51v2.8h-6.51zM1198.2 101.1h6.51v2.8h-6.51zM1198.2 102.1h6.51v2.8h-6.51zM1198.2 132.6h6.51v2.8h-6.51zM1204.6 156.6h6.51v2.8h-6.51zM1204.6 143.1h6.51v2.8h-6.51zM1204.6 153.1h6.51v2.8h-6.51zM1204.6 150.1h6.51v2.8h-6.51zM1204.6 135.1h6.51v2.8h-6.51zM1204.6 168.6h6.51v2.8h-6.51zM1204.6 180.1h6.51v2.8h-6.51zM1204.6 173.6h6.51v2.8h-6.51zM1204.6 155.6h6.51v2.8h-6.51zM1204.6 169.6h6.51v2.8h-6.51zM1204.6 179.1h6.51v2.8h-6.51zM1204.6 148.1h6.51v2.8h-6.51zM1204.6 139.1h6.51v2.8h-6.51zM1204.6 118.6h6.51v2.8h-6.51zM1204.6 127.6h6.51v2.8h-6.51zM1204.6 101.1h6.51v2.8h-6.51zM1204.6 102.1h6.51v2.8h-6.51zM1204.6 131.6h6.51v2.8h-6.51zM1211.1 154.6h6.51v2.8h-6.51zM1211.1 141.1h6.51v2.8h-6.51zM1211.1 150.1h6.51v2.8h-6.51zM1211.1 147.1h6.51v2.8h-6.51zM1211.1 131.6h6.51v2.8h-6.51zM1211.1 157.6h6.51v2.8h-6.51zM1211.1 168.6h6.51v2.8h-6.51zM1211.1 161.6h6.51v2.8h-6.51zM1211.1 143.1h6.51v2.8h-6.51zM1211.1 158.6h6.51v2.8h-6.51zM1211.1 167.6h6.51v2.8h-6.51zM1211.1 140.1h6.51v2.8h-6.51zM1211.1 115.6h6.51v2.8h-6.51zM1211.1 123.6h6.51v2.8h-6.51zM1211.1 101.1h6.51v2.8h-6.51zM1211.1 102.1h6.51v2.8h-6.51zM1211.1 126.6h6.51v2.8h-6.51zM1211.1 130.6h6.51v2.8h-6.51zM1211.1 151.1h6.51v2.8h-6.51zM1217.5 157.6h6.51v2.8h-6.51zM1217.5 145.1h6.51v2.8h-6.51zM1217.5 128.6h6.51v2.8h-6.51zM1217.5 101.1h6.51v2.8h-6.51zM1217.5 102.1h6.51v2.8h-6.51zM1217.5 127.6h6.51v2.8h-6.51zM1217.5 148.1h6.51v2.8h-6.51z"/>
</g>
<rect x="1224.9" y="0" width="15.2" height="1107" fill="#5f5f5f"/>
<rect x="1240.3" y="0" width="5" height="1107" fill="#222222"/>
<rect x="1240.3" y="0" width="5" height="135" fill="#101010"/>
<g fill="none" stroke="#bcbcbc" stroke-width="1.5">
<path d="M962.9 380.5a14.4 14.4 0 1 0 14.2 0M970 376.4v13.2"/>
<circle cx="1111.2" cy="393.2" r="14.4"/>
<path d="M1193 384h19.6M1193 393.3h19.6M1193 402.7h19.6" stroke-width="1.8"/>
</g>
<rect x="905.5" y="421.4" width="314" height="30" fill="#808080" rx="4.5" stroke="#7b7b7b" stroke-width="1"/>
<g fill="none" stroke="#bcbcbc" stroke-width="1.6"><circle cx="927.4" cy="433.4" r="5.4"/><path d="M931.4 437.6l7.2 7.2"/></g>
<text x="950.4" y="443" font-size="20" fill="#e4e4e4" textLength="31.5" lengthAdjust="spacingAndGlyphs">film</text>
<path d="M1190.2 435.7l8-8.6h15.6v17.2h-15.6z" fill="#e6e6e6"/>
<path d="M1201.2 431.6l8 8M1209.2 431.6l-8 8" stroke="#5a5a5a" stroke-width="1.9"/>
<rect x="900.3" y="454" width="324.2" height="600" fill="#6a6a6a"/>
<rect x="900.3" y="454.5" width="309.7" height="599.5" fill="#737373"/>
<rect x="900.5" y="454.5" width="309.5" height="47.5" fill="#6a6a6a"/>
<rect x="900.5" y="501.5" width="309.5" height="1" fill="#797979"/>
<rect x="1210.9" y="455.4" width="11.9" height="596.6" fill="#5f5f5f" rx="5.9"/>
<rect x="1212.3" y="456.4" width="9.4" height="401" fill="#929292" rx="4.7"/>
<circle cx="924.3" cy="477.8" r="8.2" fill="#a2a2a2"/>
<g fill="none" stroke="#f2f2f2" stroke-width="1.5"><path d="M919.9 470.6a8.5 8.5 0 1 0 8.8 0M924.3 468v10.5"/></g>
<text x="948.8" y="483.5" font-size="22" fill="#d2d2d2" textLength="77.5" lengthAdjust="spacingAndGlyphs">filmic rgb</text>
<g fill="none" stroke="#bcbcbc" stroke-width="1.6">
<path d="M1122.5 474.5h11.5v11.5h-11.5zM1117.3 481.5v-11.5h11.5" />
<circle cx="1155.4" cy="477.8" r="8.6"/><path d="M1155.4 472.9v9.8"/>
<path d="M1177 470.6h17M1177 477.8h17M1177 485h17"/>
</g>
<path d="M1116.5 469.2h12v4.2h-7v7.4h-5z" fill="#bcbcbc" opacity=".55"/>
<rect x="1109" y="508.3" width="88.3" height="24" fill="#616161"/>
<text x="1115.7" y="526.3" font-size="20" fill="#e6e6e6" textLength="74.5" lengthAdjust="spacingAndGlyphs">look only</text>
<rect x="918.2" y="540.4" width="242.0" height="253.89999999999998" fill="#5e5e5e"/>
<g stroke="#3a3a3a" stroke-width="1.2" fill="none">
<path d="M918.2 540.4V794.3M918.2 540.4H1160.2"/>
<path d="M978.7 540.4V794.3M918.2 603.9H1160.2"/>
<path d="M1039.2 540.4V794.3M918.2 667.3H1160.2"/>
<path d="M1099.7 540.4V794.3M918.2 730.8H1160.2"/>
<path d="M1160.2 540.4V794.3M918.2 794.3H1160.2"/>
<path d="M918.2 794.3L1160.2 540.4" stroke="#383838"/>
</g>
<path d="M918.2 785.2C921.5 784.9 931.3 784.4 937.9 783.6C944.5 782.8 950.9 781.7 957.7 780.3C964.5 778.9 972.6 777.0 978.6 775.0C984.6 773.0 989.1 771.0 993.9 768.1C998.6 765.2 1003.2 761.5 1007.1 757.7C1011.0 753.9 1014.0 749.9 1017.0 745.4C1020.0 740.9 1022.7 735.8 1025.2 730.6C1027.7 725.4 1029.9 719.6 1031.8 714.1C1033.7 708.6 1035.3 702.5 1036.7 697.6C1038.1 692.7 1039.0 688.9 1040.0 684.5C1041.0 680.1 1042.0 675.3 1043.0 671.3C1044.0 667.3 1045.0 664.2 1045.8 660.6C1046.6 657.0 1047.1 653.8 1048.0 649.8C1048.9 645.8 1050.1 641.4 1051.3 636.7C1052.5 632.1 1054.1 626.4 1055.4 621.9C1056.7 617.4 1057.8 613.4 1059.0 609.5C1060.2 605.6 1061.1 602.8 1062.8 598.8C1064.5 594.8 1067.2 589.5 1069.4 585.6C1071.6 581.8 1073.2 579.1 1076.0 575.7C1078.8 572.3 1082.1 568.3 1085.9 565.0C1089.7 561.7 1093.5 558.5 1099.0 555.7C1104.5 552.9 1112.8 550.0 1118.8 548.1C1124.8 546.2 1128.4 545.3 1135.3 544.1C1142.2 542.9 1155.9 541.3 1160.0 540.8" fill="none" stroke="#ffffff" stroke-width="2.6" stroke-linecap="round"/>
<circle cx="918.2" cy="785.2" r="6" fill="#fff"/>
<circle cx="1160.0" cy="540.8" r="6" fill="#fff"/>
<circle cx="1045.8" cy="660.6" r="7.2" fill="#fff" stroke="#c08408" stroke-width="2.7"/>
<path d="M1225.6 535.5v29l14.5-14.5z" fill="#e6e6e6"/>
<rect x="1133" y="817" width="64.5" height="35" fill="#7a7a7a"/>
<rect x="1133" y="850" width="64.5" height="2.8" fill="#f2f2f2"/>
<text x="914" y="840.8" font-size="20" fill="#a9a9a9" textLength="105" lengthAdjust="spacingAndGlyphs">scene reco...</text>
<text x="1032.7" y="840.8" font-size="20" fill="#a9a9a9" textLength="36.5" lengthAdjust="spacingAndGlyphs">look</text>
<text x="1075.5" y="840.8" font-size="20" fill="#a9a9a9" textLength="55.5" lengthAdjust="spacingAndGlyphs">display</text>
<text x="1134.5" y="840.8" font-size="20" fill="#f0f0f0" textLength="54.5" lengthAdjust="spacingAndGlyphs">optio...</text>
<text x="912.6" y="882.5" font-size="20" fill="#dfdfdf" textLength="113.8" lengthAdjust="spacingAndGlyphs">color science</text>
<text x="1088.3" y="882.5" font-size="20" fill="#dfdfdf" textLength="78" lengthAdjust="spacingAndGlyphs">v7 (2023)</text>
<text x="912.6" y="914.4" font-size="20" fill="#dfdfdf" textLength="175.8" lengthAdjust="spacingAndGlyphs">contrast in highlights</text>
<text x="1128.8" y="914.4" font-size="20" fill="#dfdfdf" textLength="36.8" lengthAdjust="spacingAndGlyphs">safe</text>
<text x="912.6" y="946.1" font-size="20" fill="#dfdfdf" textLength="171.3" lengthAdjust="spacingAndGlyphs">contrast in shadows</text>
<text x="1128.8" y="946.1" font-size="20" fill="#dfdfdf" textLength="36.8" lengthAdjust="spacingAndGlyphs">safe</text>
<g fill="none" stroke="#e2e2e2" stroke-width="1.7">
<path d="M1179.8 873.4l5.2 5.2l5.2-5.2"/>
<path d="M1179.8 905.2l5.2 5.2l5.2-5.2"/>
<path d="M1179.8 937l5.2 5.2l5.2-5.2"/>
</g>
<rect x="914.3" y="956.8" width="29.4" height="28.6" fill="#7f7f7f" rx="3.5" stroke="#6c6c6c" stroke-width="1"/>
<text x="952" y="977.2" font-size="20" fill="#dfdfdf" textLength="242.5" lengthAdjust="spacingAndGlyphs">use custom middle-gray va...</text>
<rect x="914.3" y="990" width="29.4" height="28.6" fill="#8a8a8a" rx="3.5" stroke="#6c6c6c" stroke-width="1"/>
<path d="M920.3 1005.2l6.9 6.2l12.4-12.4" fill="none" stroke="#ffffff" stroke-width="4.1"/>
<text x="952" y="1010.1" font-size="20" fill="#dfdfdf" textLength="177" lengthAdjust="spacingAndGlyphs">auto adjust hardness</text>
<text x="912.6" y="1043.6" font-size="20" fill="#dfdfdf" textLength="235.5" lengthAdjust="spacingAndGlyphs">iterations of high-quality re...</text>
<text x="1156.3" y="1043.6" font-size="20" fill="#dfdfdf" textLength="9" lengthAdjust="spacingAndGlyphs">1</text>
<path d="M935 1054l2.5-4l2.5 4z" fill="#f2f2f2"/>
<rect x="900.3" y="1054" width="324.2" height="48.3" fill="#6a6a6a"/>
<rect x="900.3" y="1101.8" width="324.2" height="1.5" fill="#7a7a7a"/>
<text x="919.6" y="1083.6" font-size="22" fill="#d4d4d4" textLength="95" lengthAdjust="spacingAndGlyphs">module or...</text>
<text x="1019.5" y="1083.6" font-size="20" fill="#dedede" textLength="86" lengthAdjust="spacingAndGlyphs">v5.0 JPEG</text>
<g fill="none" stroke="#bcbcbc" stroke-width="1.6">
<circle cx="1170.2" cy="1077.8" r="8.6"/><path d="M1170.2 1073v9.6"/>
<path d="M1192.4 1070.5h16.2M1192.4 1078.2h16.2M1192.4 1086h16.2"/>
</g>
<rect x="1241.2" y="0" width="4" height="22" fill="#e6e6ee"/>
<path d="M1245 50c-6 2-6 30 0 33" fill="none" stroke="#e4e4e4" stroke-width="2.4"/>
<rect x="1241.2" y="368" width="2.1" height="21.5" fill="#e2e2e2"/>
<rect x="1241.2" y="461" width="2.1" height="16" fill="#e2e2e2"/>
<rect x="1241.2" y="532" width="2.1" height="17.5" fill="#e2e2e2"/>
<rect x="1241.2" y="620" width="2.1" height="14" fill="#e2e2e2"/>
<rect x="1241.2" y="690" width="2.1" height="16.5" fill="#e2e2e2"/>
<rect x="1241.2" y="738" width="2.1" height="17" fill="#e2e2e2"/>
<rect x="1241.2" y="774" width="2.1" height="17" fill="#e2e2e2"/>
<path d="M1245 419.5c-4.6 .6-4.6 11.6 0 12.4" fill="none" stroke="#dedede" stroke-width="2"/>
<path d="M1242 790q.2 3.2 3 3.2" fill="none" stroke="#dedede" stroke-width="2"/>
<rect x="1240.3" y="974" width="5" height="1" fill="#343434"/>
<rect x="1240.3" y="1080" width="5" height="1" fill="#343434"/>
<path d="M1245.5 1008c-6.5 2-6.5 38 0 40z" fill="#f4f4f4"/>
<rect x="0" y="1057" width="900" height="46" fill="#6a6a6a"/>
<circle cx="-3.6" cy="1085" r="7" fill="none" stroke="#b6b6b6" stroke-width="1.8"/>
<g fill="none" stroke="#b6b6b6" stroke-width="1.8">
<path d="M27.1 1074.2h18.7v12.3h-18.7zM33.2 1074.2v-5.3h17.8v12.3h-5.2M36.4 1086.5v5M31.3 1091.6h10.7"/>
</g>
<text x="83.5" y="1090.2" font-size="20" fill="#dcdcdc" textLength="275.5" lengthAdjust="spacingAndGlyphs">1/inf • f/0.0 • 0.0 mm • 0 ISO</text>
<text x="378.7" y="1090.2" font-size="20" fill="#dcdcdc" textLength="65" lengthAdjust="spacingAndGlyphs">Rating:</text>
<polygon points="460.6,1072.2 463.0,1079.1 470.3,1079.2 464.5,1083.7 466.6,1090.7 460.6,1086.5 454.6,1090.7 456.7,1083.7 450.9,1079.2 458.2,1079.1" fill="#ececec"/>
<path d="M446.5 1107l4.5-4.2l4.5 4.2z" fill="#f2f2f2"/>
<g fill="none" stroke="#b6b6b6" stroke-width="1.6">
<path d="M515.5 1069.2h-2.6a2.6 2.6 0 0 0 -2.6 2.6v4M515.5 1091h-2.6a2.6 2.6 0 0 1 -2.6 -2.6v-4M534.7 1069.2h2.6a2.6 2.6 0 0 1 2.6 2.6v4M534.7 1091h2.6a2.6 2.6 0 0 0 2.6 -2.6v-4"/>
<circle cx="525.2" cy="1080.1" r="6.4"/><path d="M518.8 1080.1h12.8"/>
</g>
<rect x="555.9" y="1060.6" width="36.3" height="39" fill="#8f8f8f" rx="4.5" stroke="#c2c2c2" stroke-width="1.6"/>
<circle cx="574.9" cy="1076.2" r="10.1" fill="#fff"/>
<path d="M568.6 1082h12.6l-1.4 5h-9.8z" fill="#fff"/>
<path d="M570 1088.3h9.8v2.2h-9.8zM570.4 1091.6h9a4.6 3 0 0 1 -9 0z" fill="#fff"/>
<rect x="605.5" y="1060.6" width="36.3" height="39" fill="#8f8f8f" rx="4.5" stroke="#c2c2c2" stroke-width="1.6"/>
<rect x="609.9" y="1070.8" width="29" height="19" fill="none" stroke="#fff" stroke-width="1.7"/>
<g stroke="#fff" stroke-width="1.4" fill="#fff">
<path d="M618.2 1077.6l-3.8-3.8M614 1077v-3.6h3.6z"/>
<path d="M630.6 1077.6l3.8-3.8M634.8 1077v-3.6h-3.6z"/>
<path d="M618.2 1083l-3.8 3.8M614 1083.6v3.6h3.6z"/>
<path d="M630.6 1083l3.8 3.8M634.8 1083.6v3.6h-3.6z"/>
</g>
<rect x="662" y="1068.4" width="12.3" height="11.8" fill="#5c5c5c"/>
<rect x="674.3" y="1068.4" width="11.6" height="11.8" fill="#808080"/>
<rect x="662" y="1080.2" width="12.3" height="11.6" fill="#808080"/>
<rect x="674.3" y="1080.2" width="11.6" height="11.6" fill="#4a4a4a"/>
<rect x="661.8" y="1068.3" width="24.2" height="23.8" rx="3" fill="none" stroke="#a8a8a8" stroke-width="1.5"/>
<path d="M734.5 1069.5v21.5h-22.5z" fill="#b6b6b6"/>
<rect x="711.3" y="1068.3" width="24" height="23.8" rx="3" fill="none" stroke="#b6b6b6" stroke-width="1.5"/>
<path d="M763.9 1066.8q14 5 21.3 17.8l-17.6 8.6q-7-12-3.7-26.4z" fill="#b6b6b6"/>
<path d="M769 1074l11.4 9.6l-10.6 5.4z" fill="#6a6a6a"/>
<path d="M822.3 1067l13.8 23.8h-27.6z" fill="#b6b6b6"/>
<path d="M820.6 1074.4h3.6l-.6 9.4h-2.4zM820.8 1085.2h3.2v3.4h-3.2z" fill="#6a6a6a"/>
<g fill="none" stroke="#b6b6b6" stroke-width="1.5"><rect x="859.9" y="1068.3" width="24.2" height="23.8" rx="3"/><path d="M868 1071.5v17.5M875.6 1071.5v17.5M863 1076.3h18M863 1084h18"/></g>
</svg></body></html>
